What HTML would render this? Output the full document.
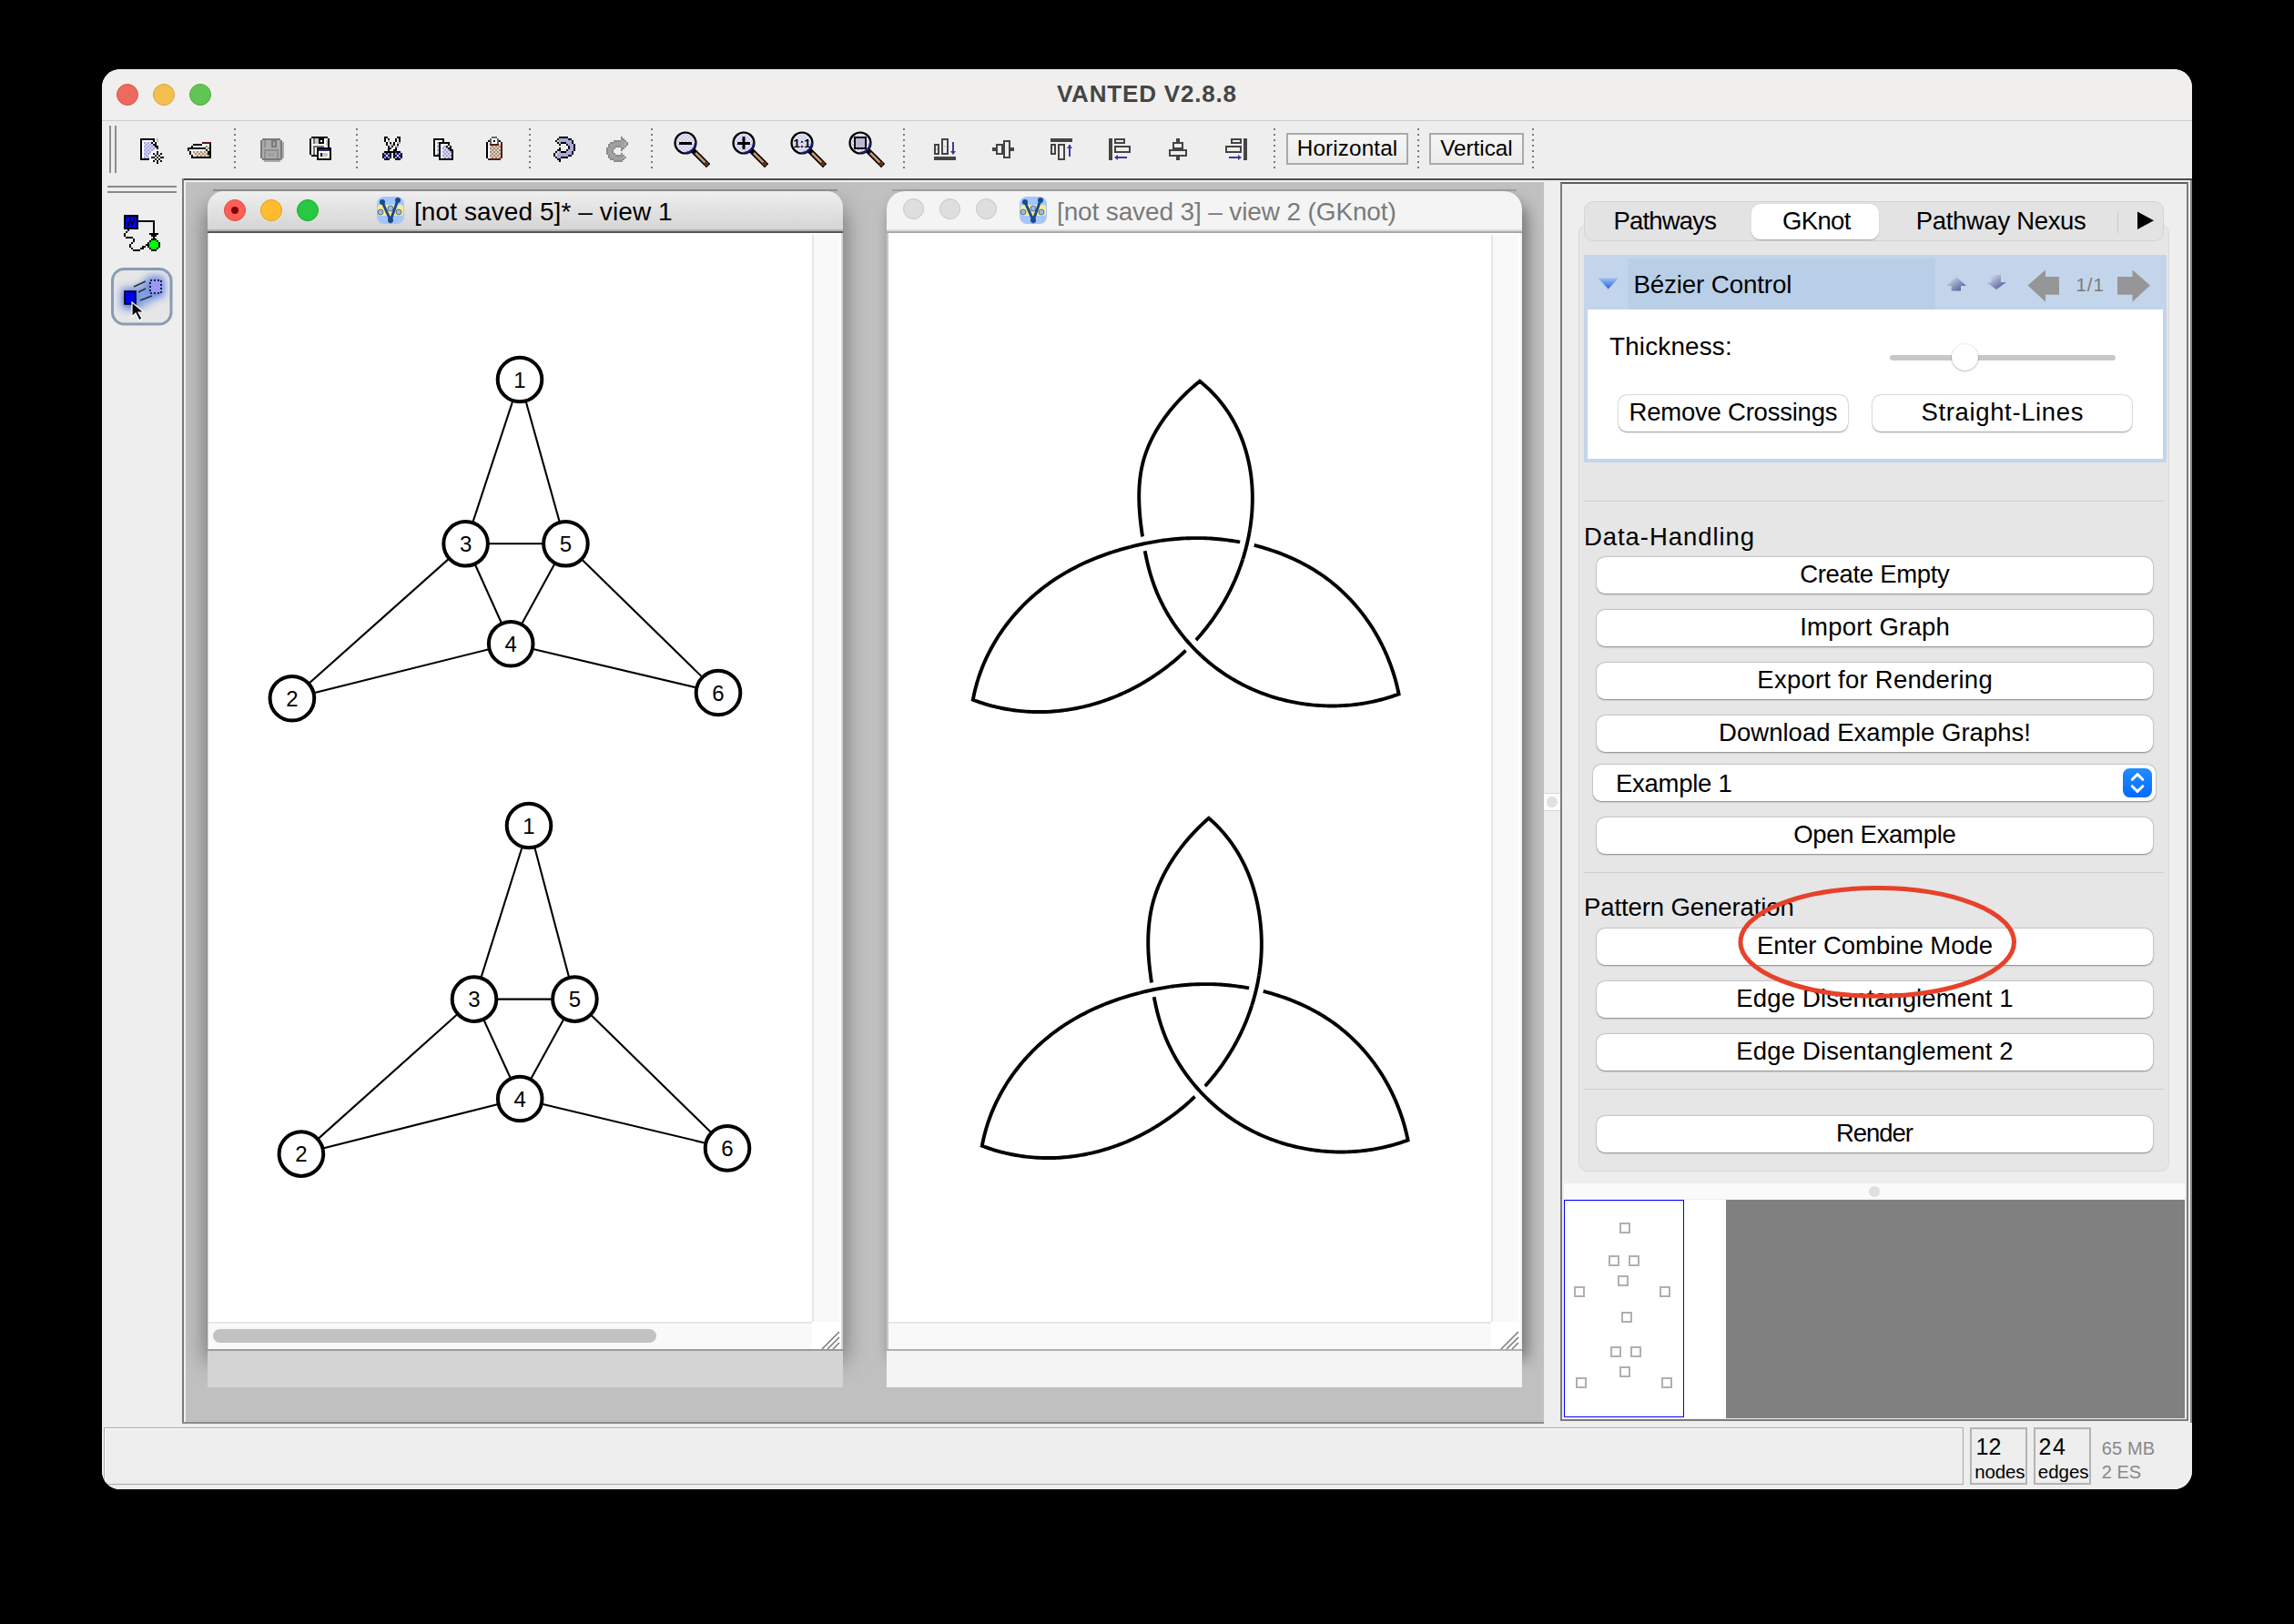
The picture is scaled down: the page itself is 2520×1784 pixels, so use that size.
<!DOCTYPE html><html><head><meta charset="utf-8"><style>
html,body{margin:0;padding:0;background:#000;width:2520px;height:1784px;overflow:hidden;font-family:"Liberation Sans",sans-serif;}
#win{position:absolute;left:0;top:0;width:2520px;height:1784px;clip-path:inset(76px 112px 148px 112px round 20px);background:#eeeeee;}
svg{position:absolute;left:0;top:0;}
</style></head><body><div id="win">
<div style="position:absolute;left:112px;top:76px;width:2296px;height:56px;background:#f0efee;"></div>
<div style="position:absolute;left:112px;top:132px;width:2296px;height:1px;background:#cdcdcd;"></div>
<div style="position:absolute;left:128px;top:92px;width:22px;height:22px;border-radius:50%;background:#ed6a5e;border:1px solid #d05a4f;"></div>
<div style="position:absolute;left:168px;top:92px;width:22px;height:22px;border-radius:50%;background:#f5bf4f;border:1px solid #d9a23c;"></div>
<div style="position:absolute;left:208px;top:92px;width:22px;height:22px;border-radius:50%;background:#61c554;border:1px solid #52a843;"></div>
<div style="position:absolute;left:1160.90px;top:89.47px;font-size:26px;line-height:29.90px;color:#454545;font-weight:bold;white-space:nowrap;letter-spacing:0.817px;">VANTED V2.8.8</div>
<div style="position:absolute;left:112px;top:133px;width:2296px;height:63px;background:#eeeeee;"></div>
<div style="position:absolute;left:200px;top:196px;width:2208px;height:2px;background:#4c4c4c;"></div>
<div style="position:absolute;left:1413px;top:146px;width:134px;height:35px;box-sizing:border-box;border:2px solid #a9a9a9;background:linear-gradient(#f6f6f6,#ececec);"></div>
<div style="position:absolute;left:1424.75px;top:149.01px;font-size:24.3px;line-height:27.95px;color:#000;font-weight:normal;white-space:nowrap;letter-spacing:0.121px;">Horizontal</div>
<div style="position:absolute;left:1570px;top:146px;width:104px;height:35px;box-sizing:border-box;border:2px solid #a9a9a9;background:linear-gradient(#f6f6f6,#ececec);"></div>
<div style="position:absolute;left:1582.20px;top:149.01px;font-size:24.3px;line-height:27.95px;color:#000;font-weight:normal;white-space:nowrap;letter-spacing:-0.015px;">Vertical</div>
<div style="position:absolute;left:118px;top:204px;width:76px;height:2px;background:#8a8a8a;"></div>
<div style="position:absolute;left:118px;top:210px;width:76px;height:2px;background:#8a8a8a;"></div>
<div style="position:absolute;left:200px;top:198px;width:1496px;height:1366px;background:#c0c0c0;"></div>
<div style="position:absolute;left:200px;top:196px;width:2px;height:1367px;background:#7a7a7a;"></div>
<div style="position:absolute;left:202px;top:198px;width:1494px;height:2px;background:#f0f0f0;"></div>
<div style="position:absolute;left:202px;top:198px;width:2px;height:1365px;background:#f0f0f0;"></div>
<div style="position:absolute;left:200px;top:1562px;width:1496px;height:2px;background:#8c8c8c;"></div>
<div style="position:absolute;left:1696px;top:198px;width:18px;height:1365px;background:#eeeeee;"></div>
<div style="position:absolute;left:1696px;top:871px;width:18px;height:20px;background:#fcfcfc;border-top:1px solid #d8d8d8;border-bottom:1px solid #d8d8d8;box-sizing:border-box;"></div>
<div style="position:absolute;left:1699px;top:875px;width:12px;height:12px;border-radius:50%;background:#e0e0e0;"></div>
<div style="position:absolute;left:1714px;top:200px;width:690px;height:1361px;background:#eeeeee;border:2px solid #7c7c7c;border-top-color:#5c5c5c;box-sizing:border-box;"></div>
<div style="position:absolute;left:2406px;top:198px;width:2px;height:1365px;background:#8a8a8a;"></div>
<div style="position:absolute;left:234px;top:207.5px;width:686px;height:2.0px;background:#909090;"></div>
<div style="position:absolute;left:980px;top:207.5px;width:686px;height:2.0px;background:#a0a0a0;"></div>
<div style="position:absolute;left:228px;top:226px;width:698px;height:1266px;border-radius:18px 18px 0 0;box-shadow:0 0 24px 2px rgba(0,0,0,0.42);"></div>
<div style="position:absolute;left:228px;top:210px;width:698px;height:1314px;border-radius:18px 18px 0 0;background:#d4d4d4;"></div>
<div style="position:absolute;left:228px;top:210px;width:698px;height:44px;border-radius:18px 18px 0 0;background:linear-gradient(#efefef,#d4d4d4);"></div>
<div style="position:absolute;left:228px;top:252px;width:698px;height:2px;background:#b4b4b4;"></div>
<div style="position:absolute;left:228px;top:254px;width:698px;height:2px;background:#555;"></div>
<div style="position:absolute;left:229px;top:256px;width:695px;height:1228px;background:#fff;"></div>
<div style="position:absolute;left:892px;top:258px;width:2px;height:1194px;background:#e6e6e6;"></div>
<div style="position:absolute;left:894px;top:258px;width:28px;height:1194px;background:#f9f9f9;"></div>
<div style="position:absolute;left:229px;top:1452px;width:663px;height:2px;background:#e6e6e6;"></div>
<div style="position:absolute;left:229px;top:1454px;width:663px;height:29px;background:#f9f9f9;"></div>
<div style="position:absolute;left:234px;top:1460px;width:487px;height:15px;border-radius:8px;background:#c2c2c2;"></div>
<svg width="2520" height="1784"><path d="M922 1463 L903 1482 M922 1469 L909 1482 M922 1475 L915 1482" stroke="#777" stroke-width="1.5"/></svg>
<div style="position:absolute;left:228px;top:1482px;width:698px;height:2px;background:#9a9a9a;"></div>
<div style="position:absolute;left:246px;top:219px;width:22px;height:22px;border-radius:50%;background:#fe5f57;border:1px solid #e2463f;"></div>
<div style="position:absolute;left:286px;top:219px;width:22px;height:22px;border-radius:50%;background:#febc2e;border:1px solid #e1a116;"></div>
<div style="position:absolute;left:326px;top:219px;width:22px;height:22px;border-radius:50%;background:#28c840;border:1px solid #1aab29;"></div>
<div style="position:absolute;left:254px;top:227px;width:8px;height:8px;border-radius:50%;background:#7e0508;"></div>
<div style="position:absolute;left:455.00px;top:217.16px;font-size:28px;line-height:32.20px;color:#000;font-weight:normal;white-space:nowrap;letter-spacing:0.089px;">[not saved 5]* – view 1</div>
<div style="position:absolute;left:974px;top:222px;width:698px;height:1270px;border-radius:20px 20px 0 0;box-shadow:5px 0 16px 1px rgba(0,0,0,0.40);"></div>
<div style="position:absolute;left:974px;top:210px;width:698px;height:1314px;border-radius:20px 20px 0 0;background:#f4f4f4;"></div>
<div style="position:absolute;left:974px;top:252px;width:698px;height:2px;background:#dcdcdc;"></div>
<div style="position:absolute;left:974px;top:256px;width:2px;height:1226px;background:#c8c8c8;"></div>
<div style="position:absolute;left:974px;top:254px;width:698px;height:2px;background:#a8a8a8;"></div>
<div style="position:absolute;left:976px;top:256px;width:694px;height:1226px;background:#fff;"></div>
<div style="position:absolute;left:1638px;top:258px;width:2px;height:1194px;background:#e6e6e6;"></div>
<div style="position:absolute;left:1640px;top:258px;width:28px;height:1194px;background:#f9f9f9;"></div>
<div style="position:absolute;left:976px;top:1452px;width:662px;height:2px;background:#e6e6e6;"></div>
<div style="position:absolute;left:976px;top:1454px;width:662px;height:28px;background:#f9f9f9;"></div>
<svg width="2520" height="1784"><path d="M1668 1463 L1649 1482 M1668 1469 L1655 1482 M1668 1475 L1661 1482" stroke="#777" stroke-width="1.5"/></svg>
<div style="position:absolute;left:974px;top:1482px;width:698px;height:2px;background:#b0b0b0;"></div>
<div style="position:absolute;left:992px;top:218px;width:23px;height:23px;border-radius:50%;background:#dedede;border:1px solid #c6c6c6;box-sizing:border-box;"></div>
<div style="position:absolute;left:1032px;top:218px;width:23px;height:23px;border-radius:50%;background:#dedede;border:1px solid #c6c6c6;box-sizing:border-box;"></div>
<div style="position:absolute;left:1072px;top:218px;width:23px;height:23px;border-radius:50%;background:#dedede;border:1px solid #c6c6c6;box-sizing:border-box;"></div>
<div style="position:absolute;left:1161.00px;top:217.16px;font-size:28px;line-height:32.20px;color:#7a7a7a;font-weight:normal;white-space:nowrap;letter-spacing:-0.133px;">[not saved 3] – view 2 (GKnot)</div>
<svg width="2520" height="1784"><line x1="571.0" y1="417.0" x2="511.6" y2="597.3" stroke="#000" stroke-width="2.1"/><line x1="571.0" y1="417.0" x2="621.4" y2="597.3" stroke="#000" stroke-width="2.1"/><line x1="511.6" y1="597.3" x2="621.4" y2="597.3" stroke="#000" stroke-width="2.1"/><line x1="511.6" y1="597.3" x2="561.2" y2="707.2" stroke="#000" stroke-width="2.1"/><line x1="621.4" y1="597.3" x2="561.2" y2="707.2" stroke="#000" stroke-width="2.1"/><line x1="511.6" y1="597.3" x2="320.9" y2="767.2" stroke="#000" stroke-width="2.1"/><line x1="621.4" y1="597.3" x2="789.0" y2="761.0" stroke="#000" stroke-width="2.1"/><line x1="561.2" y1="707.2" x2="320.9" y2="767.2" stroke="#000" stroke-width="2.1"/><line x1="561.2" y1="707.2" x2="789.0" y2="761.0" stroke="#000" stroke-width="2.1"/><circle cx="571.0" cy="417.0" r="24.3" fill="#fff" stroke="#000" stroke-width="4"/><text x="571.0" y="425.7" font-family="Liberation Sans" font-size="24" text-anchor="middle">1</text><circle cx="511.6" cy="597.3" r="24.3" fill="#fff" stroke="#000" stroke-width="4"/><text x="511.6" y="606.0" font-family="Liberation Sans" font-size="24" text-anchor="middle">3</text><circle cx="621.4" cy="597.3" r="24.3" fill="#fff" stroke="#000" stroke-width="4"/><text x="621.4" y="606.0" font-family="Liberation Sans" font-size="24" text-anchor="middle">5</text><circle cx="561.2" cy="707.2" r="24.3" fill="#fff" stroke="#000" stroke-width="4"/><text x="561.2" y="715.9" font-family="Liberation Sans" font-size="24" text-anchor="middle">4</text><circle cx="320.9" cy="767.2" r="24.3" fill="#fff" stroke="#000" stroke-width="4"/><text x="320.9" y="775.9" font-family="Liberation Sans" font-size="24" text-anchor="middle">2</text><circle cx="789.0" cy="761.0" r="24.3" fill="#fff" stroke="#000" stroke-width="4"/><text x="789.0" y="769.7" font-family="Liberation Sans" font-size="24" text-anchor="middle">6</text><line x1="581.0" y1="907.0" x2="521.0" y2="1097.6" stroke="#000" stroke-width="2.1"/><line x1="581.0" y1="907.0" x2="631.4" y2="1097.6" stroke="#000" stroke-width="2.1"/><line x1="521.0" y1="1097.6" x2="631.4" y2="1097.6" stroke="#000" stroke-width="2.1"/><line x1="521.0" y1="1097.6" x2="571.2" y2="1207.0" stroke="#000" stroke-width="2.1"/><line x1="631.4" y1="1097.6" x2="571.2" y2="1207.0" stroke="#000" stroke-width="2.1"/><line x1="521.0" y1="1097.6" x2="330.9" y2="1267.6" stroke="#000" stroke-width="2.1"/><line x1="631.4" y1="1097.6" x2="799.0" y2="1261.4" stroke="#000" stroke-width="2.1"/><line x1="571.2" y1="1207.0" x2="330.9" y2="1267.6" stroke="#000" stroke-width="2.1"/><line x1="571.2" y1="1207.0" x2="799.0" y2="1261.4" stroke="#000" stroke-width="2.1"/><circle cx="581.0" cy="907.0" r="24.3" fill="#fff" stroke="#000" stroke-width="4"/><text x="581.0" y="915.7" font-family="Liberation Sans" font-size="24" text-anchor="middle">1</text><circle cx="521.0" cy="1097.6" r="24.3" fill="#fff" stroke="#000" stroke-width="4"/><text x="521.0" y="1106.3" font-family="Liberation Sans" font-size="24" text-anchor="middle">3</text><circle cx="631.4" cy="1097.6" r="24.3" fill="#fff" stroke="#000" stroke-width="4"/><text x="631.4" y="1106.3" font-family="Liberation Sans" font-size="24" text-anchor="middle">5</text><circle cx="571.2" cy="1207.0" r="24.3" fill="#fff" stroke="#000" stroke-width="4"/><text x="571.2" y="1215.7" font-family="Liberation Sans" font-size="24" text-anchor="middle">4</text><circle cx="330.9" cy="1267.6" r="24.3" fill="#fff" stroke="#000" stroke-width="4"/><text x="330.9" y="1276.3" font-family="Liberation Sans" font-size="24" text-anchor="middle">2</text><circle cx="799.0" cy="1261.4" r="24.3" fill="#fff" stroke="#000" stroke-width="4"/><text x="799.0" y="1270.1" font-family="Liberation Sans" font-size="24" text-anchor="middle">6</text><path d="M1317.90 418.80L1315.92 420.40L1313.95 422.03L1311.99 423.70L1310.04 425.39L1308.10 427.12L1306.18 428.87L1304.27 430.66L1302.37 432.47L1300.50 434.31L1298.64 436.18L1296.80 438.08L1294.98 440.01L1293.18 441.96L1291.40 443.94L1289.65 445.94L1287.93 447.97L1286.23 450.02L1284.55 452.09L1282.91 454.19L1281.30 456.31L1279.71 458.46L1278.16 460.62L1276.64 462.81L1275.16 465.02L1273.71 467.25L1272.30 469.49L1270.92 471.76L1269.59 474.05L1268.29 476.35L1267.04 478.67L1265.82 481.01L1264.66 483.36L1263.53 485.73L1262.45 488.12L1261.42 490.52L1260.44 492.93L1259.51 495.36L1258.63 497.80L1257.80 500.26L1257.02 502.73L1256.29 505.21L1255.63 507.70L1255.01 510.20L1254.44 512.71L1253.93 515.23L1253.47 517.76L1253.05 520.30L1252.68 522.85L1252.36 525.40L1252.08 527.97L1251.84 530.54L1251.64 533.12L1251.49 535.70L1251.37 538.29L1251.29 540.89L1251.25 543.49L1251.24 546.10L1251.27 548.71L1251.33 551.32L1251.42 553.94L1251.54 556.56L1251.69 559.18L1251.86 561.80L1252.07 564.43L1252.29 567.06L1252.54 569.68L1252.82 572.31L1253.11 574.94L1253.43 577.56L1253.76 580.19L1254.11 582.81L1254.47 585.43L1254.85 588.05L1255.24 590.67L1255.65 593.28L1256.07 595.89L1256.51 598.49L1256.96 601.09L1257.43 603.69L1257.92 606.27L1258.43 608.86L1258.96 611.43L1259.51 614.00L1260.09 616.56L1260.68 619.12L1261.31 621.66L1261.96 624.20L1262.63 626.73L1263.34 629.24L1264.07 631.75L1264.83 634.25L1265.63 636.74L1266.46 639.21L1267.32 641.67L1268.21 644.12L1269.14 646.56L1270.10 648.99L1271.10 651.40L1272.13 653.79L1273.19 656.18L1274.29 658.55L1275.42 660.90L1276.58 663.24L1277.77 665.56L1278.99 667.87L1280.24 670.16L1281.53 672.44L1282.84 674.70L1284.19 676.94L1285.56 679.16L1286.97 681.37L1288.40 683.56L1289.86 685.73L1291.35 687.88L1292.87 690.01L1294.42 692.13L1295.99 694.22L1297.59 696.29L1299.22 698.35L1300.88 700.38L1302.56 702.39L1304.26 704.38L1305.99 706.35L1307.75 708.29L1309.53 710.21L1311.34 712.11L1313.17 713.99L1315.02 715.85L1316.90 717.68L1318.80 719.48L1320.72 721.26L1322.66 723.02L1324.63 724.75L1326.62 726.46L1328.63 728.14L1330.67 729.79L1332.72 731.42L1334.79 733.02L1336.89 734.59L1339.00 736.14L1341.13 737.66L1343.28 739.15L1345.46 740.61L1347.64 742.04L1349.85 743.45L1352.08 744.82L1354.32 746.17L1356.58 747.48L1358.86 748.77L1361.15 750.02L1363.46 751.25L1365.79 752.45L1368.13 753.62L1370.48 754.75L1372.85 755.86L1375.23 756.94L1377.63 757.99L1380.04 759.01L1382.46 760.00L1384.90 760.96L1387.34 761.88L1389.80 762.78L1392.27 763.65L1394.75 764.49L1397.24 765.30L1399.75 766.07L1402.26 766.82L1404.78 767.54L1407.31 768.22L1409.84 768.88L1412.39 769.50L1414.94 770.09L1417.50 770.66L1420.07 771.19L1422.65 771.69L1425.23 772.16L1427.82 772.60L1430.41 773.01L1433.01 773.39L1435.61 773.73L1438.21 774.05L1440.82 774.33L1443.44 774.58L1446.05 774.81L1448.67 775.00L1451.30 775.15L1453.92 775.28L1456.55 775.38L1459.17 775.44L1461.80 775.47L1464.43 775.47L1467.06 775.44L1469.68 775.38L1472.31 775.28L1474.93 775.16L1477.56 775.00L1480.18 774.81L1482.80 774.58L1485.42 774.33L1488.03 774.04L1490.64 773.72L1493.25 773.37L1495.85 772.99L1498.45 772.57L1501.04 772.12L1503.63 771.64L1506.21 771.13L1508.79 770.58L1511.36 770.00L1513.92 769.39L1516.47 768.74L1519.02 768.07L1521.56 767.36L1524.09 766.61L1526.61 765.84L1529.12 765.03L1531.63 764.18L1534.12 763.31L1536.60 762.40L1536.00 759.52L1535.36 756.64L1534.68 753.78L1533.97 750.93L1533.22 748.10L1532.43 745.28L1531.60 742.47L1530.74 739.67L1529.84 736.89L1528.90 734.13L1527.93 731.38L1526.92 728.65L1525.87 725.93L1524.79 723.23L1523.68 720.55L1522.53 717.88L1521.34 715.23L1520.12 712.60L1518.86 709.99L1517.57 707.40L1516.25 704.83L1514.89 702.28L1513.50 699.75L1512.08 697.24L1510.62 694.75L1509.13 692.28L1507.61 689.83L1506.05 687.41L1504.46 685.01L1502.84 682.63L1501.19 680.28L1499.50 677.95L1497.79 675.65L1496.04 673.37L1494.26 671.11L1492.46 668.89L1490.62 666.68L1488.75 664.51L1486.85 662.36L1484.92 660.24L1482.96 658.15L1480.97 656.08L1478.96 654.05L1476.91 652.04L1474.83 650.06L1472.73 648.11L1470.60 646.20L1468.44 644.31L1466.25 642.46L1464.03 640.63L1461.79 638.84L1459.52 637.08L1457.22 635.36L1454.90 633.67L1452.55 632.01L1450.17 630.38L1447.77 628.79L1445.34 627.24L1442.89 625.71L1440.41 624.23L1437.91 622.77L1435.39 621.35L1432.85 619.97L1430.28 618.61L1427.70 617.29L1425.10 616.01L1422.48 614.76L1419.84 613.54L1417.18 612.35L1414.51 611.20L1411.82 610.08L1409.12 608.99L1406.40 607.93L1403.67 606.91L1400.93 605.92L1398.17 604.97L1395.41 604.04L1392.63 603.15L1389.84 602.29L1387.05 601.46L1384.25 600.66L1381.44 599.90L1378.62 599.17L1375.80 598.46L1372.97 597.79L1370.13 597.15L1367.30 596.55L1364.45 595.97L1361.61 595.43L1358.76 594.92L1355.90 594.44L1353.05 593.99L1350.18 593.57L1347.32 593.19L1344.46 592.84L1341.59 592.52L1338.72 592.23L1335.84 591.97L1332.97 591.75L1330.09 591.56L1327.22 591.40L1324.34 591.27L1321.46 591.17L1318.59 591.11L1315.71 591.08L1312.83 591.08L1309.95 591.12L1307.08 591.19L1304.20 591.28L1301.32 591.41L1298.45 591.57L1295.58 591.77L1292.71 591.99L1289.84 592.24L1286.97 592.52L1284.10 592.83L1281.24 593.17L1278.38 593.54L1275.52 593.94L1272.66 594.37L1269.81 594.82L1266.96 595.30L1264.11 595.81L1261.27 596.35L1258.43 596.91L1255.59 597.49L1252.76 598.11L1249.93 598.75L1247.10 599.41L1244.28 600.10L1241.46 600.82L1238.65 601.55L1235.84 602.32L1233.04 603.11L1230.25 603.92L1227.46 604.76L1224.68 605.62L1221.91 606.52L1219.15 607.43L1216.39 608.38L1213.65 609.35L1210.91 610.34L1208.19 611.37L1205.48 612.42L1202.78 613.50L1200.09 614.60L1197.41 615.74L1194.75 616.90L1192.10 618.09L1189.47 619.31L1186.85 620.56L1184.24 621.83L1181.66 623.14L1179.08 624.47L1176.53 625.83L1173.99 627.23L1171.47 628.65L1168.97 630.11L1166.49 631.59L1164.03 633.10L1161.58 634.65L1159.16 636.22L1156.76 637.83L1154.38 639.47L1152.03 641.14L1149.69 642.83L1147.38 644.56L1145.09 646.32L1142.83 648.11L1140.59 649.92L1138.37 651.76L1136.18 653.64L1134.01 655.54L1131.87 657.47L1129.76 659.42L1127.67 661.41L1125.61 663.42L1123.57 665.46L1121.57 667.52L1119.59 669.61L1117.64 671.73L1115.72 673.87L1113.83 676.04L1111.96 678.23L1110.13 680.45L1108.33 682.69L1106.56 684.96L1104.82 687.25L1103.12 689.57L1101.44 691.91L1099.80 694.27L1098.19 696.65L1096.62 699.06L1095.08 701.49L1093.57 703.95L1092.10 706.42L1090.66 708.92L1089.26 711.44L1087.90 713.98L1086.57 716.54L1085.28 719.12L1084.02 721.72L1082.81 724.34L1081.63 726.98L1080.49 729.64L1079.39 732.32L1078.33 735.02L1077.30 737.74L1076.32 740.48L1075.38 743.23L1074.48 746.00L1073.62 748.79L1072.80 751.60L1072.03 754.43L1071.30 757.27L1070.61 760.13L1069.96 763.00L1069.36 765.89L1068.80 768.80L1071.42 769.78L1074.05 770.71L1076.69 771.61L1079.33 772.47L1081.97 773.30L1084.62 774.08L1087.27 774.83L1089.92 775.54L1092.57 776.21L1095.23 776.84L1097.89 777.44L1100.56 778.00L1103.22 778.52L1105.89 779.00L1108.56 779.45L1111.23 779.87L1113.90 780.24L1116.57 780.58L1119.24 780.89L1121.91 781.16L1124.58 781.39L1127.25 781.59L1129.92 781.76L1132.59 781.89L1135.26 781.98L1137.92 782.04L1140.59 782.07L1143.25 782.06L1145.91 782.02L1148.57 781.94L1151.22 781.83L1153.87 781.69L1156.52 781.52L1159.17 781.31L1161.81 781.07L1164.44 780.79L1167.08 780.49L1169.70 780.15L1172.33 779.78L1174.94 779.38L1177.56 778.94L1180.16 778.48L1182.76 777.98L1185.36 777.46L1187.95 776.90L1190.53 776.31L1193.10 775.69L1195.67 775.04L1198.23 774.36L1200.78 773.65L1203.33 772.91L1205.86 772.15L1208.39 771.35L1210.91 770.52L1213.42 769.66L1215.92 768.78L1218.41 767.87L1220.89 766.92L1223.36 765.95L1225.82 764.96L1228.27 763.93L1230.71 762.88L1233.14 761.80L1235.56 760.69L1237.96 759.55L1240.35 758.39L1242.73 757.20L1245.10 755.99L1247.46 754.75L1249.80 753.48L1252.13 752.18L1254.45 750.86L1256.75 749.52L1259.04 748.15L1261.31 746.75L1263.57 745.33L1265.82 743.89L1268.04 742.42L1270.26 740.92L1272.46 739.40L1274.64 737.86L1276.81 736.29L1278.96 734.70L1281.09 733.09L1283.21 731.45L1285.31 729.79L1287.39 728.11L1289.46 726.40L1291.51 724.67L1293.53 722.92L1295.55 721.15L1297.54 719.35L1299.51 717.53L1301.46 715.69L1303.40 713.83L1305.31 711.95L1307.21 710.05L1309.08 708.13L1310.94 706.18L1312.77 704.22L1314.58 702.23L1316.37 700.23L1318.14 698.20L1319.89 696.16L1321.62 694.09L1323.32 692.01L1325.00 689.91L1326.66 687.78L1328.29 685.64L1329.90 683.48L1331.49 681.31L1333.05 679.11L1334.59 676.90L1336.11 674.66L1337.60 672.41L1339.06 670.15L1340.51 667.86L1341.92 665.56L1343.31 663.24L1344.67 660.91L1346.01 658.56L1347.32 656.19L1348.60 653.80L1349.86 651.40L1351.09 648.99L1352.29 646.56L1353.47 644.12L1354.62 641.66L1355.74 639.19L1356.83 636.70L1357.89 634.21L1358.93 631.70L1359.93 629.18L1360.91 626.65L1361.86 624.10L1362.78 621.55L1363.67 618.99L1364.53 616.42L1365.36 613.84L1366.16 611.25L1366.93 608.65L1367.67 606.05L1368.37 603.44L1369.05 600.82L1369.70 598.19L1370.32 595.56L1370.90 592.93L1371.45 590.29L1371.97 587.64L1372.46 584.99L1372.92 582.34L1373.35 579.68L1373.74 577.02L1374.10 574.36L1374.43 571.70L1374.72 569.04L1374.98 566.37L1375.21 563.70L1375.40 561.04L1375.56 558.37L1375.68 555.71L1375.78 553.04L1375.83 550.38L1375.85 547.72L1375.84 545.06L1375.79 542.41L1375.71 539.76L1375.59 537.11L1375.44 534.47L1375.25 531.83L1375.02 529.20L1374.76 526.57L1374.46 523.95L1374.12 521.34L1373.75 518.73L1373.34 516.13L1372.90 513.54L1372.41 510.95L1371.89 508.38L1371.33 505.81L1370.73 503.26L1370.10 500.71L1369.43 498.17L1368.71 495.65L1367.96 493.14L1367.17 490.64L1366.34 488.15L1365.48 485.68L1364.57 483.22L1363.62 480.77L1362.63 478.34L1361.60 475.93L1360.53 473.53L1359.43 471.15L1358.28 468.79L1357.09 466.45L1355.85 464.12L1354.58 461.81L1353.26 459.53L1351.91 457.26L1350.51 455.01L1349.07 452.79L1347.58 450.59L1346.06 448.41L1344.49 446.25L1342.87 444.12L1341.22 442.01L1339.52 439.92L1337.78 437.86L1335.99 435.83L1334.16 433.82L1332.28 431.85L1330.36 429.89L1328.40 427.97L1326.39 426.08L1324.34 424.21L1322.24 422.38L1320.09 420.57L1317.90 418.80Z" fill="none" stroke="#000" stroke-width="3.9" stroke-linejoin="miter" stroke-miterlimit="20"/><clipPath id="cpa0_0"><circle cx="1258.5" cy="597.5" r="17"/></clipPath><g clip-path="url(#cpa0_0)"><path d="M1536.60 762.40L1536.00 759.52L1535.36 756.64L1534.68 753.78L1533.97 750.93L1533.22 748.10L1532.43 745.28L1531.60 742.47L1530.74 739.67L1529.84 736.89L1528.90 734.13L1527.93 731.38L1526.92 728.65L1525.87 725.93L1524.79 723.23L1523.68 720.55L1522.53 717.88L1521.34 715.23L1520.12 712.60L1518.86 709.99L1517.57 707.40L1516.25 704.83L1514.89 702.28L1513.50 699.75L1512.08 697.24L1510.62 694.75L1509.13 692.28L1507.61 689.83L1506.05 687.41L1504.46 685.01L1502.84 682.63L1501.19 680.28L1499.50 677.95L1497.79 675.65L1496.04 673.37L1494.26 671.11L1492.46 668.89L1490.62 666.68L1488.75 664.51L1486.85 662.36L1484.92 660.24L1482.96 658.15L1480.97 656.08L1478.96 654.05L1476.91 652.04L1474.83 650.06L1472.73 648.11L1470.60 646.20L1468.44 644.31L1466.25 642.46L1464.03 640.63L1461.79 638.84L1459.52 637.08L1457.22 635.36L1454.90 633.67L1452.55 632.01L1450.17 630.38L1447.77 628.79L1445.34 627.24L1442.89 625.71L1440.41 624.23L1437.91 622.77L1435.39 621.35L1432.85 619.97L1430.28 618.61L1427.70 617.29L1425.10 616.01L1422.48 614.76L1419.84 613.54L1417.18 612.35L1414.51 611.20L1411.82 610.08L1409.12 608.99L1406.40 607.93L1403.67 606.91L1400.93 605.92L1398.17 604.97L1395.41 604.04L1392.63 603.15L1389.84 602.29L1387.05 601.46L1384.25 600.66L1381.44 599.90L1378.62 599.17L1375.80 598.46L1372.97 597.79L1370.13 597.15L1367.30 596.55L1364.45 595.97L1361.61 595.43L1358.76 594.92L1355.90 594.44L1353.05 593.99L1350.18 593.57L1347.32 593.19L1344.46 592.84L1341.59 592.52L1338.72 592.23L1335.84 591.97L1332.97 591.75L1330.09 591.56L1327.22 591.40L1324.34 591.27L1321.46 591.17L1318.59 591.11L1315.71 591.08L1312.83 591.08L1309.95 591.12L1307.08 591.19L1304.20 591.28L1301.32 591.41L1298.45 591.57L1295.58 591.77L1292.71 591.99L1289.84 592.24L1286.97 592.52L1284.10 592.83L1281.24 593.17L1278.38 593.54L1275.52 593.94L1272.66 594.37L1269.81 594.82L1266.96 595.30L1264.11 595.81L1261.27 596.35L1258.43 596.91L1255.59 597.49L1252.76 598.11L1249.93 598.75L1247.10 599.41L1244.28 600.10L1241.46 600.82L1238.65 601.55L1235.84 602.32L1233.04 603.11L1230.25 603.92L1227.46 604.76L1224.68 605.62L1221.91 606.52L1219.15 607.43L1216.39 608.38L1213.65 609.35L1210.91 610.34L1208.19 611.37L1205.48 612.42L1202.78 613.50L1200.09 614.60L1197.41 615.74L1194.75 616.90L1192.10 618.09L1189.47 619.31L1186.85 620.56L1184.24 621.83L1181.66 623.14L1179.08 624.47L1176.53 625.83L1173.99 627.23L1171.47 628.65L1168.97 630.11L1166.49 631.59L1164.03 633.10L1161.58 634.65L1159.16 636.22L1156.76 637.83L1154.38 639.47L1152.03 641.14L1149.69 642.83L1147.38 644.56L1145.09 646.32L1142.83 648.11L1140.59 649.92L1138.37 651.76L1136.18 653.64L1134.01 655.54L1131.87 657.47L1129.76 659.42L1127.67 661.41L1125.61 663.42L1123.57 665.46L1121.57 667.52L1119.59 669.61L1117.64 671.73L1115.72 673.87L1113.83 676.04L1111.96 678.23L1110.13 680.45L1108.33 682.69L1106.56 684.96L1104.82 687.25L1103.12 689.57L1101.44 691.91L1099.80 694.27L1098.19 696.65L1096.62 699.06L1095.08 701.49L1093.57 703.95L1092.10 706.42L1090.66 708.92L1089.26 711.44L1087.90 713.98L1086.57 716.54L1085.28 719.12L1084.02 721.72L1082.81 724.34L1081.63 726.98L1080.49 729.64L1079.39 732.32L1078.33 735.02L1077.30 737.74L1076.32 740.48L1075.38 743.23L1074.48 746.00L1073.62 748.79L1072.80 751.60L1072.03 754.43L1071.30 757.27L1070.61 760.13L1069.96 763.00L1069.36 765.89L1068.80 768.80" fill="none" stroke="#fff" stroke-width="16"/><path d="M1536.60 762.40L1536.00 759.52L1535.36 756.64L1534.68 753.78L1533.97 750.93L1533.22 748.10L1532.43 745.28L1531.60 742.47L1530.74 739.67L1529.84 736.89L1528.90 734.13L1527.93 731.38L1526.92 728.65L1525.87 725.93L1524.79 723.23L1523.68 720.55L1522.53 717.88L1521.34 715.23L1520.12 712.60L1518.86 709.99L1517.57 707.40L1516.25 704.83L1514.89 702.28L1513.50 699.75L1512.08 697.24L1510.62 694.75L1509.13 692.28L1507.61 689.83L1506.05 687.41L1504.46 685.01L1502.84 682.63L1501.19 680.28L1499.50 677.95L1497.79 675.65L1496.04 673.37L1494.26 671.11L1492.46 668.89L1490.62 666.68L1488.75 664.51L1486.85 662.36L1484.92 660.24L1482.96 658.15L1480.97 656.08L1478.96 654.05L1476.91 652.04L1474.83 650.06L1472.73 648.11L1470.60 646.20L1468.44 644.31L1466.25 642.46L1464.03 640.63L1461.79 638.84L1459.52 637.08L1457.22 635.36L1454.90 633.67L1452.55 632.01L1450.17 630.38L1447.77 628.79L1445.34 627.24L1442.89 625.71L1440.41 624.23L1437.91 622.77L1435.39 621.35L1432.85 619.97L1430.28 618.61L1427.70 617.29L1425.10 616.01L1422.48 614.76L1419.84 613.54L1417.18 612.35L1414.51 611.20L1411.82 610.08L1409.12 608.99L1406.40 607.93L1403.67 606.91L1400.93 605.92L1398.17 604.97L1395.41 604.04L1392.63 603.15L1389.84 602.29L1387.05 601.46L1384.25 600.66L1381.44 599.90L1378.62 599.17L1375.80 598.46L1372.97 597.79L1370.13 597.15L1367.30 596.55L1364.45 595.97L1361.61 595.43L1358.76 594.92L1355.90 594.44L1353.05 593.99L1350.18 593.57L1347.32 593.19L1344.46 592.84L1341.59 592.52L1338.72 592.23L1335.84 591.97L1332.97 591.75L1330.09 591.56L1327.22 591.40L1324.34 591.27L1321.46 591.17L1318.59 591.11L1315.71 591.08L1312.83 591.08L1309.95 591.12L1307.08 591.19L1304.20 591.28L1301.32 591.41L1298.45 591.57L1295.58 591.77L1292.71 591.99L1289.84 592.24L1286.97 592.52L1284.10 592.83L1281.24 593.17L1278.38 593.54L1275.52 593.94L1272.66 594.37L1269.81 594.82L1266.96 595.30L1264.11 595.81L1261.27 596.35L1258.43 596.91L1255.59 597.49L1252.76 598.11L1249.93 598.75L1247.10 599.41L1244.28 600.10L1241.46 600.82L1238.65 601.55L1235.84 602.32L1233.04 603.11L1230.25 603.92L1227.46 604.76L1224.68 605.62L1221.91 606.52L1219.15 607.43L1216.39 608.38L1213.65 609.35L1210.91 610.34L1208.19 611.37L1205.48 612.42L1202.78 613.50L1200.09 614.60L1197.41 615.74L1194.75 616.90L1192.10 618.09L1189.47 619.31L1186.85 620.56L1184.24 621.83L1181.66 623.14L1179.08 624.47L1176.53 625.83L1173.99 627.23L1171.47 628.65L1168.97 630.11L1166.49 631.59L1164.03 633.10L1161.58 634.65L1159.16 636.22L1156.76 637.83L1154.38 639.47L1152.03 641.14L1149.69 642.83L1147.38 644.56L1145.09 646.32L1142.83 648.11L1140.59 649.92L1138.37 651.76L1136.18 653.64L1134.01 655.54L1131.87 657.47L1129.76 659.42L1127.67 661.41L1125.61 663.42L1123.57 665.46L1121.57 667.52L1119.59 669.61L1117.64 671.73L1115.72 673.87L1113.83 676.04L1111.96 678.23L1110.13 680.45L1108.33 682.69L1106.56 684.96L1104.82 687.25L1103.12 689.57L1101.44 691.91L1099.80 694.27L1098.19 696.65L1096.62 699.06L1095.08 701.49L1093.57 703.95L1092.10 706.42L1090.66 708.92L1089.26 711.44L1087.90 713.98L1086.57 716.54L1085.28 719.12L1084.02 721.72L1082.81 724.34L1081.63 726.98L1080.49 729.64L1079.39 732.32L1078.33 735.02L1077.30 737.74L1076.32 740.48L1075.38 743.23L1074.48 746.00L1073.62 748.79L1072.80 751.60L1072.03 754.43L1071.30 757.27L1070.61 760.13L1069.96 763.00L1069.36 765.89L1068.80 768.80" fill="none" stroke="#000" stroke-width="3.9"/></g><clipPath id="cpb0_0"><circle cx="1367.5" cy="597.5" r="17"/></clipPath><g clip-path="url(#cpb0_0)"><path d="M1068.80 768.80L1071.42 769.78L1074.05 770.71L1076.69 771.61L1079.33 772.47L1081.97 773.30L1084.62 774.08L1087.27 774.83L1089.92 775.54L1092.57 776.21L1095.23 776.84L1097.89 777.44L1100.56 778.00L1103.22 778.52L1105.89 779.00L1108.56 779.45L1111.23 779.87L1113.90 780.24L1116.57 780.58L1119.24 780.89L1121.91 781.16L1124.58 781.39L1127.25 781.59L1129.92 781.76L1132.59 781.89L1135.26 781.98L1137.92 782.04L1140.59 782.07L1143.25 782.06L1145.91 782.02L1148.57 781.94L1151.22 781.83L1153.87 781.69L1156.52 781.52L1159.17 781.31L1161.81 781.07L1164.44 780.79L1167.08 780.49L1169.70 780.15L1172.33 779.78L1174.94 779.38L1177.56 778.94L1180.16 778.48L1182.76 777.98L1185.36 777.46L1187.95 776.90L1190.53 776.31L1193.10 775.69L1195.67 775.04L1198.23 774.36L1200.78 773.65L1203.33 772.91L1205.86 772.15L1208.39 771.35L1210.91 770.52L1213.42 769.66L1215.92 768.78L1218.41 767.87L1220.89 766.92L1223.36 765.95L1225.82 764.96L1228.27 763.93L1230.71 762.88L1233.14 761.80L1235.56 760.69L1237.96 759.55L1240.35 758.39L1242.73 757.20L1245.10 755.99L1247.46 754.75L1249.80 753.48L1252.13 752.18L1254.45 750.86L1256.75 749.52L1259.04 748.15L1261.31 746.75L1263.57 745.33L1265.82 743.89L1268.04 742.42L1270.26 740.92L1272.46 739.40L1274.64 737.86L1276.81 736.29L1278.96 734.70L1281.09 733.09L1283.21 731.45L1285.31 729.79L1287.39 728.11L1289.46 726.40L1291.51 724.67L1293.53 722.92L1295.55 721.15L1297.54 719.35L1299.51 717.53L1301.46 715.69L1303.40 713.83L1305.31 711.95L1307.21 710.05L1309.08 708.13L1310.94 706.18L1312.77 704.22L1314.58 702.23L1316.37 700.23L1318.14 698.20L1319.89 696.16L1321.62 694.09L1323.32 692.01L1325.00 689.91L1326.66 687.78L1328.29 685.64L1329.90 683.48L1331.49 681.31L1333.05 679.11L1334.59 676.90L1336.11 674.66L1337.60 672.41L1339.06 670.15L1340.51 667.86L1341.92 665.56L1343.31 663.24L1344.67 660.91L1346.01 658.56L1347.32 656.19L1348.60 653.80L1349.86 651.40L1351.09 648.99L1352.29 646.56L1353.47 644.12L1354.62 641.66L1355.74 639.19L1356.83 636.70L1357.89 634.21L1358.93 631.70L1359.93 629.18L1360.91 626.65L1361.86 624.10L1362.78 621.55L1363.67 618.99L1364.53 616.42L1365.36 613.84L1366.16 611.25L1366.93 608.65L1367.67 606.05L1368.37 603.44L1369.05 600.82L1369.70 598.19L1370.32 595.56L1370.90 592.93L1371.45 590.29L1371.97 587.64L1372.46 584.99L1372.92 582.34L1373.35 579.68L1373.74 577.02L1374.10 574.36L1374.43 571.70L1374.72 569.04L1374.98 566.37L1375.21 563.70L1375.40 561.04L1375.56 558.37L1375.68 555.71L1375.78 553.04L1375.83 550.38L1375.85 547.72L1375.84 545.06L1375.79 542.41L1375.71 539.76L1375.59 537.11L1375.44 534.47L1375.25 531.83L1375.02 529.20L1374.76 526.57L1374.46 523.95L1374.12 521.34L1373.75 518.73L1373.34 516.13L1372.90 513.54L1372.41 510.95L1371.89 508.38L1371.33 505.81L1370.73 503.26L1370.10 500.71L1369.43 498.17L1368.71 495.65L1367.96 493.14L1367.17 490.64L1366.34 488.15L1365.48 485.68L1364.57 483.22L1363.62 480.77L1362.63 478.34L1361.60 475.93L1360.53 473.53L1359.43 471.15L1358.28 468.79L1357.09 466.45L1355.85 464.12L1354.58 461.81L1353.26 459.53L1351.91 457.26L1350.51 455.01L1349.07 452.79L1347.58 450.59L1346.06 448.41L1344.49 446.25L1342.87 444.12L1341.22 442.01L1339.52 439.92L1337.78 437.86L1335.99 435.83L1334.16 433.82L1332.28 431.85L1330.36 429.89L1328.40 427.97L1326.39 426.08L1324.34 424.21L1322.24 422.38L1320.09 420.57L1317.90 418.80" fill="none" stroke="#fff" stroke-width="16"/><path d="M1068.80 768.80L1071.42 769.78L1074.05 770.71L1076.69 771.61L1079.33 772.47L1081.97 773.30L1084.62 774.08L1087.27 774.83L1089.92 775.54L1092.57 776.21L1095.23 776.84L1097.89 777.44L1100.56 778.00L1103.22 778.52L1105.89 779.00L1108.56 779.45L1111.23 779.87L1113.90 780.24L1116.57 780.58L1119.24 780.89L1121.91 781.16L1124.58 781.39L1127.25 781.59L1129.92 781.76L1132.59 781.89L1135.26 781.98L1137.92 782.04L1140.59 782.07L1143.25 782.06L1145.91 782.02L1148.57 781.94L1151.22 781.83L1153.87 781.69L1156.52 781.52L1159.17 781.31L1161.81 781.07L1164.44 780.79L1167.08 780.49L1169.70 780.15L1172.33 779.78L1174.94 779.38L1177.56 778.94L1180.16 778.48L1182.76 777.98L1185.36 777.46L1187.95 776.90L1190.53 776.31L1193.10 775.69L1195.67 775.04L1198.23 774.36L1200.78 773.65L1203.33 772.91L1205.86 772.15L1208.39 771.35L1210.91 770.52L1213.42 769.66L1215.92 768.78L1218.41 767.87L1220.89 766.92L1223.36 765.95L1225.82 764.96L1228.27 763.93L1230.71 762.88L1233.14 761.80L1235.56 760.69L1237.96 759.55L1240.35 758.39L1242.73 757.20L1245.10 755.99L1247.46 754.75L1249.80 753.48L1252.13 752.18L1254.45 750.86L1256.75 749.52L1259.04 748.15L1261.31 746.75L1263.57 745.33L1265.82 743.89L1268.04 742.42L1270.26 740.92L1272.46 739.40L1274.64 737.86L1276.81 736.29L1278.96 734.70L1281.09 733.09L1283.21 731.45L1285.31 729.79L1287.39 728.11L1289.46 726.40L1291.51 724.67L1293.53 722.92L1295.55 721.15L1297.54 719.35L1299.51 717.53L1301.46 715.69L1303.40 713.83L1305.31 711.95L1307.21 710.05L1309.08 708.13L1310.94 706.18L1312.77 704.22L1314.58 702.23L1316.37 700.23L1318.14 698.20L1319.89 696.16L1321.62 694.09L1323.32 692.01L1325.00 689.91L1326.66 687.78L1328.29 685.64L1329.90 683.48L1331.49 681.31L1333.05 679.11L1334.59 676.90L1336.11 674.66L1337.60 672.41L1339.06 670.15L1340.51 667.86L1341.92 665.56L1343.31 663.24L1344.67 660.91L1346.01 658.56L1347.32 656.19L1348.60 653.80L1349.86 651.40L1351.09 648.99L1352.29 646.56L1353.47 644.12L1354.62 641.66L1355.74 639.19L1356.83 636.70L1357.89 634.21L1358.93 631.70L1359.93 629.18L1360.91 626.65L1361.86 624.10L1362.78 621.55L1363.67 618.99L1364.53 616.42L1365.36 613.84L1366.16 611.25L1366.93 608.65L1367.67 606.05L1368.37 603.44L1369.05 600.82L1369.70 598.19L1370.32 595.56L1370.90 592.93L1371.45 590.29L1371.97 587.64L1372.46 584.99L1372.92 582.34L1373.35 579.68L1373.74 577.02L1374.10 574.36L1374.43 571.70L1374.72 569.04L1374.98 566.37L1375.21 563.70L1375.40 561.04L1375.56 558.37L1375.68 555.71L1375.78 553.04L1375.83 550.38L1375.85 547.72L1375.84 545.06L1375.79 542.41L1375.71 539.76L1375.59 537.11L1375.44 534.47L1375.25 531.83L1375.02 529.20L1374.76 526.57L1374.46 523.95L1374.12 521.34L1373.75 518.73L1373.34 516.13L1372.90 513.54L1372.41 510.95L1371.89 508.38L1371.33 505.81L1370.73 503.26L1370.10 500.71L1369.43 498.17L1368.71 495.65L1367.96 493.14L1367.17 490.64L1366.34 488.15L1365.48 485.68L1364.57 483.22L1363.62 480.77L1362.63 478.34L1361.60 475.93L1360.53 473.53L1359.43 471.15L1358.28 468.79L1357.09 466.45L1355.85 464.12L1354.58 461.81L1353.26 459.53L1351.91 457.26L1350.51 455.01L1349.07 452.79L1347.58 450.59L1346.06 448.41L1344.49 446.25L1342.87 444.12L1341.22 442.01L1339.52 439.92L1337.78 437.86L1335.99 435.83L1334.16 433.82L1332.28 431.85L1330.36 429.89L1328.40 427.97L1326.39 426.08L1324.34 424.21L1322.24 422.38L1320.09 420.57L1317.90 418.80" fill="none" stroke="#000" stroke-width="3.9"/></g><clipPath id="cpc0_0"><circle cx="1308.5" cy="708.0" r="17"/></clipPath><g clip-path="url(#cpc0_0)"><path d="M1317.90 418.80L1315.92 420.40L1313.95 422.03L1311.99 423.70L1310.04 425.39L1308.10 427.12L1306.18 428.87L1304.27 430.66L1302.37 432.47L1300.50 434.31L1298.64 436.18L1296.80 438.08L1294.98 440.01L1293.18 441.96L1291.40 443.94L1289.65 445.94L1287.93 447.97L1286.23 450.02L1284.55 452.09L1282.91 454.19L1281.30 456.31L1279.71 458.46L1278.16 460.62L1276.64 462.81L1275.16 465.02L1273.71 467.25L1272.30 469.49L1270.92 471.76L1269.59 474.05L1268.29 476.35L1267.04 478.67L1265.82 481.01L1264.66 483.36L1263.53 485.73L1262.45 488.12L1261.42 490.52L1260.44 492.93L1259.51 495.36L1258.63 497.80L1257.80 500.26L1257.02 502.73L1256.29 505.21L1255.63 507.70L1255.01 510.20L1254.44 512.71L1253.93 515.23L1253.47 517.76L1253.05 520.30L1252.68 522.85L1252.36 525.40L1252.08 527.97L1251.84 530.54L1251.64 533.12L1251.49 535.70L1251.37 538.29L1251.29 540.89L1251.25 543.49L1251.24 546.10L1251.27 548.71L1251.33 551.32L1251.42 553.94L1251.54 556.56L1251.69 559.18L1251.86 561.80L1252.07 564.43L1252.29 567.06L1252.54 569.68L1252.82 572.31L1253.11 574.94L1253.43 577.56L1253.76 580.19L1254.11 582.81L1254.47 585.43L1254.85 588.05L1255.24 590.67L1255.65 593.28L1256.07 595.89L1256.51 598.49L1256.96 601.09L1257.43 603.69L1257.92 606.27L1258.43 608.86L1258.96 611.43L1259.51 614.00L1260.09 616.56L1260.68 619.12L1261.31 621.66L1261.96 624.20L1262.63 626.73L1263.34 629.24L1264.07 631.75L1264.83 634.25L1265.63 636.74L1266.46 639.21L1267.32 641.67L1268.21 644.12L1269.14 646.56L1270.10 648.99L1271.10 651.40L1272.13 653.79L1273.19 656.18L1274.29 658.55L1275.42 660.90L1276.58 663.24L1277.77 665.56L1278.99 667.87L1280.24 670.16L1281.53 672.44L1282.84 674.70L1284.19 676.94L1285.56 679.16L1286.97 681.37L1288.40 683.56L1289.86 685.73L1291.35 687.88L1292.87 690.01L1294.42 692.13L1295.99 694.22L1297.59 696.29L1299.22 698.35L1300.88 700.38L1302.56 702.39L1304.26 704.38L1305.99 706.35L1307.75 708.29L1309.53 710.21L1311.34 712.11L1313.17 713.99L1315.02 715.85L1316.90 717.68L1318.80 719.48L1320.72 721.26L1322.66 723.02L1324.63 724.75L1326.62 726.46L1328.63 728.14L1330.67 729.79L1332.72 731.42L1334.79 733.02L1336.89 734.59L1339.00 736.14L1341.13 737.66L1343.28 739.15L1345.46 740.61L1347.64 742.04L1349.85 743.45L1352.08 744.82L1354.32 746.17L1356.58 747.48L1358.86 748.77L1361.15 750.02L1363.46 751.25L1365.79 752.45L1368.13 753.62L1370.48 754.75L1372.85 755.86L1375.23 756.94L1377.63 757.99L1380.04 759.01L1382.46 760.00L1384.90 760.96L1387.34 761.88L1389.80 762.78L1392.27 763.65L1394.75 764.49L1397.24 765.30L1399.75 766.07L1402.26 766.82L1404.78 767.54L1407.31 768.22L1409.84 768.88L1412.39 769.50L1414.94 770.09L1417.50 770.66L1420.07 771.19L1422.65 771.69L1425.23 772.16L1427.82 772.60L1430.41 773.01L1433.01 773.39L1435.61 773.73L1438.21 774.05L1440.82 774.33L1443.44 774.58L1446.05 774.81L1448.67 775.00L1451.30 775.15L1453.92 775.28L1456.55 775.38L1459.17 775.44L1461.80 775.47L1464.43 775.47L1467.06 775.44L1469.68 775.38L1472.31 775.28L1474.93 775.16L1477.56 775.00L1480.18 774.81L1482.80 774.58L1485.42 774.33L1488.03 774.04L1490.64 773.72L1493.25 773.37L1495.85 772.99L1498.45 772.57L1501.04 772.12L1503.63 771.64L1506.21 771.13L1508.79 770.58L1511.36 770.00L1513.92 769.39L1516.47 768.74L1519.02 768.07L1521.56 767.36L1524.09 766.61L1526.61 765.84L1529.12 765.03L1531.63 764.18L1534.12 763.31L1536.60 762.40" fill="none" stroke="#fff" stroke-width="16"/><path d="M1317.90 418.80L1315.92 420.40L1313.95 422.03L1311.99 423.70L1310.04 425.39L1308.10 427.12L1306.18 428.87L1304.27 430.66L1302.37 432.47L1300.50 434.31L1298.64 436.18L1296.80 438.08L1294.98 440.01L1293.18 441.96L1291.40 443.94L1289.65 445.94L1287.93 447.97L1286.23 450.02L1284.55 452.09L1282.91 454.19L1281.30 456.31L1279.71 458.46L1278.16 460.62L1276.64 462.81L1275.16 465.02L1273.71 467.25L1272.30 469.49L1270.92 471.76L1269.59 474.05L1268.29 476.35L1267.04 478.67L1265.82 481.01L1264.66 483.36L1263.53 485.73L1262.45 488.12L1261.42 490.52L1260.44 492.93L1259.51 495.36L1258.63 497.80L1257.80 500.26L1257.02 502.73L1256.29 505.21L1255.63 507.70L1255.01 510.20L1254.44 512.71L1253.93 515.23L1253.47 517.76L1253.05 520.30L1252.68 522.85L1252.36 525.40L1252.08 527.97L1251.84 530.54L1251.64 533.12L1251.49 535.70L1251.37 538.29L1251.29 540.89L1251.25 543.49L1251.24 546.10L1251.27 548.71L1251.33 551.32L1251.42 553.94L1251.54 556.56L1251.69 559.18L1251.86 561.80L1252.07 564.43L1252.29 567.06L1252.54 569.68L1252.82 572.31L1253.11 574.94L1253.43 577.56L1253.76 580.19L1254.11 582.81L1254.47 585.43L1254.85 588.05L1255.24 590.67L1255.65 593.28L1256.07 595.89L1256.51 598.49L1256.96 601.09L1257.43 603.69L1257.92 606.27L1258.43 608.86L1258.96 611.43L1259.51 614.00L1260.09 616.56L1260.68 619.12L1261.31 621.66L1261.96 624.20L1262.63 626.73L1263.34 629.24L1264.07 631.75L1264.83 634.25L1265.63 636.74L1266.46 639.21L1267.32 641.67L1268.21 644.12L1269.14 646.56L1270.10 648.99L1271.10 651.40L1272.13 653.79L1273.19 656.18L1274.29 658.55L1275.42 660.90L1276.58 663.24L1277.77 665.56L1278.99 667.87L1280.24 670.16L1281.53 672.44L1282.84 674.70L1284.19 676.94L1285.56 679.16L1286.97 681.37L1288.40 683.56L1289.86 685.73L1291.35 687.88L1292.87 690.01L1294.42 692.13L1295.99 694.22L1297.59 696.29L1299.22 698.35L1300.88 700.38L1302.56 702.39L1304.26 704.38L1305.99 706.35L1307.75 708.29L1309.53 710.21L1311.34 712.11L1313.17 713.99L1315.02 715.85L1316.90 717.68L1318.80 719.48L1320.72 721.26L1322.66 723.02L1324.63 724.75L1326.62 726.46L1328.63 728.14L1330.67 729.79L1332.72 731.42L1334.79 733.02L1336.89 734.59L1339.00 736.14L1341.13 737.66L1343.28 739.15L1345.46 740.61L1347.64 742.04L1349.85 743.45L1352.08 744.82L1354.32 746.17L1356.58 747.48L1358.86 748.77L1361.15 750.02L1363.46 751.25L1365.79 752.45L1368.13 753.62L1370.48 754.75L1372.85 755.86L1375.23 756.94L1377.63 757.99L1380.04 759.01L1382.46 760.00L1384.90 760.96L1387.34 761.88L1389.80 762.78L1392.27 763.65L1394.75 764.49L1397.24 765.30L1399.75 766.07L1402.26 766.82L1404.78 767.54L1407.31 768.22L1409.84 768.88L1412.39 769.50L1414.94 770.09L1417.50 770.66L1420.07 771.19L1422.65 771.69L1425.23 772.16L1427.82 772.60L1430.41 773.01L1433.01 773.39L1435.61 773.73L1438.21 774.05L1440.82 774.33L1443.44 774.58L1446.05 774.81L1448.67 775.00L1451.30 775.15L1453.92 775.28L1456.55 775.38L1459.17 775.44L1461.80 775.47L1464.43 775.47L1467.06 775.44L1469.68 775.38L1472.31 775.28L1474.93 775.16L1477.56 775.00L1480.18 774.81L1482.80 774.58L1485.42 774.33L1488.03 774.04L1490.64 773.72L1493.25 773.37L1495.85 772.99L1498.45 772.57L1501.04 772.12L1503.63 771.64L1506.21 771.13L1508.79 770.58L1511.36 770.00L1513.92 769.39L1516.47 768.74L1519.02 768.07L1521.56 767.36L1524.09 766.61L1526.61 765.84L1529.12 765.03L1531.63 764.18L1534.12 763.31L1536.60 762.40" fill="none" stroke="#000" stroke-width="3.9"/></g><path d="M1327.90 898.80L1325.92 900.53L1323.95 902.30L1321.99 904.10L1320.04 905.93L1318.10 907.80L1316.18 909.70L1314.27 911.63L1312.37 913.60L1310.50 915.59L1308.64 917.62L1306.80 919.67L1304.98 921.76L1303.18 923.87L1301.40 926.01L1299.65 928.18L1297.93 930.37L1296.23 932.59L1294.55 934.84L1292.91 937.11L1291.30 939.41L1289.71 941.73L1288.16 944.08L1286.64 946.44L1285.16 948.83L1283.71 951.24L1282.30 953.68L1280.92 956.13L1279.59 958.60L1278.29 961.10L1277.04 963.61L1275.82 966.14L1274.66 968.69L1273.53 971.26L1272.45 973.84L1271.42 976.44L1270.44 979.05L1269.51 981.68L1268.63 984.32L1267.80 986.98L1267.02 989.65L1266.29 992.33L1265.63 995.03L1265.01 997.74L1264.44 1000.46L1263.93 1003.19L1263.47 1005.93L1263.05 1008.67L1262.68 1011.43L1262.36 1014.20L1262.08 1016.98L1261.84 1019.76L1261.64 1022.55L1261.49 1025.35L1261.37 1028.15L1261.29 1030.89L1261.25 1033.49L1261.24 1036.10L1261.27 1038.71L1261.33 1041.32L1261.42 1043.94L1261.54 1046.56L1261.69 1049.18L1261.86 1051.80L1262.07 1054.43L1262.29 1057.06L1262.54 1059.68L1262.82 1062.31L1263.11 1064.94L1263.43 1067.56L1263.76 1070.19L1264.11 1072.81L1264.47 1075.43L1264.85 1078.05L1265.24 1080.67L1265.65 1083.28L1266.07 1085.89L1266.51 1088.49L1266.96 1091.09L1267.43 1093.69L1267.92 1096.27L1268.43 1098.86L1268.96 1101.43L1269.51 1104.00L1270.09 1106.56L1270.68 1109.12L1271.31 1111.66L1271.96 1114.20L1272.63 1116.73L1273.34 1119.24L1274.07 1121.75L1274.83 1124.25L1275.63 1126.74L1276.46 1129.21L1277.32 1131.67L1278.21 1134.12L1279.14 1136.56L1280.10 1138.99L1281.10 1141.40L1282.13 1143.79L1283.19 1146.18L1284.29 1148.55L1285.42 1150.90L1286.58 1153.24L1287.77 1155.56L1288.99 1157.87L1290.24 1160.16L1291.53 1162.44L1292.84 1164.70L1294.19 1166.94L1295.56 1169.16L1296.97 1171.37L1298.40 1173.56L1299.86 1175.73L1301.35 1177.88L1302.87 1180.01L1304.42 1182.13L1305.99 1184.22L1307.59 1186.29L1309.22 1188.35L1310.88 1190.38L1312.56 1192.39L1314.26 1194.38L1315.99 1196.35L1317.75 1198.29L1319.53 1200.21L1321.34 1202.11L1323.17 1203.99L1325.02 1205.85L1326.90 1207.68L1328.80 1209.48L1330.72 1211.26L1332.66 1213.02L1334.63 1214.75L1336.62 1216.46L1338.63 1218.14L1340.67 1219.79L1342.72 1221.42L1344.79 1223.02L1346.89 1224.59L1349.00 1226.14L1351.13 1227.66L1353.28 1229.15L1355.46 1230.61L1357.64 1232.04L1359.85 1233.45L1362.08 1234.82L1364.32 1236.17L1366.58 1237.48L1368.86 1238.77L1371.15 1240.02L1373.46 1241.25L1375.79 1242.45L1378.13 1243.62L1380.48 1244.75L1382.85 1245.86L1385.23 1246.94L1387.63 1247.99L1390.04 1249.01L1392.46 1250.00L1394.90 1250.96L1397.34 1251.88L1399.80 1252.78L1402.27 1253.65L1404.75 1254.49L1407.24 1255.30L1409.75 1256.07L1412.26 1256.82L1414.78 1257.54L1417.31 1258.22L1419.84 1258.88L1422.39 1259.50L1424.94 1260.09L1427.50 1260.66L1430.07 1261.19L1432.65 1261.69L1435.23 1262.16L1437.82 1262.60L1440.41 1263.01L1443.01 1263.39L1445.61 1263.73L1448.21 1264.05L1450.82 1264.33L1453.44 1264.58L1456.05 1264.81L1458.67 1265.00L1461.30 1265.15L1463.92 1265.28L1466.55 1265.38L1469.17 1265.44L1471.80 1265.47L1474.43 1265.47L1477.06 1265.44L1479.68 1265.38L1482.31 1265.28L1484.93 1265.16L1487.56 1265.00L1490.18 1264.81L1492.80 1264.58L1495.42 1264.33L1498.03 1264.04L1500.64 1263.72L1503.25 1263.37L1505.85 1262.99L1508.45 1262.57L1511.04 1262.12L1513.63 1261.64L1516.21 1261.13L1518.79 1260.58L1521.36 1260.00L1523.92 1259.39L1526.47 1258.74L1529.02 1258.07L1531.56 1257.36L1534.09 1256.61L1536.61 1255.84L1539.12 1255.03L1541.63 1254.18L1544.12 1253.31L1546.60 1252.40L1546.00 1249.52L1545.36 1246.64L1544.68 1243.78L1543.97 1240.93L1543.22 1238.10L1542.43 1235.28L1541.60 1232.47L1540.74 1229.67L1539.84 1226.89L1538.90 1224.13L1537.93 1221.38L1536.92 1218.65L1535.87 1215.93L1534.79 1213.23L1533.68 1210.55L1532.53 1207.88L1531.34 1205.23L1530.12 1202.60L1528.86 1199.99L1527.57 1197.40L1526.25 1194.83L1524.89 1192.28L1523.50 1189.75L1522.08 1187.24L1520.62 1184.75L1519.13 1182.28L1517.61 1179.83L1516.05 1177.41L1514.46 1175.01L1512.84 1172.63L1511.19 1170.28L1509.50 1167.95L1507.79 1165.65L1506.04 1163.37L1504.26 1161.11L1502.46 1158.89L1500.62 1156.68L1498.75 1154.51L1496.85 1152.36L1494.92 1150.24L1492.96 1148.15L1490.97 1146.08L1488.96 1144.05L1486.91 1142.04L1484.83 1140.06L1482.73 1138.11L1480.60 1136.20L1478.44 1134.31L1476.25 1132.46L1474.03 1130.63L1471.79 1128.84L1469.52 1127.08L1467.22 1125.36L1464.90 1123.67L1462.55 1122.01L1460.17 1120.38L1457.77 1118.79L1455.34 1117.24L1452.89 1115.71L1450.41 1114.23L1447.91 1112.77L1445.39 1111.35L1442.85 1109.97L1440.28 1108.61L1437.70 1107.29L1435.10 1106.01L1432.48 1104.76L1429.84 1103.54L1427.18 1102.35L1424.51 1101.20L1421.82 1100.08L1419.12 1098.99L1416.40 1097.93L1413.67 1096.91L1410.93 1095.92L1408.17 1094.97L1405.41 1094.04L1402.63 1093.15L1399.84 1092.29L1397.05 1091.46L1394.25 1090.66L1391.44 1089.90L1388.62 1089.17L1385.80 1088.46L1382.97 1087.79L1380.13 1087.15L1377.30 1086.55L1374.45 1085.97L1371.61 1085.43L1368.76 1084.92L1365.90 1084.44L1363.05 1083.99L1360.18 1083.57L1357.32 1083.19L1354.46 1082.84L1351.59 1082.52L1348.72 1082.23L1345.84 1081.97L1342.97 1081.75L1340.09 1081.56L1337.22 1081.40L1334.34 1081.27L1331.46 1081.17L1328.59 1081.11L1325.71 1081.08L1322.83 1081.08L1319.95 1081.12L1317.08 1081.19L1314.20 1081.28L1311.32 1081.41L1308.45 1081.57L1305.58 1081.77L1302.71 1081.99L1299.84 1082.24L1296.97 1082.52L1294.10 1082.83L1291.24 1083.17L1288.38 1083.54L1285.52 1083.94L1282.66 1084.37L1279.81 1084.82L1276.96 1085.30L1274.11 1085.81L1271.27 1086.35L1268.43 1086.91L1265.59 1087.49L1262.76 1088.11L1259.93 1088.75L1257.10 1089.41L1254.28 1090.10L1251.46 1090.82L1248.65 1091.55L1245.84 1092.32L1243.04 1093.11L1240.25 1093.92L1237.46 1094.76L1234.68 1095.62L1231.91 1096.52L1229.15 1097.43L1226.39 1098.38L1223.65 1099.35L1220.91 1100.34L1218.19 1101.37L1215.48 1102.42L1212.78 1103.50L1210.09 1104.60L1207.41 1105.74L1204.75 1106.90L1202.10 1108.09L1199.47 1109.31L1196.85 1110.56L1194.24 1111.83L1191.66 1113.14L1189.08 1114.47L1186.53 1115.83L1183.99 1117.23L1181.47 1118.65L1178.97 1120.11L1176.49 1121.59L1174.03 1123.10L1171.58 1124.65L1169.16 1126.22L1166.76 1127.83L1164.38 1129.47L1162.03 1131.14L1159.69 1132.83L1157.38 1134.56L1155.09 1136.32L1152.83 1138.11L1150.59 1139.92L1148.37 1141.76L1146.18 1143.64L1144.01 1145.54L1141.87 1147.47L1139.76 1149.42L1137.67 1151.41L1135.61 1153.42L1133.57 1155.46L1131.57 1157.52L1129.59 1159.61L1127.64 1161.73L1125.72 1163.87L1123.83 1166.04L1121.96 1168.23L1120.13 1170.45L1118.33 1172.69L1116.56 1174.96L1114.82 1177.25L1113.12 1179.57L1111.44 1181.91L1109.80 1184.27L1108.19 1186.65L1106.62 1189.06L1105.08 1191.49L1103.57 1193.95L1102.10 1196.42L1100.66 1198.92L1099.26 1201.44L1097.90 1203.98L1096.57 1206.54L1095.28 1209.12L1094.02 1211.72L1092.81 1214.34L1091.63 1216.98L1090.49 1219.64L1089.39 1222.32L1088.33 1225.02L1087.30 1227.74L1086.32 1230.48L1085.38 1233.23L1084.48 1236.00L1083.62 1238.79L1082.80 1241.60L1082.03 1244.43L1081.30 1247.27L1080.61 1250.13L1079.96 1253.00L1079.36 1255.89L1078.80 1258.80L1081.42 1259.78L1084.05 1260.71L1086.69 1261.61L1089.33 1262.47L1091.97 1263.30L1094.62 1264.08L1097.27 1264.83L1099.92 1265.54L1102.57 1266.21L1105.23 1266.84L1107.89 1267.44L1110.56 1268.00L1113.22 1268.52L1115.89 1269.00L1118.56 1269.45L1121.23 1269.87L1123.90 1270.24L1126.57 1270.58L1129.24 1270.89L1131.91 1271.16L1134.58 1271.39L1137.25 1271.59L1139.92 1271.76L1142.59 1271.89L1145.26 1271.98L1147.92 1272.04L1150.59 1272.07L1153.25 1272.06L1155.91 1272.02L1158.57 1271.94L1161.22 1271.83L1163.87 1271.69L1166.52 1271.52L1169.17 1271.31L1171.81 1271.07L1174.44 1270.79L1177.08 1270.49L1179.70 1270.15L1182.33 1269.78L1184.94 1269.38L1187.56 1268.94L1190.16 1268.48L1192.76 1267.98L1195.36 1267.46L1197.95 1266.90L1200.53 1266.31L1203.10 1265.69L1205.67 1265.04L1208.23 1264.36L1210.78 1263.65L1213.33 1262.91L1215.86 1262.15L1218.39 1261.35L1220.91 1260.52L1223.42 1259.66L1225.92 1258.78L1228.41 1257.87L1230.89 1256.92L1233.36 1255.95L1235.82 1254.96L1238.27 1253.93L1240.71 1252.88L1243.14 1251.80L1245.56 1250.69L1247.96 1249.55L1250.35 1248.39L1252.73 1247.20L1255.10 1245.99L1257.46 1244.75L1259.80 1243.48L1262.13 1242.18L1264.45 1240.86L1266.75 1239.52L1269.04 1238.15L1271.31 1236.75L1273.57 1235.33L1275.82 1233.89L1278.04 1232.42L1280.26 1230.92L1282.46 1229.40L1284.64 1227.86L1286.81 1226.29L1288.96 1224.70L1291.09 1223.09L1293.21 1221.45L1295.31 1219.79L1297.39 1218.11L1299.46 1216.40L1301.51 1214.67L1303.53 1212.92L1305.55 1211.15L1307.54 1209.35L1309.51 1207.53L1311.46 1205.69L1313.40 1203.83L1315.31 1201.95L1317.21 1200.05L1319.08 1198.13L1320.94 1196.18L1322.77 1194.22L1324.58 1192.23L1326.37 1190.23L1328.14 1188.20L1329.89 1186.16L1331.62 1184.09L1333.32 1182.01L1335.00 1179.91L1336.66 1177.78L1338.29 1175.64L1339.90 1173.48L1341.49 1171.31L1343.05 1169.11L1344.59 1166.90L1346.11 1164.66L1347.60 1162.41L1349.06 1160.15L1350.51 1157.86L1351.92 1155.56L1353.31 1153.24L1354.67 1150.91L1356.01 1148.56L1357.32 1146.19L1358.60 1143.80L1359.86 1141.40L1361.09 1138.99L1362.29 1136.56L1363.47 1134.12L1364.62 1131.66L1365.74 1129.19L1366.83 1126.70L1367.89 1124.21L1368.93 1121.70L1369.93 1119.18L1370.91 1116.65L1371.86 1114.10L1372.78 1111.55L1373.67 1108.99L1374.53 1106.42L1375.36 1103.84L1376.16 1101.25L1376.93 1098.65L1377.67 1096.05L1378.37 1093.44L1379.05 1090.82L1379.70 1088.19L1380.32 1085.56L1380.90 1082.93L1381.45 1080.29L1381.97 1077.64L1382.46 1074.99L1382.92 1072.34L1383.35 1069.68L1383.74 1067.02L1384.10 1064.36L1384.43 1061.70L1384.72 1059.04L1384.98 1056.37L1385.21 1053.70L1385.40 1051.04L1385.56 1048.37L1385.68 1045.71L1385.78 1043.04L1385.83 1040.38L1385.85 1037.72L1385.84 1035.06L1385.79 1032.41L1385.71 1029.74L1385.59 1026.87L1385.44 1024.01L1385.25 1021.16L1385.02 1018.31L1384.76 1015.46L1384.46 1012.63L1384.12 1009.80L1383.75 1006.97L1383.34 1004.16L1382.90 1001.35L1382.41 998.56L1381.89 995.77L1381.33 992.99L1380.73 990.22L1380.10 987.47L1379.43 984.72L1378.71 981.99L1377.96 979.27L1377.17 976.56L1376.34 973.87L1375.48 971.20L1374.57 968.53L1373.62 965.89L1372.63 963.26L1371.60 960.64L1370.53 958.05L1369.43 955.47L1368.28 952.92L1367.09 950.38L1365.85 947.86L1364.58 945.36L1363.26 942.89L1361.91 940.43L1360.51 938.00L1359.07 935.59L1357.58 933.21L1356.06 930.85L1354.49 928.51L1352.87 926.20L1351.22 923.92L1349.52 921.66L1347.78 919.44L1345.99 917.24L1344.16 915.06L1342.28 912.92L1340.36 910.81L1338.40 908.73L1336.39 906.68L1334.34 904.66L1332.24 902.67L1330.09 900.72L1327.90 898.80Z" fill="none" stroke="#000" stroke-width="3.9" stroke-linejoin="miter" stroke-miterlimit="20"/><clipPath id="cpa10_490"><circle cx="1268.5" cy="1087.5" r="17"/></clipPath><g clip-path="url(#cpa10_490)"><path d="M1546.60 1252.40L1546.00 1249.52L1545.36 1246.64L1544.68 1243.78L1543.97 1240.93L1543.22 1238.10L1542.43 1235.28L1541.60 1232.47L1540.74 1229.67L1539.84 1226.89L1538.90 1224.13L1537.93 1221.38L1536.92 1218.65L1535.87 1215.93L1534.79 1213.23L1533.68 1210.55L1532.53 1207.88L1531.34 1205.23L1530.12 1202.60L1528.86 1199.99L1527.57 1197.40L1526.25 1194.83L1524.89 1192.28L1523.50 1189.75L1522.08 1187.24L1520.62 1184.75L1519.13 1182.28L1517.61 1179.83L1516.05 1177.41L1514.46 1175.01L1512.84 1172.63L1511.19 1170.28L1509.50 1167.95L1507.79 1165.65L1506.04 1163.37L1504.26 1161.11L1502.46 1158.89L1500.62 1156.68L1498.75 1154.51L1496.85 1152.36L1494.92 1150.24L1492.96 1148.15L1490.97 1146.08L1488.96 1144.05L1486.91 1142.04L1484.83 1140.06L1482.73 1138.11L1480.60 1136.20L1478.44 1134.31L1476.25 1132.46L1474.03 1130.63L1471.79 1128.84L1469.52 1127.08L1467.22 1125.36L1464.90 1123.67L1462.55 1122.01L1460.17 1120.38L1457.77 1118.79L1455.34 1117.24L1452.89 1115.71L1450.41 1114.23L1447.91 1112.77L1445.39 1111.35L1442.85 1109.97L1440.28 1108.61L1437.70 1107.29L1435.10 1106.01L1432.48 1104.76L1429.84 1103.54L1427.18 1102.35L1424.51 1101.20L1421.82 1100.08L1419.12 1098.99L1416.40 1097.93L1413.67 1096.91L1410.93 1095.92L1408.17 1094.97L1405.41 1094.04L1402.63 1093.15L1399.84 1092.29L1397.05 1091.46L1394.25 1090.66L1391.44 1089.90L1388.62 1089.17L1385.80 1088.46L1382.97 1087.79L1380.13 1087.15L1377.30 1086.55L1374.45 1085.97L1371.61 1085.43L1368.76 1084.92L1365.90 1084.44L1363.05 1083.99L1360.18 1083.57L1357.32 1083.19L1354.46 1082.84L1351.59 1082.52L1348.72 1082.23L1345.84 1081.97L1342.97 1081.75L1340.09 1081.56L1337.22 1081.40L1334.34 1081.27L1331.46 1081.17L1328.59 1081.11L1325.71 1081.08L1322.83 1081.08L1319.95 1081.12L1317.08 1081.19L1314.20 1081.28L1311.32 1081.41L1308.45 1081.57L1305.58 1081.77L1302.71 1081.99L1299.84 1082.24L1296.97 1082.52L1294.10 1082.83L1291.24 1083.17L1288.38 1083.54L1285.52 1083.94L1282.66 1084.37L1279.81 1084.82L1276.96 1085.30L1274.11 1085.81L1271.27 1086.35L1268.43 1086.91L1265.59 1087.49L1262.76 1088.11L1259.93 1088.75L1257.10 1089.41L1254.28 1090.10L1251.46 1090.82L1248.65 1091.55L1245.84 1092.32L1243.04 1093.11L1240.25 1093.92L1237.46 1094.76L1234.68 1095.62L1231.91 1096.52L1229.15 1097.43L1226.39 1098.38L1223.65 1099.35L1220.91 1100.34L1218.19 1101.37L1215.48 1102.42L1212.78 1103.50L1210.09 1104.60L1207.41 1105.74L1204.75 1106.90L1202.10 1108.09L1199.47 1109.31L1196.85 1110.56L1194.24 1111.83L1191.66 1113.14L1189.08 1114.47L1186.53 1115.83L1183.99 1117.23L1181.47 1118.65L1178.97 1120.11L1176.49 1121.59L1174.03 1123.10L1171.58 1124.65L1169.16 1126.22L1166.76 1127.83L1164.38 1129.47L1162.03 1131.14L1159.69 1132.83L1157.38 1134.56L1155.09 1136.32L1152.83 1138.11L1150.59 1139.92L1148.37 1141.76L1146.18 1143.64L1144.01 1145.54L1141.87 1147.47L1139.76 1149.42L1137.67 1151.41L1135.61 1153.42L1133.57 1155.46L1131.57 1157.52L1129.59 1159.61L1127.64 1161.73L1125.72 1163.87L1123.83 1166.04L1121.96 1168.23L1120.13 1170.45L1118.33 1172.69L1116.56 1174.96L1114.82 1177.25L1113.12 1179.57L1111.44 1181.91L1109.80 1184.27L1108.19 1186.65L1106.62 1189.06L1105.08 1191.49L1103.57 1193.95L1102.10 1196.42L1100.66 1198.92L1099.26 1201.44L1097.90 1203.98L1096.57 1206.54L1095.28 1209.12L1094.02 1211.72L1092.81 1214.34L1091.63 1216.98L1090.49 1219.64L1089.39 1222.32L1088.33 1225.02L1087.30 1227.74L1086.32 1230.48L1085.38 1233.23L1084.48 1236.00L1083.62 1238.79L1082.80 1241.60L1082.03 1244.43L1081.30 1247.27L1080.61 1250.13L1079.96 1253.00L1079.36 1255.89L1078.80 1258.80" fill="none" stroke="#fff" stroke-width="16"/><path d="M1546.60 1252.40L1546.00 1249.52L1545.36 1246.64L1544.68 1243.78L1543.97 1240.93L1543.22 1238.10L1542.43 1235.28L1541.60 1232.47L1540.74 1229.67L1539.84 1226.89L1538.90 1224.13L1537.93 1221.38L1536.92 1218.65L1535.87 1215.93L1534.79 1213.23L1533.68 1210.55L1532.53 1207.88L1531.34 1205.23L1530.12 1202.60L1528.86 1199.99L1527.57 1197.40L1526.25 1194.83L1524.89 1192.28L1523.50 1189.75L1522.08 1187.24L1520.62 1184.75L1519.13 1182.28L1517.61 1179.83L1516.05 1177.41L1514.46 1175.01L1512.84 1172.63L1511.19 1170.28L1509.50 1167.95L1507.79 1165.65L1506.04 1163.37L1504.26 1161.11L1502.46 1158.89L1500.62 1156.68L1498.75 1154.51L1496.85 1152.36L1494.92 1150.24L1492.96 1148.15L1490.97 1146.08L1488.96 1144.05L1486.91 1142.04L1484.83 1140.06L1482.73 1138.11L1480.60 1136.20L1478.44 1134.31L1476.25 1132.46L1474.03 1130.63L1471.79 1128.84L1469.52 1127.08L1467.22 1125.36L1464.90 1123.67L1462.55 1122.01L1460.17 1120.38L1457.77 1118.79L1455.34 1117.24L1452.89 1115.71L1450.41 1114.23L1447.91 1112.77L1445.39 1111.35L1442.85 1109.97L1440.28 1108.61L1437.70 1107.29L1435.10 1106.01L1432.48 1104.76L1429.84 1103.54L1427.18 1102.35L1424.51 1101.20L1421.82 1100.08L1419.12 1098.99L1416.40 1097.93L1413.67 1096.91L1410.93 1095.92L1408.17 1094.97L1405.41 1094.04L1402.63 1093.15L1399.84 1092.29L1397.05 1091.46L1394.25 1090.66L1391.44 1089.90L1388.62 1089.17L1385.80 1088.46L1382.97 1087.79L1380.13 1087.15L1377.30 1086.55L1374.45 1085.97L1371.61 1085.43L1368.76 1084.92L1365.90 1084.44L1363.05 1083.99L1360.18 1083.57L1357.32 1083.19L1354.46 1082.84L1351.59 1082.52L1348.72 1082.23L1345.84 1081.97L1342.97 1081.75L1340.09 1081.56L1337.22 1081.40L1334.34 1081.27L1331.46 1081.17L1328.59 1081.11L1325.71 1081.08L1322.83 1081.08L1319.95 1081.12L1317.08 1081.19L1314.20 1081.28L1311.32 1081.41L1308.45 1081.57L1305.58 1081.77L1302.71 1081.99L1299.84 1082.24L1296.97 1082.52L1294.10 1082.83L1291.24 1083.17L1288.38 1083.54L1285.52 1083.94L1282.66 1084.37L1279.81 1084.82L1276.96 1085.30L1274.11 1085.81L1271.27 1086.35L1268.43 1086.91L1265.59 1087.49L1262.76 1088.11L1259.93 1088.75L1257.10 1089.41L1254.28 1090.10L1251.46 1090.82L1248.65 1091.55L1245.84 1092.32L1243.04 1093.11L1240.25 1093.92L1237.46 1094.76L1234.68 1095.62L1231.91 1096.52L1229.15 1097.43L1226.39 1098.38L1223.65 1099.35L1220.91 1100.34L1218.19 1101.37L1215.48 1102.42L1212.78 1103.50L1210.09 1104.60L1207.41 1105.74L1204.75 1106.90L1202.10 1108.09L1199.47 1109.31L1196.85 1110.56L1194.24 1111.83L1191.66 1113.14L1189.08 1114.47L1186.53 1115.83L1183.99 1117.23L1181.47 1118.65L1178.97 1120.11L1176.49 1121.59L1174.03 1123.10L1171.58 1124.65L1169.16 1126.22L1166.76 1127.83L1164.38 1129.47L1162.03 1131.14L1159.69 1132.83L1157.38 1134.56L1155.09 1136.32L1152.83 1138.11L1150.59 1139.92L1148.37 1141.76L1146.18 1143.64L1144.01 1145.54L1141.87 1147.47L1139.76 1149.42L1137.67 1151.41L1135.61 1153.42L1133.57 1155.46L1131.57 1157.52L1129.59 1159.61L1127.64 1161.73L1125.72 1163.87L1123.83 1166.04L1121.96 1168.23L1120.13 1170.45L1118.33 1172.69L1116.56 1174.96L1114.82 1177.25L1113.12 1179.57L1111.44 1181.91L1109.80 1184.27L1108.19 1186.65L1106.62 1189.06L1105.08 1191.49L1103.57 1193.95L1102.10 1196.42L1100.66 1198.92L1099.26 1201.44L1097.90 1203.98L1096.57 1206.54L1095.28 1209.12L1094.02 1211.72L1092.81 1214.34L1091.63 1216.98L1090.49 1219.64L1089.39 1222.32L1088.33 1225.02L1087.30 1227.74L1086.32 1230.48L1085.38 1233.23L1084.48 1236.00L1083.62 1238.79L1082.80 1241.60L1082.03 1244.43L1081.30 1247.27L1080.61 1250.13L1079.96 1253.00L1079.36 1255.89L1078.80 1258.80" fill="none" stroke="#000" stroke-width="3.9"/></g><clipPath id="cpb10_490"><circle cx="1377.5" cy="1087.5" r="17"/></clipPath><g clip-path="url(#cpb10_490)"><path d="M1078.80 1258.80L1081.42 1259.78L1084.05 1260.71L1086.69 1261.61L1089.33 1262.47L1091.97 1263.30L1094.62 1264.08L1097.27 1264.83L1099.92 1265.54L1102.57 1266.21L1105.23 1266.84L1107.89 1267.44L1110.56 1268.00L1113.22 1268.52L1115.89 1269.00L1118.56 1269.45L1121.23 1269.87L1123.90 1270.24L1126.57 1270.58L1129.24 1270.89L1131.91 1271.16L1134.58 1271.39L1137.25 1271.59L1139.92 1271.76L1142.59 1271.89L1145.26 1271.98L1147.92 1272.04L1150.59 1272.07L1153.25 1272.06L1155.91 1272.02L1158.57 1271.94L1161.22 1271.83L1163.87 1271.69L1166.52 1271.52L1169.17 1271.31L1171.81 1271.07L1174.44 1270.79L1177.08 1270.49L1179.70 1270.15L1182.33 1269.78L1184.94 1269.38L1187.56 1268.94L1190.16 1268.48L1192.76 1267.98L1195.36 1267.46L1197.95 1266.90L1200.53 1266.31L1203.10 1265.69L1205.67 1265.04L1208.23 1264.36L1210.78 1263.65L1213.33 1262.91L1215.86 1262.15L1218.39 1261.35L1220.91 1260.52L1223.42 1259.66L1225.92 1258.78L1228.41 1257.87L1230.89 1256.92L1233.36 1255.95L1235.82 1254.96L1238.27 1253.93L1240.71 1252.88L1243.14 1251.80L1245.56 1250.69L1247.96 1249.55L1250.35 1248.39L1252.73 1247.20L1255.10 1245.99L1257.46 1244.75L1259.80 1243.48L1262.13 1242.18L1264.45 1240.86L1266.75 1239.52L1269.04 1238.15L1271.31 1236.75L1273.57 1235.33L1275.82 1233.89L1278.04 1232.42L1280.26 1230.92L1282.46 1229.40L1284.64 1227.86L1286.81 1226.29L1288.96 1224.70L1291.09 1223.09L1293.21 1221.45L1295.31 1219.79L1297.39 1218.11L1299.46 1216.40L1301.51 1214.67L1303.53 1212.92L1305.55 1211.15L1307.54 1209.35L1309.51 1207.53L1311.46 1205.69L1313.40 1203.83L1315.31 1201.95L1317.21 1200.05L1319.08 1198.13L1320.94 1196.18L1322.77 1194.22L1324.58 1192.23L1326.37 1190.23L1328.14 1188.20L1329.89 1186.16L1331.62 1184.09L1333.32 1182.01L1335.00 1179.91L1336.66 1177.78L1338.29 1175.64L1339.90 1173.48L1341.49 1171.31L1343.05 1169.11L1344.59 1166.90L1346.11 1164.66L1347.60 1162.41L1349.06 1160.15L1350.51 1157.86L1351.92 1155.56L1353.31 1153.24L1354.67 1150.91L1356.01 1148.56L1357.32 1146.19L1358.60 1143.80L1359.86 1141.40L1361.09 1138.99L1362.29 1136.56L1363.47 1134.12L1364.62 1131.66L1365.74 1129.19L1366.83 1126.70L1367.89 1124.21L1368.93 1121.70L1369.93 1119.18L1370.91 1116.65L1371.86 1114.10L1372.78 1111.55L1373.67 1108.99L1374.53 1106.42L1375.36 1103.84L1376.16 1101.25L1376.93 1098.65L1377.67 1096.05L1378.37 1093.44L1379.05 1090.82L1379.70 1088.19L1380.32 1085.56L1380.90 1082.93L1381.45 1080.29L1381.97 1077.64L1382.46 1074.99L1382.92 1072.34L1383.35 1069.68L1383.74 1067.02L1384.10 1064.36L1384.43 1061.70L1384.72 1059.04L1384.98 1056.37L1385.21 1053.70L1385.40 1051.04L1385.56 1048.37L1385.68 1045.71L1385.78 1043.04L1385.83 1040.38L1385.85 1037.72L1385.84 1035.06L1385.79 1032.41L1385.71 1029.74L1385.59 1026.87L1385.44 1024.01L1385.25 1021.16L1385.02 1018.31L1384.76 1015.46L1384.46 1012.63L1384.12 1009.80L1383.75 1006.97L1383.34 1004.16L1382.90 1001.35L1382.41 998.56L1381.89 995.77L1381.33 992.99L1380.73 990.22L1380.10 987.47L1379.43 984.72L1378.71 981.99L1377.96 979.27L1377.17 976.56L1376.34 973.87L1375.48 971.20L1374.57 968.53L1373.62 965.89L1372.63 963.26L1371.60 960.64L1370.53 958.05L1369.43 955.47L1368.28 952.92L1367.09 950.38L1365.85 947.86L1364.58 945.36L1363.26 942.89L1361.91 940.43L1360.51 938.00L1359.07 935.59L1357.58 933.21L1356.06 930.85L1354.49 928.51L1352.87 926.20L1351.22 923.92L1349.52 921.66L1347.78 919.44L1345.99 917.24L1344.16 915.06L1342.28 912.92L1340.36 910.81L1338.40 908.73L1336.39 906.68L1334.34 904.66L1332.24 902.67L1330.09 900.72L1327.90 898.80" fill="none" stroke="#fff" stroke-width="16"/><path d="M1078.80 1258.80L1081.42 1259.78L1084.05 1260.71L1086.69 1261.61L1089.33 1262.47L1091.97 1263.30L1094.62 1264.08L1097.27 1264.83L1099.92 1265.54L1102.57 1266.21L1105.23 1266.84L1107.89 1267.44L1110.56 1268.00L1113.22 1268.52L1115.89 1269.00L1118.56 1269.45L1121.23 1269.87L1123.90 1270.24L1126.57 1270.58L1129.24 1270.89L1131.91 1271.16L1134.58 1271.39L1137.25 1271.59L1139.92 1271.76L1142.59 1271.89L1145.26 1271.98L1147.92 1272.04L1150.59 1272.07L1153.25 1272.06L1155.91 1272.02L1158.57 1271.94L1161.22 1271.83L1163.87 1271.69L1166.52 1271.52L1169.17 1271.31L1171.81 1271.07L1174.44 1270.79L1177.08 1270.49L1179.70 1270.15L1182.33 1269.78L1184.94 1269.38L1187.56 1268.94L1190.16 1268.48L1192.76 1267.98L1195.36 1267.46L1197.95 1266.90L1200.53 1266.31L1203.10 1265.69L1205.67 1265.04L1208.23 1264.36L1210.78 1263.65L1213.33 1262.91L1215.86 1262.15L1218.39 1261.35L1220.91 1260.52L1223.42 1259.66L1225.92 1258.78L1228.41 1257.87L1230.89 1256.92L1233.36 1255.95L1235.82 1254.96L1238.27 1253.93L1240.71 1252.88L1243.14 1251.80L1245.56 1250.69L1247.96 1249.55L1250.35 1248.39L1252.73 1247.20L1255.10 1245.99L1257.46 1244.75L1259.80 1243.48L1262.13 1242.18L1264.45 1240.86L1266.75 1239.52L1269.04 1238.15L1271.31 1236.75L1273.57 1235.33L1275.82 1233.89L1278.04 1232.42L1280.26 1230.92L1282.46 1229.40L1284.64 1227.86L1286.81 1226.29L1288.96 1224.70L1291.09 1223.09L1293.21 1221.45L1295.31 1219.79L1297.39 1218.11L1299.46 1216.40L1301.51 1214.67L1303.53 1212.92L1305.55 1211.15L1307.54 1209.35L1309.51 1207.53L1311.46 1205.69L1313.40 1203.83L1315.31 1201.95L1317.21 1200.05L1319.08 1198.13L1320.94 1196.18L1322.77 1194.22L1324.58 1192.23L1326.37 1190.23L1328.14 1188.20L1329.89 1186.16L1331.62 1184.09L1333.32 1182.01L1335.00 1179.91L1336.66 1177.78L1338.29 1175.64L1339.90 1173.48L1341.49 1171.31L1343.05 1169.11L1344.59 1166.90L1346.11 1164.66L1347.60 1162.41L1349.06 1160.15L1350.51 1157.86L1351.92 1155.56L1353.31 1153.24L1354.67 1150.91L1356.01 1148.56L1357.32 1146.19L1358.60 1143.80L1359.86 1141.40L1361.09 1138.99L1362.29 1136.56L1363.47 1134.12L1364.62 1131.66L1365.74 1129.19L1366.83 1126.70L1367.89 1124.21L1368.93 1121.70L1369.93 1119.18L1370.91 1116.65L1371.86 1114.10L1372.78 1111.55L1373.67 1108.99L1374.53 1106.42L1375.36 1103.84L1376.16 1101.25L1376.93 1098.65L1377.67 1096.05L1378.37 1093.44L1379.05 1090.82L1379.70 1088.19L1380.32 1085.56L1380.90 1082.93L1381.45 1080.29L1381.97 1077.64L1382.46 1074.99L1382.92 1072.34L1383.35 1069.68L1383.74 1067.02L1384.10 1064.36L1384.43 1061.70L1384.72 1059.04L1384.98 1056.37L1385.21 1053.70L1385.40 1051.04L1385.56 1048.37L1385.68 1045.71L1385.78 1043.04L1385.83 1040.38L1385.85 1037.72L1385.84 1035.06L1385.79 1032.41L1385.71 1029.74L1385.59 1026.87L1385.44 1024.01L1385.25 1021.16L1385.02 1018.31L1384.76 1015.46L1384.46 1012.63L1384.12 1009.80L1383.75 1006.97L1383.34 1004.16L1382.90 1001.35L1382.41 998.56L1381.89 995.77L1381.33 992.99L1380.73 990.22L1380.10 987.47L1379.43 984.72L1378.71 981.99L1377.96 979.27L1377.17 976.56L1376.34 973.87L1375.48 971.20L1374.57 968.53L1373.62 965.89L1372.63 963.26L1371.60 960.64L1370.53 958.05L1369.43 955.47L1368.28 952.92L1367.09 950.38L1365.85 947.86L1364.58 945.36L1363.26 942.89L1361.91 940.43L1360.51 938.00L1359.07 935.59L1357.58 933.21L1356.06 930.85L1354.49 928.51L1352.87 926.20L1351.22 923.92L1349.52 921.66L1347.78 919.44L1345.99 917.24L1344.16 915.06L1342.28 912.92L1340.36 910.81L1338.40 908.73L1336.39 906.68L1334.34 904.66L1332.24 902.67L1330.09 900.72L1327.90 898.80" fill="none" stroke="#000" stroke-width="3.9"/></g><clipPath id="cpc10_490"><circle cx="1318.5" cy="1198.0" r="17"/></clipPath><g clip-path="url(#cpc10_490)"><path d="M1327.90 898.80L1325.92 900.53L1323.95 902.30L1321.99 904.10L1320.04 905.93L1318.10 907.80L1316.18 909.70L1314.27 911.63L1312.37 913.60L1310.50 915.59L1308.64 917.62L1306.80 919.67L1304.98 921.76L1303.18 923.87L1301.40 926.01L1299.65 928.18L1297.93 930.37L1296.23 932.59L1294.55 934.84L1292.91 937.11L1291.30 939.41L1289.71 941.73L1288.16 944.08L1286.64 946.44L1285.16 948.83L1283.71 951.24L1282.30 953.68L1280.92 956.13L1279.59 958.60L1278.29 961.10L1277.04 963.61L1275.82 966.14L1274.66 968.69L1273.53 971.26L1272.45 973.84L1271.42 976.44L1270.44 979.05L1269.51 981.68L1268.63 984.32L1267.80 986.98L1267.02 989.65L1266.29 992.33L1265.63 995.03L1265.01 997.74L1264.44 1000.46L1263.93 1003.19L1263.47 1005.93L1263.05 1008.67L1262.68 1011.43L1262.36 1014.20L1262.08 1016.98L1261.84 1019.76L1261.64 1022.55L1261.49 1025.35L1261.37 1028.15L1261.29 1030.89L1261.25 1033.49L1261.24 1036.10L1261.27 1038.71L1261.33 1041.32L1261.42 1043.94L1261.54 1046.56L1261.69 1049.18L1261.86 1051.80L1262.07 1054.43L1262.29 1057.06L1262.54 1059.68L1262.82 1062.31L1263.11 1064.94L1263.43 1067.56L1263.76 1070.19L1264.11 1072.81L1264.47 1075.43L1264.85 1078.05L1265.24 1080.67L1265.65 1083.28L1266.07 1085.89L1266.51 1088.49L1266.96 1091.09L1267.43 1093.69L1267.92 1096.27L1268.43 1098.86L1268.96 1101.43L1269.51 1104.00L1270.09 1106.56L1270.68 1109.12L1271.31 1111.66L1271.96 1114.20L1272.63 1116.73L1273.34 1119.24L1274.07 1121.75L1274.83 1124.25L1275.63 1126.74L1276.46 1129.21L1277.32 1131.67L1278.21 1134.12L1279.14 1136.56L1280.10 1138.99L1281.10 1141.40L1282.13 1143.79L1283.19 1146.18L1284.29 1148.55L1285.42 1150.90L1286.58 1153.24L1287.77 1155.56L1288.99 1157.87L1290.24 1160.16L1291.53 1162.44L1292.84 1164.70L1294.19 1166.94L1295.56 1169.16L1296.97 1171.37L1298.40 1173.56L1299.86 1175.73L1301.35 1177.88L1302.87 1180.01L1304.42 1182.13L1305.99 1184.22L1307.59 1186.29L1309.22 1188.35L1310.88 1190.38L1312.56 1192.39L1314.26 1194.38L1315.99 1196.35L1317.75 1198.29L1319.53 1200.21L1321.34 1202.11L1323.17 1203.99L1325.02 1205.85L1326.90 1207.68L1328.80 1209.48L1330.72 1211.26L1332.66 1213.02L1334.63 1214.75L1336.62 1216.46L1338.63 1218.14L1340.67 1219.79L1342.72 1221.42L1344.79 1223.02L1346.89 1224.59L1349.00 1226.14L1351.13 1227.66L1353.28 1229.15L1355.46 1230.61L1357.64 1232.04L1359.85 1233.45L1362.08 1234.82L1364.32 1236.17L1366.58 1237.48L1368.86 1238.77L1371.15 1240.02L1373.46 1241.25L1375.79 1242.45L1378.13 1243.62L1380.48 1244.75L1382.85 1245.86L1385.23 1246.94L1387.63 1247.99L1390.04 1249.01L1392.46 1250.00L1394.90 1250.96L1397.34 1251.88L1399.80 1252.78L1402.27 1253.65L1404.75 1254.49L1407.24 1255.30L1409.75 1256.07L1412.26 1256.82L1414.78 1257.54L1417.31 1258.22L1419.84 1258.88L1422.39 1259.50L1424.94 1260.09L1427.50 1260.66L1430.07 1261.19L1432.65 1261.69L1435.23 1262.16L1437.82 1262.60L1440.41 1263.01L1443.01 1263.39L1445.61 1263.73L1448.21 1264.05L1450.82 1264.33L1453.44 1264.58L1456.05 1264.81L1458.67 1265.00L1461.30 1265.15L1463.92 1265.28L1466.55 1265.38L1469.17 1265.44L1471.80 1265.47L1474.43 1265.47L1477.06 1265.44L1479.68 1265.38L1482.31 1265.28L1484.93 1265.16L1487.56 1265.00L1490.18 1264.81L1492.80 1264.58L1495.42 1264.33L1498.03 1264.04L1500.64 1263.72L1503.25 1263.37L1505.85 1262.99L1508.45 1262.57L1511.04 1262.12L1513.63 1261.64L1516.21 1261.13L1518.79 1260.58L1521.36 1260.00L1523.92 1259.39L1526.47 1258.74L1529.02 1258.07L1531.56 1257.36L1534.09 1256.61L1536.61 1255.84L1539.12 1255.03L1541.63 1254.18L1544.12 1253.31L1546.60 1252.40" fill="none" stroke="#fff" stroke-width="16"/><path d="M1327.90 898.80L1325.92 900.53L1323.95 902.30L1321.99 904.10L1320.04 905.93L1318.10 907.80L1316.18 909.70L1314.27 911.63L1312.37 913.60L1310.50 915.59L1308.64 917.62L1306.80 919.67L1304.98 921.76L1303.18 923.87L1301.40 926.01L1299.65 928.18L1297.93 930.37L1296.23 932.59L1294.55 934.84L1292.91 937.11L1291.30 939.41L1289.71 941.73L1288.16 944.08L1286.64 946.44L1285.16 948.83L1283.71 951.24L1282.30 953.68L1280.92 956.13L1279.59 958.60L1278.29 961.10L1277.04 963.61L1275.82 966.14L1274.66 968.69L1273.53 971.26L1272.45 973.84L1271.42 976.44L1270.44 979.05L1269.51 981.68L1268.63 984.32L1267.80 986.98L1267.02 989.65L1266.29 992.33L1265.63 995.03L1265.01 997.74L1264.44 1000.46L1263.93 1003.19L1263.47 1005.93L1263.05 1008.67L1262.68 1011.43L1262.36 1014.20L1262.08 1016.98L1261.84 1019.76L1261.64 1022.55L1261.49 1025.35L1261.37 1028.15L1261.29 1030.89L1261.25 1033.49L1261.24 1036.10L1261.27 1038.71L1261.33 1041.32L1261.42 1043.94L1261.54 1046.56L1261.69 1049.18L1261.86 1051.80L1262.07 1054.43L1262.29 1057.06L1262.54 1059.68L1262.82 1062.31L1263.11 1064.94L1263.43 1067.56L1263.76 1070.19L1264.11 1072.81L1264.47 1075.43L1264.85 1078.05L1265.24 1080.67L1265.65 1083.28L1266.07 1085.89L1266.51 1088.49L1266.96 1091.09L1267.43 1093.69L1267.92 1096.27L1268.43 1098.86L1268.96 1101.43L1269.51 1104.00L1270.09 1106.56L1270.68 1109.12L1271.31 1111.66L1271.96 1114.20L1272.63 1116.73L1273.34 1119.24L1274.07 1121.75L1274.83 1124.25L1275.63 1126.74L1276.46 1129.21L1277.32 1131.67L1278.21 1134.12L1279.14 1136.56L1280.10 1138.99L1281.10 1141.40L1282.13 1143.79L1283.19 1146.18L1284.29 1148.55L1285.42 1150.90L1286.58 1153.24L1287.77 1155.56L1288.99 1157.87L1290.24 1160.16L1291.53 1162.44L1292.84 1164.70L1294.19 1166.94L1295.56 1169.16L1296.97 1171.37L1298.40 1173.56L1299.86 1175.73L1301.35 1177.88L1302.87 1180.01L1304.42 1182.13L1305.99 1184.22L1307.59 1186.29L1309.22 1188.35L1310.88 1190.38L1312.56 1192.39L1314.26 1194.38L1315.99 1196.35L1317.75 1198.29L1319.53 1200.21L1321.34 1202.11L1323.17 1203.99L1325.02 1205.85L1326.90 1207.68L1328.80 1209.48L1330.72 1211.26L1332.66 1213.02L1334.63 1214.75L1336.62 1216.46L1338.63 1218.14L1340.67 1219.79L1342.72 1221.42L1344.79 1223.02L1346.89 1224.59L1349.00 1226.14L1351.13 1227.66L1353.28 1229.15L1355.46 1230.61L1357.64 1232.04L1359.85 1233.45L1362.08 1234.82L1364.32 1236.17L1366.58 1237.48L1368.86 1238.77L1371.15 1240.02L1373.46 1241.25L1375.79 1242.45L1378.13 1243.62L1380.48 1244.75L1382.85 1245.86L1385.23 1246.94L1387.63 1247.99L1390.04 1249.01L1392.46 1250.00L1394.90 1250.96L1397.34 1251.88L1399.80 1252.78L1402.27 1253.65L1404.75 1254.49L1407.24 1255.30L1409.75 1256.07L1412.26 1256.82L1414.78 1257.54L1417.31 1258.22L1419.84 1258.88L1422.39 1259.50L1424.94 1260.09L1427.50 1260.66L1430.07 1261.19L1432.65 1261.69L1435.23 1262.16L1437.82 1262.60L1440.41 1263.01L1443.01 1263.39L1445.61 1263.73L1448.21 1264.05L1450.82 1264.33L1453.44 1264.58L1456.05 1264.81L1458.67 1265.00L1461.30 1265.15L1463.92 1265.28L1466.55 1265.38L1469.17 1265.44L1471.80 1265.47L1474.43 1265.47L1477.06 1265.44L1479.68 1265.38L1482.31 1265.28L1484.93 1265.16L1487.56 1265.00L1490.18 1264.81L1492.80 1264.58L1495.42 1264.33L1498.03 1264.04L1500.64 1263.72L1503.25 1263.37L1505.85 1262.99L1508.45 1262.57L1511.04 1262.12L1513.63 1261.64L1516.21 1261.13L1518.79 1260.58L1521.36 1260.00L1523.92 1259.39L1526.47 1258.74L1529.02 1258.07L1531.56 1257.36L1534.09 1256.61L1536.61 1255.84L1539.12 1255.03L1541.63 1254.18L1544.12 1253.31L1546.60 1252.40" fill="none" stroke="#000" stroke-width="3.9"/></g></svg>
<svg width="2520" height="1784"><rect x="120" y="138" width="2" height="52" fill="#8c8c8c" /><rect x="126" y="138" width="2" height="52" fill="#8c8c8c" /><rect x="257" y="141" width="2" height="2" fill="#7a7a7a" /><rect x="257" y="147" width="2" height="2" fill="#7a7a7a" /><rect x="257" y="153" width="2" height="2" fill="#7a7a7a" /><rect x="257" y="159" width="2" height="2" fill="#7a7a7a" /><rect x="257" y="165" width="2" height="2" fill="#7a7a7a" /><rect x="257" y="171" width="2" height="2" fill="#7a7a7a" /><rect x="257" y="177" width="2" height="2" fill="#7a7a7a" /><rect x="257" y="183" width="2" height="2" fill="#7a7a7a" /><rect x="391" y="141" width="2" height="2" fill="#7a7a7a" /><rect x="391" y="147" width="2" height="2" fill="#7a7a7a" /><rect x="391" y="153" width="2" height="2" fill="#7a7a7a" /><rect x="391" y="159" width="2" height="2" fill="#7a7a7a" /><rect x="391" y="165" width="2" height="2" fill="#7a7a7a" /><rect x="391" y="171" width="2" height="2" fill="#7a7a7a" /><rect x="391" y="177" width="2" height="2" fill="#7a7a7a" /><rect x="391" y="183" width="2" height="2" fill="#7a7a7a" /><rect x="581" y="141" width="2" height="2" fill="#7a7a7a" /><rect x="581" y="147" width="2" height="2" fill="#7a7a7a" /><rect x="581" y="153" width="2" height="2" fill="#7a7a7a" /><rect x="581" y="159" width="2" height="2" fill="#7a7a7a" /><rect x="581" y="165" width="2" height="2" fill="#7a7a7a" /><rect x="581" y="171" width="2" height="2" fill="#7a7a7a" /><rect x="581" y="177" width="2" height="2" fill="#7a7a7a" /><rect x="581" y="183" width="2" height="2" fill="#7a7a7a" /><rect x="715" y="141" width="2" height="2" fill="#7a7a7a" /><rect x="715" y="147" width="2" height="2" fill="#7a7a7a" /><rect x="715" y="153" width="2" height="2" fill="#7a7a7a" /><rect x="715" y="159" width="2" height="2" fill="#7a7a7a" /><rect x="715" y="165" width="2" height="2" fill="#7a7a7a" /><rect x="715" y="171" width="2" height="2" fill="#7a7a7a" /><rect x="715" y="177" width="2" height="2" fill="#7a7a7a" /><rect x="715" y="183" width="2" height="2" fill="#7a7a7a" /><rect x="992" y="141" width="2" height="2" fill="#7a7a7a" /><rect x="992" y="147" width="2" height="2" fill="#7a7a7a" /><rect x="992" y="153" width="2" height="2" fill="#7a7a7a" /><rect x="992" y="159" width="2" height="2" fill="#7a7a7a" /><rect x="992" y="165" width="2" height="2" fill="#7a7a7a" /><rect x="992" y="171" width="2" height="2" fill="#7a7a7a" /><rect x="992" y="177" width="2" height="2" fill="#7a7a7a" /><rect x="992" y="183" width="2" height="2" fill="#7a7a7a" /><rect x="1399" y="141" width="2" height="2" fill="#7a7a7a" /><rect x="1399" y="147" width="2" height="2" fill="#7a7a7a" /><rect x="1399" y="153" width="2" height="2" fill="#7a7a7a" /><rect x="1399" y="159" width="2" height="2" fill="#7a7a7a" /><rect x="1399" y="165" width="2" height="2" fill="#7a7a7a" /><rect x="1399" y="171" width="2" height="2" fill="#7a7a7a" /><rect x="1399" y="177" width="2" height="2" fill="#7a7a7a" /><rect x="1399" y="183" width="2" height="2" fill="#7a7a7a" /><rect x="1557" y="141" width="2" height="2" fill="#7a7a7a" /><rect x="1557" y="147" width="2" height="2" fill="#7a7a7a" /><rect x="1557" y="153" width="2" height="2" fill="#7a7a7a" /><rect x="1557" y="159" width="2" height="2" fill="#7a7a7a" /><rect x="1557" y="165" width="2" height="2" fill="#7a7a7a" /><rect x="1557" y="171" width="2" height="2" fill="#7a7a7a" /><rect x="1557" y="177" width="2" height="2" fill="#7a7a7a" /><rect x="1557" y="183" width="2" height="2" fill="#7a7a7a" /><rect x="1683" y="141" width="2" height="2" fill="#7a7a7a" /><rect x="1683" y="147" width="2" height="2" fill="#7a7a7a" /><rect x="1683" y="153" width="2" height="2" fill="#7a7a7a" /><rect x="1683" y="159" width="2" height="2" fill="#7a7a7a" /><rect x="1683" y="165" width="2" height="2" fill="#7a7a7a" /><rect x="1683" y="171" width="2" height="2" fill="#7a7a7a" /><rect x="1683" y="177" width="2" height="2" fill="#7a7a7a" /><rect x="1683" y="183" width="2" height="2" fill="#7a7a7a" /><defs><linearGradient id="gdoc" x1="0" y1="0" x2="1" y2="1"><stop offset="0" stop-color="#9a9ad8"/><stop offset="1" stop-color="#e4e4fa"/></linearGradient><pattern id="chk" width="4" height="4" patternUnits="userSpaceOnUse"><rect width="4" height="4" fill="#d8c8b8"/><rect width="2" height="2" fill="#f2e6da"/><rect x="2" y="2" width="2" height="2" fill="#f2e6da"/></pattern><pattern id="chkb" width="4" height="4" patternUnits="userSpaceOnUse"><rect width="4" height="4" fill="#c8c8e8"/><rect width="2" height="2" fill="#e8e8f8"/><rect x="2" y="2" width="2" height="2" fill="#e8e8f8"/></pattern><pattern id="chkt" width="4" height="4" patternUnits="userSpaceOnUse"><rect width="4" height="4" fill="#c8b098"/><rect width="2" height="2" fill="#e8dccc"/><rect x="2" y="2" width="2" height="2" fill="#e8dccc"/></pattern></defs><rect x="154" y="152" width="2" height="2" fill="#000"/><rect x="156" y="152" width="2" height="2" fill="#000"/><rect x="158" y="152" width="2" height="2" fill="#000"/><rect x="160" y="152" width="2" height="2" fill="#000"/><rect x="162" y="152" width="2" height="2" fill="#000"/><rect x="164" y="152" width="2" height="2" fill="#000"/><rect x="166" y="152" width="2" height="2" fill="#000"/><rect x="168" y="152" width="2" height="2" fill="#000"/><rect x="172" y="152" width="2" height="2" fill="#bdbdbd"/><rect x="154" y="154" width="2" height="2" fill="#000"/><rect x="156" y="154" width="2" height="2" fill="#fff"/><rect x="158" y="154" width="2" height="2" fill="#fff"/><rect x="160" y="154" width="2" height="2" fill="#fff"/><rect x="162" y="154" width="2" height="2" fill="#fff"/><rect x="164" y="154" width="2" height="2" fill="#fff"/><rect x="166" y="154" width="2" height="2" fill="#fff"/><rect x="168" y="154" width="2" height="2" fill="#000"/><rect x="172" y="154" width="2" height="2" fill="#bdbdbd"/><rect x="154" y="156" width="2" height="2" fill="#000"/><rect x="156" y="156" width="2" height="2" fill="#fff"/><rect x="158" y="156" width="2" height="2" fill="#a8a8dc"/><rect x="160" y="156" width="2" height="2" fill="#d4d4f4"/><rect x="162" y="156" width="2" height="2" fill="#a8a8dc"/><rect x="164" y="156" width="2" height="2" fill="#d4d4f4"/><rect x="166" y="156" width="2" height="2" fill="#000"/><rect x="168" y="156" width="2" height="2" fill="#fff"/><rect x="170" y="156" width="2" height="2" fill="#000"/><rect x="154" y="158" width="2" height="2" fill="#000"/><rect x="156" y="158" width="2" height="2" fill="#fff"/><rect x="158" y="158" width="2" height="2" fill="#d4d4f4"/><rect x="160" y="158" width="2" height="2" fill="#a8a8dc"/><rect x="162" y="158" width="2" height="2" fill="#d4d4f4"/><rect x="164" y="158" width="2" height="2" fill="#a8a8dc"/><rect x="166" y="158" width="2" height="2" fill="#d4d4f4"/><rect x="168" y="158" width="2" height="2" fill="#000"/><rect x="170" y="158" width="2" height="2" fill="#000"/><rect x="154" y="160" width="2" height="2" fill="#000"/><rect x="156" y="160" width="2" height="2" fill="#fff"/><rect x="158" y="160" width="2" height="2" fill="#a8a8dc"/><rect x="160" y="160" width="2" height="2" fill="#d4d4f4"/><rect x="162" y="160" width="2" height="2" fill="#a8a8dc"/><rect x="164" y="160" width="2" height="2" fill="#d4d4f4"/><rect x="166" y="160" width="2" height="2" fill="#a8a8dc"/><rect x="168" y="160" width="2" height="2" fill="#d4d4f4"/><rect x="170" y="160" width="2" height="2" fill="#000"/><rect x="172" y="160" width="2" height="2" fill="#000"/><rect x="154" y="162" width="2" height="2" fill="#000"/><rect x="156" y="162" width="2" height="2" fill="#fff"/><rect x="158" y="162" width="2" height="2" fill="#d4d4f4"/><rect x="160" y="162" width="2" height="2" fill="#a8a8dc"/><rect x="162" y="162" width="2" height="2" fill="#d4d4f4"/><rect x="164" y="162" width="2" height="2" fill="#a8a8dc"/><rect x="166" y="162" width="2" height="2" fill="#d4d4f4"/><rect x="168" y="162" width="2" height="2" fill="#a8a8dc"/><rect x="170" y="162" width="2" height="2" fill="#d4d4f4"/><rect x="172" y="162" width="2" height="2" fill="#000"/><rect x="154" y="164" width="2" height="2" fill="#000"/><rect x="156" y="164" width="2" height="2" fill="#fff"/><rect x="158" y="164" width="2" height="2" fill="#a8a8dc"/><rect x="160" y="164" width="2" height="2" fill="#d4d4f4"/><rect x="162" y="164" width="2" height="2" fill="#a8a8dc"/><rect x="164" y="164" width="2" height="2" fill="#d4d4f4"/><rect x="166" y="164" width="2" height="2" fill="#a8a8dc"/><rect x="168" y="164" width="2" height="2" fill="#d4d4f4"/><rect x="170" y="164" width="2" height="2" fill="#fff"/><rect x="154" y="166" width="2" height="2" fill="#000"/><rect x="156" y="166" width="2" height="2" fill="#fff"/><rect x="158" y="166" width="2" height="2" fill="#d4d4f4"/><rect x="160" y="166" width="2" height="2" fill="#a8a8dc"/><rect x="162" y="166" width="2" height="2" fill="#d4d4f4"/><rect x="164" y="166" width="2" height="2" fill="#a8a8dc"/><rect x="166" y="166" width="2" height="2" fill="#fff"/><rect x="168" y="166" width="2" height="2" fill="#fff"/><rect x="170" y="166" width="2" height="2" fill="#fff"/><rect x="172" y="166" width="2" height="2" fill="#000"/><rect x="174" y="166" width="2" height="2" fill="#fff"/><rect x="154" y="168" width="2" height="2" fill="#000"/><rect x="156" y="168" width="2" height="2" fill="#fff"/><rect x="158" y="168" width="2" height="2" fill="#a8a8dc"/><rect x="160" y="168" width="2" height="2" fill="#d4d4f4"/><rect x="162" y="168" width="2" height="2" fill="#a8a8dc"/><rect x="164" y="168" width="2" height="2" fill="#d4d4f4"/><rect x="166" y="168" width="2" height="2" fill="#fff"/><rect x="168" y="168" width="2" height="2" fill="#000"/><rect x="170" y="168" width="2" height="2" fill="#fff"/><rect x="172" y="168" width="2" height="2" fill="#000"/><rect x="174" y="168" width="2" height="2" fill="#fff"/><rect x="176" y="168" width="2" height="2" fill="#000"/><rect x="154" y="170" width="2" height="2" fill="#000"/><rect x="156" y="170" width="2" height="2" fill="#fff"/><rect x="158" y="170" width="2" height="2" fill="#d4d4f4"/><rect x="160" y="170" width="2" height="2" fill="#a8a8dc"/><rect x="162" y="170" width="2" height="2" fill="#d4d4f4"/><rect x="164" y="170" width="2" height="2" fill="#fff"/><rect x="166" y="170" width="2" height="2" fill="#fff"/><rect x="168" y="170" width="2" height="2" fill="#fff"/><rect x="170" y="170" width="2" height="2" fill="#000"/><rect x="172" y="170" width="2" height="2" fill="#fff"/><rect x="174" y="170" width="2" height="2" fill="#000"/><rect x="176" y="170" width="2" height="2" fill="#fff"/><rect x="154" y="172" width="2" height="2" fill="#000"/><rect x="156" y="172" width="2" height="2" fill="#fff"/><rect x="158" y="172" width="2" height="2" fill="#a8a8dc"/><rect x="160" y="172" width="2" height="2" fill="#d4d4f4"/><rect x="162" y="172" width="2" height="2" fill="#a8a8dc"/><rect x="164" y="172" width="2" height="2" fill="#fff"/><rect x="166" y="172" width="2" height="2" fill="#000"/><rect x="168" y="172" width="2" height="2" fill="#000"/><rect x="170" y="172" width="2" height="2" fill="#fff"/><rect x="172" y="172" width="2" height="2" fill="#000"/><rect x="174" y="172" width="2" height="2" fill="#fff"/><rect x="176" y="172" width="2" height="2" fill="#000"/><rect x="178" y="172" width="2" height="2" fill="#000"/><rect x="154" y="174" width="2" height="2" fill="#000"/><rect x="156" y="174" width="2" height="2" fill="#000"/><rect x="158" y="174" width="2" height="2" fill="#000"/><rect x="160" y="174" width="2" height="2" fill="#000"/><rect x="162" y="174" width="2" height="2" fill="#000"/><rect x="164" y="174" width="2" height="2" fill="#fff"/><rect x="166" y="174" width="2" height="2" fill="#fff"/><rect x="168" y="174" width="2" height="2" fill="#fff"/><rect x="170" y="174" width="2" height="2" fill="#000"/><rect x="172" y="174" width="2" height="2" fill="#fff"/><rect x="174" y="174" width="2" height="2" fill="#000"/><rect x="176" y="174" width="2" height="2" fill="#fff"/><rect x="164" y="176" width="2" height="2" fill="#fff"/><rect x="166" y="176" width="2" height="2" fill="#fff"/><rect x="168" y="176" width="2" height="2" fill="#000"/><rect x="170" y="176" width="2" height="2" fill="#fff"/><rect x="172" y="176" width="2" height="2" fill="#000"/><rect x="174" y="176" width="2" height="2" fill="#fff"/><rect x="176" y="176" width="2" height="2" fill="#000"/><rect x="172" y="178" width="2" height="2" fill="#000"/><rect x="222" y="156" width="2" height="2" fill="#5a1414"/><rect x="224" y="156" width="2" height="2" fill="#5a1414"/><rect x="226" y="156" width="2" height="2" fill="#5a1414"/><rect x="228" y="156" width="2" height="2" fill="#5a1414"/><rect x="230" y="156" width="2" height="2" fill="#5a1414"/><rect x="212" y="158" width="2" height="2" fill="#000"/><rect x="214" y="158" width="2" height="2" fill="#000"/><rect x="216" y="158" width="2" height="2" fill="#000"/><rect x="218" y="158" width="2" height="2" fill="#000"/><rect x="220" y="158" width="2" height="2" fill="#000"/><rect x="222" y="158" width="2" height="2" fill="#fff"/><rect x="224" y="158" width="2" height="2" fill="#fff"/><rect x="226" y="158" width="2" height="2" fill="#fff"/><rect x="228" y="158" width="2" height="2" fill="#fff"/><rect x="230" y="158" width="2" height="2" fill="#000"/><rect x="210" y="160" width="2" height="2" fill="#000"/><rect x="212" y="160" width="2" height="2" fill="#fff"/><rect x="214" y="160" width="2" height="2" fill="#fff"/><rect x="216" y="160" width="2" height="2" fill="#fff"/><rect x="218" y="160" width="2" height="2" fill="#fff"/><rect x="220" y="160" width="2" height="2" fill="#fff"/><rect x="222" y="160" width="2" height="2" fill="#fff"/><rect x="224" y="160" width="2" height="2" fill="#f0dcc4"/><rect x="226" y="160" width="2" height="2" fill="#a89478"/><rect x="228" y="160" width="2" height="2" fill="#f0dcc4"/><rect x="230" y="160" width="2" height="2" fill="#000"/><rect x="206" y="162" width="2" height="2" fill="#000"/><rect x="208" y="162" width="2" height="2" fill="#000"/><rect x="210" y="162" width="2" height="2" fill="#000"/><rect x="212" y="162" width="2" height="2" fill="#000"/><rect x="214" y="162" width="2" height="2" fill="#000"/><rect x="216" y="162" width="2" height="2" fill="#000"/><rect x="218" y="162" width="2" height="2" fill="#000"/><rect x="220" y="162" width="2" height="2" fill="#000"/><rect x="222" y="162" width="2" height="2" fill="#000"/><rect x="224" y="162" width="2" height="2" fill="#000"/><rect x="226" y="162" width="2" height="2" fill="#f0dcc4"/><rect x="228" y="162" width="2" height="2" fill="#a89478"/><rect x="230" y="162" width="2" height="2" fill="#000"/><rect x="206" y="164" width="2" height="2" fill="#000"/><rect x="208" y="164" width="2" height="2" fill="#fff"/><rect x="210" y="164" width="2" height="2" fill="#fff"/><rect x="212" y="164" width="2" height="2" fill="#fff"/><rect x="214" y="164" width="2" height="2" fill="#fff"/><rect x="216" y="164" width="2" height="2" fill="#fff"/><rect x="218" y="164" width="2" height="2" fill="#fff"/><rect x="220" y="164" width="2" height="2" fill="#fff"/><rect x="222" y="164" width="2" height="2" fill="#fff"/><rect x="224" y="164" width="2" height="2" fill="#fff"/><rect x="226" y="164" width="2" height="2" fill="#000"/><rect x="228" y="164" width="2" height="2" fill="#f0dcc4"/><rect x="230" y="164" width="2" height="2" fill="#000"/><rect x="208" y="166" width="2" height="2" fill="#000"/><rect x="210" y="166" width="2" height="2" fill="#fff"/><rect x="212" y="166" width="2" height="2" fill="#a89478"/><rect x="214" y="166" width="2" height="2" fill="#f0dcc4"/><rect x="216" y="166" width="2" height="2" fill="#a89478"/><rect x="218" y="166" width="2" height="2" fill="#f0dcc4"/><rect x="220" y="166" width="2" height="2" fill="#a89478"/><rect x="222" y="166" width="2" height="2" fill="#f0dcc4"/><rect x="224" y="166" width="2" height="2" fill="#a89478"/><rect x="226" y="166" width="2" height="2" fill="#f0dcc4"/><rect x="228" y="166" width="2" height="2" fill="#000"/><rect x="230" y="166" width="2" height="2" fill="#000"/><rect x="208" y="168" width="2" height="2" fill="#000"/><rect x="210" y="168" width="2" height="2" fill="#fff"/><rect x="212" y="168" width="2" height="2" fill="#f0dcc4"/><rect x="214" y="168" width="2" height="2" fill="#a89478"/><rect x="216" y="168" width="2" height="2" fill="#f0dcc4"/><rect x="218" y="168" width="2" height="2" fill="#a89478"/><rect x="220" y="168" width="2" height="2" fill="#f0dcc4"/><rect x="222" y="168" width="2" height="2" fill="#a89478"/><rect x="224" y="168" width="2" height="2" fill="#f0dcc4"/><rect x="226" y="168" width="2" height="2" fill="#a89478"/><rect x="228" y="168" width="2" height="2" fill="#000"/><rect x="230" y="168" width="2" height="2" fill="#000"/><rect x="210" y="170" width="2" height="2" fill="#000"/><rect x="212" y="170" width="2" height="2" fill="#fff"/><rect x="214" y="170" width="2" height="2" fill="#f0dcc4"/><rect x="216" y="170" width="2" height="2" fill="#a89478"/><rect x="218" y="170" width="2" height="2" fill="#f0dcc4"/><rect x="220" y="170" width="2" height="2" fill="#a89478"/><rect x="222" y="170" width="2" height="2" fill="#f0dcc4"/><rect x="224" y="170" width="2" height="2" fill="#a89478"/><rect x="226" y="170" width="2" height="2" fill="#f0dcc4"/><rect x="228" y="170" width="2" height="2" fill="#a89478"/><rect x="230" y="170" width="2" height="2" fill="#000"/><rect x="210" y="172" width="2" height="2" fill="#000"/><rect x="212" y="172" width="2" height="2" fill="#000"/><rect x="214" y="172" width="2" height="2" fill="#000"/><rect x="216" y="172" width="2" height="2" fill="#000"/><rect x="218" y="172" width="2" height="2" fill="#000"/><rect x="220" y="172" width="2" height="2" fill="#000"/><rect x="222" y="172" width="2" height="2" fill="#000"/><rect x="224" y="172" width="2" height="2" fill="#000"/><rect x="226" y="172" width="2" height="2" fill="#000"/><rect x="228" y="172" width="2" height="2" fill="#000"/><rect x="230" y="172" width="2" height="2" fill="#000"/><rect x="288" y="152" width="2" height="2" fill="#7a7a7a"/><rect x="290" y="152" width="2" height="2" fill="#7a7a7a"/><rect x="292" y="152" width="2" height="2" fill="#7a7a7a"/><rect x="294" y="152" width="2" height="2" fill="#7a7a7a"/><rect x="296" y="152" width="2" height="2" fill="#7a7a7a"/><rect x="298" y="152" width="2" height="2" fill="#7a7a7a"/><rect x="300" y="152" width="2" height="2" fill="#7a7a7a"/><rect x="302" y="152" width="2" height="2" fill="#7a7a7a"/><rect x="304" y="152" width="2" height="2" fill="#7a7a7a"/><rect x="306" y="152" width="2" height="2" fill="#7a7a7a"/><rect x="286" y="154" width="2" height="2" fill="#7a7a7a"/><rect x="288" y="154" width="2" height="2" fill="#ababab"/><rect x="290" y="154" width="2" height="2" fill="#8f8f8f"/><rect x="292" y="154" width="2" height="2" fill="#ababab"/><rect x="294" y="154" width="2" height="2" fill="#ababab"/><rect x="296" y="154" width="2" height="2" fill="#ababab"/><rect x="298" y="154" width="2" height="2" fill="#7a7a7a"/><rect x="300" y="154" width="2" height="2" fill="#7a7a7a"/><rect x="302" y="154" width="2" height="2" fill="#7a7a7a"/><rect x="304" y="154" width="2" height="2" fill="#ababab"/><rect x="306" y="154" width="2" height="2" fill="#ababab"/><rect x="308" y="154" width="2" height="2" fill="#7a7a7a"/><rect x="286" y="156" width="2" height="2" fill="#7a7a7a"/><rect x="288" y="156" width="2" height="2" fill="#ababab"/><rect x="290" y="156" width="2" height="2" fill="#8f8f8f"/><rect x="292" y="156" width="2" height="2" fill="#ababab"/><rect x="294" y="156" width="2" height="2" fill="#ababab"/><rect x="296" y="156" width="2" height="2" fill="#ababab"/><rect x="298" y="156" width="2" height="2" fill="#7a7a7a"/><rect x="300" y="156" width="2" height="2" fill="#ababab"/><rect x="302" y="156" width="2" height="2" fill="#7a7a7a"/><rect x="304" y="156" width="2" height="2" fill="#ababab"/><rect x="306" y="156" width="2" height="2" fill="#ababab"/><rect x="308" y="156" width="2" height="2" fill="#7a7a7a"/><rect x="310" y="156" width="2" height="2" fill="#ababab"/><rect x="286" y="158" width="2" height="2" fill="#7a7a7a"/><rect x="288" y="158" width="2" height="2" fill="#ababab"/><rect x="290" y="158" width="2" height="2" fill="#8f8f8f"/><rect x="292" y="158" width="2" height="2" fill="#ababab"/><rect x="294" y="158" width="2" height="2" fill="#ababab"/><rect x="296" y="158" width="2" height="2" fill="#ababab"/><rect x="298" y="158" width="2" height="2" fill="#7a7a7a"/><rect x="300" y="158" width="2" height="2" fill="#ababab"/><rect x="302" y="158" width="2" height="2" fill="#7a7a7a"/><rect x="304" y="158" width="2" height="2" fill="#ababab"/><rect x="306" y="158" width="2" height="2" fill="#ababab"/><rect x="308" y="158" width="2" height="2" fill="#7a7a7a"/><rect x="310" y="158" width="2" height="2" fill="#ababab"/><rect x="286" y="160" width="2" height="2" fill="#7a7a7a"/><rect x="288" y="160" width="2" height="2" fill="#ababab"/><rect x="290" y="160" width="2" height="2" fill="#8f8f8f"/><rect x="292" y="160" width="2" height="2" fill="#ababab"/><rect x="294" y="160" width="2" height="2" fill="#ababab"/><rect x="296" y="160" width="2" height="2" fill="#ababab"/><rect x="298" y="160" width="2" height="2" fill="#7a7a7a"/><rect x="300" y="160" width="2" height="2" fill="#7a7a7a"/><rect x="302" y="160" width="2" height="2" fill="#7a7a7a"/><rect x="304" y="160" width="2" height="2" fill="#ababab"/><rect x="306" y="160" width="2" height="2" fill="#ababab"/><rect x="308" y="160" width="2" height="2" fill="#7a7a7a"/><rect x="310" y="160" width="2" height="2" fill="#ababab"/><rect x="286" y="162" width="2" height="2" fill="#7a7a7a"/><rect x="288" y="162" width="2" height="2" fill="#ababab"/><rect x="290" y="162" width="2" height="2" fill="#ababab"/><rect x="292" y="162" width="2" height="2" fill="#ababab"/><rect x="294" y="162" width="2" height="2" fill="#ababab"/><rect x="296" y="162" width="2" height="2" fill="#ababab"/><rect x="298" y="162" width="2" height="2" fill="#ababab"/><rect x="300" y="162" width="2" height="2" fill="#ababab"/><rect x="302" y="162" width="2" height="2" fill="#ababab"/><rect x="304" y="162" width="2" height="2" fill="#ababab"/><rect x="306" y="162" width="2" height="2" fill="#ababab"/><rect x="308" y="162" width="2" height="2" fill="#7a7a7a"/><rect x="310" y="162" width="2" height="2" fill="#ababab"/><rect x="286" y="164" width="2" height="2" fill="#7a7a7a"/><rect x="288" y="164" width="2" height="2" fill="#ababab"/><rect x="290" y="164" width="2" height="2" fill="#8f8f8f"/><rect x="292" y="164" width="2" height="2" fill="#8f8f8f"/><rect x="294" y="164" width="2" height="2" fill="#8f8f8f"/><rect x="296" y="164" width="2" height="2" fill="#8f8f8f"/><rect x="298" y="164" width="2" height="2" fill="#8f8f8f"/><rect x="300" y="164" width="2" height="2" fill="#8f8f8f"/><rect x="302" y="164" width="2" height="2" fill="#8f8f8f"/><rect x="304" y="164" width="2" height="2" fill="#8f8f8f"/><rect x="306" y="164" width="2" height="2" fill="#ababab"/><rect x="308" y="164" width="2" height="2" fill="#7a7a7a"/><rect x="310" y="164" width="2" height="2" fill="#ababab"/><rect x="286" y="166" width="2" height="2" fill="#7a7a7a"/><rect x="288" y="166" width="2" height="2" fill="#ababab"/><rect x="290" y="166" width="2" height="2" fill="#8f8f8f"/><rect x="292" y="166" width="2" height="2" fill="#ababab"/><rect x="294" y="166" width="2" height="2" fill="#ababab"/><rect x="296" y="166" width="2" height="2" fill="#ababab"/><rect x="298" y="166" width="2" height="2" fill="#ababab"/><rect x="300" y="166" width="2" height="2" fill="#ababab"/><rect x="302" y="166" width="2" height="2" fill="#ababab"/><rect x="304" y="166" width="2" height="2" fill="#8f8f8f"/><rect x="306" y="166" width="2" height="2" fill="#ababab"/><rect x="308" y="166" width="2" height="2" fill="#7a7a7a"/><rect x="310" y="166" width="2" height="2" fill="#ababab"/><rect x="286" y="168" width="2" height="2" fill="#7a7a7a"/><rect x="288" y="168" width="2" height="2" fill="#ababab"/><rect x="290" y="168" width="2" height="2" fill="#8f8f8f"/><rect x="292" y="168" width="2" height="2" fill="#ababab"/><rect x="294" y="168" width="2" height="2" fill="#a0a0a0"/><rect x="296" y="168" width="2" height="2" fill="#a0a0a0"/><rect x="298" y="168" width="2" height="2" fill="#a0a0a0"/><rect x="300" y="168" width="2" height="2" fill="#a0a0a0"/><rect x="302" y="168" width="2" height="2" fill="#ababab"/><rect x="304" y="168" width="2" height="2" fill="#8f8f8f"/><rect x="306" y="168" width="2" height="2" fill="#ababab"/><rect x="308" y="168" width="2" height="2" fill="#7a7a7a"/><rect x="310" y="168" width="2" height="2" fill="#ababab"/><rect x="286" y="170" width="2" height="2" fill="#7a7a7a"/><rect x="288" y="170" width="2" height="2" fill="#ababab"/><rect x="290" y="170" width="2" height="2" fill="#8f8f8f"/><rect x="292" y="170" width="2" height="2" fill="#ababab"/><rect x="294" y="170" width="2" height="2" fill="#a0a0a0"/><rect x="296" y="170" width="2" height="2" fill="#a0a0a0"/><rect x="298" y="170" width="2" height="2" fill="#a0a0a0"/><rect x="300" y="170" width="2" height="2" fill="#a0a0a0"/><rect x="302" y="170" width="2" height="2" fill="#ababab"/><rect x="304" y="170" width="2" height="2" fill="#8f8f8f"/><rect x="306" y="170" width="2" height="2" fill="#ababab"/><rect x="308" y="170" width="2" height="2" fill="#7a7a7a"/><rect x="310" y="170" width="2" height="2" fill="#ababab"/><rect x="286" y="172" width="2" height="2" fill="#7a7a7a"/><rect x="288" y="172" width="2" height="2" fill="#ababab"/><rect x="290" y="172" width="2" height="2" fill="#8f8f8f"/><rect x="292" y="172" width="2" height="2" fill="#ababab"/><rect x="294" y="172" width="2" height="2" fill="#ababab"/><rect x="296" y="172" width="2" height="2" fill="#ababab"/><rect x="298" y="172" width="2" height="2" fill="#ababab"/><rect x="300" y="172" width="2" height="2" fill="#ababab"/><rect x="302" y="172" width="2" height="2" fill="#ababab"/><rect x="304" y="172" width="2" height="2" fill="#8f8f8f"/><rect x="306" y="172" width="2" height="2" fill="#ababab"/><rect x="308" y="172" width="2" height="2" fill="#7a7a7a"/><rect x="310" y="172" width="2" height="2" fill="#ababab"/><rect x="288" y="174" width="2" height="2" fill="#7a7a7a"/><rect x="290" y="174" width="2" height="2" fill="#7a7a7a"/><rect x="292" y="174" width="2" height="2" fill="#7a7a7a"/><rect x="294" y="174" width="2" height="2" fill="#7a7a7a"/><rect x="296" y="174" width="2" height="2" fill="#7a7a7a"/><rect x="298" y="174" width="2" height="2" fill="#7a7a7a"/><rect x="300" y="174" width="2" height="2" fill="#7a7a7a"/><rect x="302" y="174" width="2" height="2" fill="#7a7a7a"/><rect x="304" y="174" width="2" height="2" fill="#7a7a7a"/><rect x="306" y="174" width="2" height="2" fill="#7a7a7a"/><rect x="308" y="174" width="2" height="2" fill="#8f8f8f"/><rect x="290" y="176" width="2" height="2" fill="#ababab"/><rect x="292" y="176" width="2" height="2" fill="#ababab"/><rect x="294" y="176" width="2" height="2" fill="#ababab"/><rect x="296" y="176" width="2" height="2" fill="#ababab"/><rect x="298" y="176" width="2" height="2" fill="#ababab"/><rect x="300" y="176" width="2" height="2" fill="#ababab"/><rect x="302" y="176" width="2" height="2" fill="#ababab"/><rect x="304" y="176" width="2" height="2" fill="#ababab"/><rect x="306" y="176" width="2" height="2" fill="#ababab"/><rect x="342" y="150" width="2" height="2" fill="#000"/><rect x="344" y="150" width="2" height="2" fill="#000"/><rect x="346" y="150" width="2" height="2" fill="#000"/><rect x="348" y="150" width="2" height="2" fill="#000"/><rect x="350" y="150" width="2" height="2" fill="#000"/><rect x="352" y="150" width="2" height="2" fill="#000"/><rect x="354" y="150" width="2" height="2" fill="#000"/><rect x="356" y="150" width="2" height="2" fill="#000"/><rect x="358" y="150" width="2" height="2" fill="#000"/><rect x="340" y="152" width="2" height="2" fill="#000"/><rect x="342" y="152" width="2" height="2" fill="#fff"/><rect x="344" y="152" width="2" height="2" fill="#707070"/><rect x="346" y="152" width="2" height="2" fill="#c8c8c8"/><rect x="348" y="152" width="2" height="2" fill="#c8c8c8"/><rect x="350" y="152" width="2" height="2" fill="#000"/><rect x="352" y="152" width="2" height="2" fill="#000"/><rect x="354" y="152" width="2" height="2" fill="#000"/><rect x="356" y="152" width="2" height="2" fill="#fff"/><rect x="358" y="152" width="2" height="2" fill="#fff"/><rect x="360" y="152" width="2" height="2" fill="#000"/><rect x="340" y="154" width="2" height="2" fill="#000"/><rect x="342" y="154" width="2" height="2" fill="#fff"/><rect x="344" y="154" width="2" height="2" fill="#707070"/><rect x="346" y="154" width="2" height="2" fill="#c8c8c8"/><rect x="348" y="154" width="2" height="2" fill="#c8c8c8"/><rect x="350" y="154" width="2" height="2" fill="#000"/><rect x="352" y="154" width="2" height="2" fill="#fff"/><rect x="354" y="154" width="2" height="2" fill="#000"/><rect x="356" y="154" width="2" height="2" fill="#fff"/><rect x="358" y="154" width="2" height="2" fill="#c8c8c8"/><rect x="360" y="154" width="2" height="2" fill="#000"/><rect x="340" y="156" width="2" height="2" fill="#000"/><rect x="342" y="156" width="2" height="2" fill="#fff"/><rect x="344" y="156" width="2" height="2" fill="#707070"/><rect x="346" y="156" width="2" height="2" fill="#c8c8c8"/><rect x="348" y="156" width="2" height="2" fill="#c8c8c8"/><rect x="350" y="156" width="2" height="2" fill="#000"/><rect x="352" y="156" width="2" height="2" fill="#000"/><rect x="354" y="156" width="2" height="2" fill="#000"/><rect x="356" y="156" width="2" height="2" fill="#fff"/><rect x="358" y="156" width="2" height="2" fill="#c8c8c8"/><rect x="360" y="156" width="2" height="2" fill="#000"/><rect x="340" y="158" width="2" height="2" fill="#000"/><rect x="342" y="158" width="2" height="2" fill="#fff"/><rect x="344" y="158" width="2" height="2" fill="#fff"/><rect x="346" y="158" width="2" height="2" fill="#fff"/><rect x="348" y="158" width="2" height="2" fill="#fff"/><rect x="350" y="158" width="2" height="2" fill="#fff"/><rect x="352" y="158" width="2" height="2" fill="#fff"/><rect x="354" y="158" width="2" height="2" fill="#fff"/><rect x="356" y="158" width="2" height="2" fill="#fff"/><rect x="358" y="158" width="2" height="2" fill="#c8c8c8"/><rect x="360" y="158" width="2" height="2" fill="#000"/><rect x="340" y="160" width="2" height="2" fill="#000"/><rect x="342" y="160" width="2" height="2" fill="#fff"/><rect x="344" y="160" width="2" height="2" fill="#707070"/><rect x="346" y="160" width="2" height="2" fill="#707070"/><rect x="348" y="160" width="2" height="2" fill="#707070"/><rect x="350" y="160" width="2" height="2" fill="#707070"/><rect x="352" y="160" width="2" height="2" fill="#707070"/><rect x="354" y="160" width="2" height="2" fill="#707070"/><rect x="356" y="160" width="2" height="2" fill="#fff"/><rect x="358" y="160" width="2" height="2" fill="#fff"/><rect x="360" y="160" width="2" height="2" fill="#000"/><rect x="340" y="162" width="2" height="2" fill="#000"/><rect x="342" y="162" width="2" height="2" fill="#fff"/><rect x="344" y="162" width="2" height="2" fill="#707070"/><rect x="346" y="162" width="2" height="2" fill="#fff"/><rect x="348" y="162" width="2" height="2" fill="#000"/><rect x="350" y="162" width="2" height="2" fill="#000"/><rect x="352" y="162" width="2" height="2" fill="#000"/><rect x="354" y="162" width="2" height="2" fill="#000"/><rect x="356" y="162" width="2" height="2" fill="#000"/><rect x="358" y="162" width="2" height="2" fill="#000"/><rect x="360" y="162" width="2" height="2" fill="#000"/><rect x="362" y="162" width="2" height="2" fill="#000"/><rect x="340" y="164" width="2" height="2" fill="#000"/><rect x="342" y="164" width="2" height="2" fill="#fff"/><rect x="344" y="164" width="2" height="2" fill="#707070"/><rect x="346" y="164" width="2" height="2" fill="#fff"/><rect x="348" y="164" width="2" height="2" fill="#000"/><rect x="350" y="164" width="2" height="2" fill="#2c2c78"/><rect x="352" y="164" width="2" height="2" fill="#2c2c78"/><rect x="354" y="164" width="2" height="2" fill="#2c2c78"/><rect x="356" y="164" width="2" height="2" fill="#2c2c78"/><rect x="358" y="164" width="2" height="2" fill="#2c2c78"/><rect x="360" y="164" width="2" height="2" fill="#2c2c78"/><rect x="362" y="164" width="2" height="2" fill="#000"/><rect x="340" y="166" width="2" height="2" fill="#000"/><rect x="342" y="166" width="2" height="2" fill="#fff"/><rect x="344" y="166" width="2" height="2" fill="#707070"/><rect x="346" y="166" width="2" height="2" fill="#fff"/><rect x="348" y="166" width="2" height="2" fill="#000"/><rect x="350" y="166" width="2" height="2" fill="#fff"/><rect x="352" y="166" width="2" height="2" fill="#fff"/><rect x="354" y="166" width="2" height="2" fill="#fff"/><rect x="356" y="166" width="2" height="2" fill="#fff"/><rect x="358" y="166" width="2" height="2" fill="#fff"/><rect x="360" y="166" width="2" height="2" fill="#fff"/><rect x="362" y="166" width="2" height="2" fill="#000"/><rect x="340" y="168" width="2" height="2" fill="#000"/><rect x="342" y="168" width="2" height="2" fill="#fff"/><rect x="344" y="168" width="2" height="2" fill="#707070"/><rect x="346" y="168" width="2" height="2" fill="#fff"/><rect x="348" y="168" width="2" height="2" fill="#000"/><rect x="350" y="168" width="2" height="2" fill="#fff"/><rect x="352" y="168" width="2" height="2" fill="#000"/><rect x="354" y="168" width="2" height="2" fill="#c8c8c8"/><rect x="356" y="168" width="2" height="2" fill="#c8c8c8"/><rect x="358" y="168" width="2" height="2" fill="#c8c8c8"/><rect x="360" y="168" width="2" height="2" fill="#fff"/><rect x="362" y="168" width="2" height="2" fill="#000"/><rect x="342" y="170" width="2" height="2" fill="#000"/><rect x="344" y="170" width="2" height="2" fill="#000"/><rect x="346" y="170" width="2" height="2" fill="#000"/><rect x="348" y="170" width="2" height="2" fill="#000"/><rect x="350" y="170" width="2" height="2" fill="#fff"/><rect x="352" y="170" width="2" height="2" fill="#000"/><rect x="354" y="170" width="2" height="2" fill="#c8c8c8"/><rect x="356" y="170" width="2" height="2" fill="#c8c8c8"/><rect x="358" y="170" width="2" height="2" fill="#c8c8c8"/><rect x="360" y="170" width="2" height="2" fill="#fff"/><rect x="362" y="170" width="2" height="2" fill="#000"/><rect x="348" y="172" width="2" height="2" fill="#000"/><rect x="350" y="172" width="2" height="2" fill="#fff"/><rect x="352" y="172" width="2" height="2" fill="#fff"/><rect x="354" y="172" width="2" height="2" fill="#fff"/><rect x="356" y="172" width="2" height="2" fill="#fff"/><rect x="358" y="172" width="2" height="2" fill="#fff"/><rect x="360" y="172" width="2" height="2" fill="#fff"/><rect x="362" y="172" width="2" height="2" fill="#000"/><rect x="348" y="174" width="2" height="2" fill="#000"/><rect x="350" y="174" width="2" height="2" fill="#000"/><rect x="352" y="174" width="2" height="2" fill="#000"/><rect x="354" y="174" width="2" height="2" fill="#000"/><rect x="356" y="174" width="2" height="2" fill="#000"/><rect x="358" y="174" width="2" height="2" fill="#000"/><rect x="360" y="174" width="2" height="2" fill="#000"/><rect x="362" y="174" width="2" height="2" fill="#000"/><rect x="422" y="150" width="2" height="2" fill="#000"/><rect x="424" y="150" width="2" height="2" fill="#000"/><rect x="436" y="150" width="2" height="2" fill="#000"/><rect x="438" y="150" width="2" height="2" fill="#000"/><rect x="422" y="152" width="2" height="2" fill="#000"/><rect x="424" y="152" width="2" height="2" fill="#fff"/><rect x="426" y="152" width="2" height="2" fill="#000"/><rect x="434" y="152" width="2" height="2" fill="#000"/><rect x="436" y="152" width="2" height="2" fill="#fff"/><rect x="438" y="152" width="2" height="2" fill="#000"/><rect x="422" y="154" width="2" height="2" fill="#000"/><rect x="424" y="154" width="2" height="2" fill="#fff"/><rect x="426" y="154" width="2" height="2" fill="#a8a8a8"/><rect x="434" y="154" width="2" height="2" fill="#000"/><rect x="436" y="154" width="2" height="2" fill="#fff"/><rect x="438" y="154" width="2" height="2" fill="#000"/><rect x="424" y="156" width="2" height="2" fill="#000"/><rect x="426" y="156" width="2" height="2" fill="#fff"/><rect x="428" y="156" width="2" height="2" fill="#000"/><rect x="432" y="156" width="2" height="2" fill="#000"/><rect x="434" y="156" width="2" height="2" fill="#fff"/><rect x="436" y="156" width="2" height="2" fill="#a8a8a8"/><rect x="438" y="156" width="2" height="2" fill="#a8a8a8"/><rect x="424" y="158" width="2" height="2" fill="#000"/><rect x="426" y="158" width="2" height="2" fill="#fff"/><rect x="428" y="158" width="2" height="2" fill="#a8a8a8"/><rect x="430" y="158" width="2" height="2" fill="#a8a8a8"/><rect x="432" y="158" width="2" height="2" fill="#000"/><rect x="434" y="158" width="2" height="2" fill="#fff"/><rect x="436" y="158" width="2" height="2" fill="#000"/><rect x="426" y="160" width="2" height="2" fill="#000"/><rect x="428" y="160" width="2" height="2" fill="#fff"/><rect x="430" y="160" width="2" height="2" fill="#000"/><rect x="432" y="160" width="2" height="2" fill="#fff"/><rect x="434" y="160" width="2" height="2" fill="#a8a8a8"/><rect x="436" y="160" width="2" height="2" fill="#a8a8a8"/><rect x="426" y="162" width="2" height="2" fill="#000"/><rect x="428" y="162" width="2" height="2" fill="#000"/><rect x="434" y="162" width="2" height="2" fill="#000"/><rect x="426" y="164" width="2" height="2" fill="#000"/><rect x="432" y="164" width="2" height="2" fill="#000"/><rect x="434" y="164" width="2" height="2" fill="#000"/><rect x="422" y="166" width="2" height="2" fill="#000"/><rect x="424" y="166" width="2" height="2" fill="#000"/><rect x="426" y="166" width="2" height="2" fill="#000"/><rect x="428" y="166" width="2" height="2" fill="#000"/><rect x="430" y="166" width="2" height="2" fill="#000"/><rect x="432" y="166" width="2" height="2" fill="#000"/><rect x="434" y="166" width="2" height="2" fill="#1c1c8c"/><rect x="436" y="166" width="2" height="2" fill="#000"/><rect x="438" y="166" width="2" height="2" fill="#000"/><rect x="420" y="168" width="2" height="2" fill="#000"/><rect x="422" y="168" width="2" height="2" fill="#9090f0"/><rect x="424" y="168" width="2" height="2" fill="#1c1c8c"/><rect x="426" y="168" width="2" height="2" fill="#9090f0"/><rect x="428" y="168" width="2" height="2" fill="#000"/><rect x="430" y="168" width="2" height="2" fill="#fff"/><rect x="432" y="168" width="2" height="2" fill="#000"/><rect x="434" y="168" width="2" height="2" fill="#9090f0"/><rect x="436" y="168" width="2" height="2" fill="#1c1c8c"/><rect x="438" y="168" width="2" height="2" fill="#9090f0"/><rect x="440" y="168" width="2" height="2" fill="#000"/><rect x="420" y="170" width="2" height="2" fill="#000"/><rect x="422" y="170" width="2" height="2" fill="#1c1c8c"/><rect x="424" y="170" width="2" height="2" fill="#fff"/><rect x="426" y="170" width="2" height="2" fill="#1c1c8c"/><rect x="428" y="170" width="2" height="2" fill="#000"/><rect x="430" y="170" width="2" height="2" fill="#fff"/><rect x="432" y="170" width="2" height="2" fill="#000"/><rect x="434" y="170" width="2" height="2" fill="#1c1c8c"/><rect x="436" y="170" width="2" height="2" fill="#fff"/><rect x="438" y="170" width="2" height="2" fill="#1c1c8c"/><rect x="440" y="170" width="2" height="2" fill="#000"/><rect x="420" y="172" width="2" height="2" fill="#000"/><rect x="422" y="172" width="2" height="2" fill="#9090f0"/><rect x="424" y="172" width="2" height="2" fill="#1c1c8c"/><rect x="426" y="172" width="2" height="2" fill="#9090f0"/><rect x="428" y="172" width="2" height="2" fill="#000"/><rect x="432" y="172" width="2" height="2" fill="#000"/><rect x="434" y="172" width="2" height="2" fill="#9090f0"/><rect x="436" y="172" width="2" height="2" fill="#1c1c8c"/><rect x="438" y="172" width="2" height="2" fill="#9090f0"/><rect x="440" y="172" width="2" height="2" fill="#000"/><rect x="422" y="174" width="2" height="2" fill="#000"/><rect x="424" y="174" width="2" height="2" fill="#000"/><rect x="426" y="174" width="2" height="2" fill="#000"/><rect x="434" y="174" width="2" height="2" fill="#000"/><rect x="436" y="174" width="2" height="2" fill="#000"/><rect x="438" y="174" width="2" height="2" fill="#000"/><rect x="476" y="152" width="2" height="2" fill="#000"/><rect x="478" y="152" width="2" height="2" fill="#000"/><rect x="480" y="152" width="2" height="2" fill="#000"/><rect x="482" y="152" width="2" height="2" fill="#000"/><rect x="484" y="152" width="2" height="2" fill="#000"/><rect x="486" y="152" width="2" height="2" fill="#000"/><rect x="476" y="154" width="2" height="2" fill="#000"/><rect x="478" y="154" width="2" height="2" fill="#fff"/><rect x="480" y="154" width="2" height="2" fill="#fff"/><rect x="482" y="154" width="2" height="2" fill="#fff"/><rect x="484" y="154" width="2" height="2" fill="#fff"/><rect x="486" y="154" width="2" height="2" fill="#000"/><rect x="476" y="156" width="2" height="2" fill="#000"/><rect x="478" y="156" width="2" height="2" fill="#fff"/><rect x="480" y="156" width="2" height="2" fill="#a0a0c8"/><rect x="482" y="156" width="2" height="2" fill="#000"/><rect x="484" y="156" width="2" height="2" fill="#000"/><rect x="486" y="156" width="2" height="2" fill="#000"/><rect x="488" y="156" width="2" height="2" fill="#000"/><rect x="490" y="156" width="2" height="2" fill="#000"/><rect x="492" y="156" width="2" height="2" fill="#000"/><rect x="476" y="158" width="2" height="2" fill="#000"/><rect x="478" y="158" width="2" height="2" fill="#fff"/><rect x="480" y="158" width="2" height="2" fill="#dcdcf8"/><rect x="482" y="158" width="2" height="2" fill="#000"/><rect x="484" y="158" width="2" height="2" fill="#fff"/><rect x="486" y="158" width="2" height="2" fill="#fff"/><rect x="488" y="158" width="2" height="2" fill="#fff"/><rect x="490" y="158" width="2" height="2" fill="#fff"/><rect x="492" y="158" width="2" height="2" fill="#000"/><rect x="476" y="160" width="2" height="2" fill="#000"/><rect x="478" y="160" width="2" height="2" fill="#fff"/><rect x="480" y="160" width="2" height="2" fill="#a0a0c8"/><rect x="482" y="160" width="2" height="2" fill="#000"/><rect x="484" y="160" width="2" height="2" fill="#fff"/><rect x="486" y="160" width="2" height="2" fill="#dcdcf8"/><rect x="488" y="160" width="2" height="2" fill="#a0a0c8"/><rect x="490" y="160" width="2" height="2" fill="#000"/><rect x="492" y="160" width="2" height="2" fill="#fff"/><rect x="494" y="160" width="2" height="2" fill="#000"/><rect x="476" y="162" width="2" height="2" fill="#000"/><rect x="478" y="162" width="2" height="2" fill="#fff"/><rect x="480" y="162" width="2" height="2" fill="#dcdcf8"/><rect x="482" y="162" width="2" height="2" fill="#000"/><rect x="484" y="162" width="2" height="2" fill="#fff"/><rect x="486" y="162" width="2" height="2" fill="#a0a0c8"/><rect x="488" y="162" width="2" height="2" fill="#dcdcf8"/><rect x="490" y="162" width="2" height="2" fill="#a0a0c8"/><rect x="492" y="162" width="2" height="2" fill="#000"/><rect x="494" y="162" width="2" height="2" fill="#000"/><rect x="476" y="164" width="2" height="2" fill="#000"/><rect x="478" y="164" width="2" height="2" fill="#fff"/><rect x="480" y="164" width="2" height="2" fill="#a0a0c8"/><rect x="482" y="164" width="2" height="2" fill="#000"/><rect x="484" y="164" width="2" height="2" fill="#fff"/><rect x="486" y="164" width="2" height="2" fill="#dcdcf8"/><rect x="488" y="164" width="2" height="2" fill="#a0a0c8"/><rect x="490" y="164" width="2" height="2" fill="#dcdcf8"/><rect x="492" y="164" width="2" height="2" fill="#a0a0c8"/><rect x="494" y="164" width="2" height="2" fill="#000"/><rect x="496" y="164" width="2" height="2" fill="#000"/><rect x="476" y="166" width="2" height="2" fill="#000"/><rect x="478" y="166" width="2" height="2" fill="#fff"/><rect x="480" y="166" width="2" height="2" fill="#dcdcf8"/><rect x="482" y="166" width="2" height="2" fill="#000"/><rect x="484" y="166" width="2" height="2" fill="#fff"/><rect x="486" y="166" width="2" height="2" fill="#a0a0c8"/><rect x="488" y="166" width="2" height="2" fill="#dcdcf8"/><rect x="490" y="166" width="2" height="2" fill="#a0a0c8"/><rect x="492" y="166" width="2" height="2" fill="#dcdcf8"/><rect x="494" y="166" width="2" height="2" fill="#a0a0c8"/><rect x="496" y="166" width="2" height="2" fill="#000"/><rect x="476" y="168" width="2" height="2" fill="#000"/><rect x="478" y="168" width="2" height="2" fill="#fff"/><rect x="480" y="168" width="2" height="2" fill="#a0a0c8"/><rect x="482" y="168" width="2" height="2" fill="#000"/><rect x="484" y="168" width="2" height="2" fill="#fff"/><rect x="486" y="168" width="2" height="2" fill="#dcdcf8"/><rect x="488" y="168" width="2" height="2" fill="#a0a0c8"/><rect x="490" y="168" width="2" height="2" fill="#dcdcf8"/><rect x="492" y="168" width="2" height="2" fill="#a0a0c8"/><rect x="494" y="168" width="2" height="2" fill="#dcdcf8"/><rect x="496" y="168" width="2" height="2" fill="#000"/><rect x="476" y="170" width="2" height="2" fill="#000"/><rect x="478" y="170" width="2" height="2" fill="#000"/><rect x="480" y="170" width="2" height="2" fill="#000"/><rect x="482" y="170" width="2" height="2" fill="#000"/><rect x="484" y="170" width="2" height="2" fill="#fff"/><rect x="486" y="170" width="2" height="2" fill="#a0a0c8"/><rect x="488" y="170" width="2" height="2" fill="#dcdcf8"/><rect x="490" y="170" width="2" height="2" fill="#a0a0c8"/><rect x="492" y="170" width="2" height="2" fill="#dcdcf8"/><rect x="494" y="170" width="2" height="2" fill="#a0a0c8"/><rect x="496" y="170" width="2" height="2" fill="#000"/><rect x="482" y="172" width="2" height="2" fill="#000"/><rect x="484" y="172" width="2" height="2" fill="#fff"/><rect x="486" y="172" width="2" height="2" fill="#dcdcf8"/><rect x="488" y="172" width="2" height="2" fill="#a0a0c8"/><rect x="490" y="172" width="2" height="2" fill="#dcdcf8"/><rect x="492" y="172" width="2" height="2" fill="#a0a0c8"/><rect x="494" y="172" width="2" height="2" fill="#dcdcf8"/><rect x="496" y="172" width="2" height="2" fill="#000"/><rect x="482" y="174" width="2" height="2" fill="#000"/><rect x="484" y="174" width="2" height="2" fill="#000"/><rect x="486" y="174" width="2" height="2" fill="#000"/><rect x="488" y="174" width="2" height="2" fill="#000"/><rect x="490" y="174" width="2" height="2" fill="#000"/><rect x="492" y="174" width="2" height="2" fill="#000"/><rect x="494" y="174" width="2" height="2" fill="#000"/><rect x="496" y="174" width="2" height="2" fill="#000"/><rect x="540" y="150" width="2" height="2" fill="#666"/><rect x="542" y="150" width="2" height="2" fill="#666"/><rect x="544" y="150" width="2" height="2" fill="#666"/><rect x="538" y="152" width="2" height="2" fill="#666"/><rect x="540" y="152" width="2" height="2" fill="#fff"/><rect x="542" y="152" width="2" height="2" fill="#fff"/><rect x="544" y="152" width="2" height="2" fill="#fff"/><rect x="546" y="152" width="2" height="2" fill="#666"/><rect x="536" y="154" width="2" height="2" fill="#000"/><rect x="538" y="154" width="2" height="2" fill="#666"/><rect x="540" y="154" width="2" height="2" fill="#fff"/><rect x="542" y="154" width="2" height="2" fill="#000"/><rect x="544" y="154" width="2" height="2" fill="#fff"/><rect x="546" y="154" width="2" height="2" fill="#666"/><rect x="548" y="154" width="2" height="2" fill="#000"/><rect x="534" y="156" width="2" height="2" fill="#000"/><rect x="536" y="156" width="2" height="2" fill="#fff"/><rect x="538" y="156" width="2" height="2" fill="#666"/><rect x="540" y="156" width="2" height="2" fill="#fff"/><rect x="542" y="156" width="2" height="2" fill="#fff"/><rect x="544" y="156" width="2" height="2" fill="#fff"/><rect x="546" y="156" width="2" height="2" fill="#666"/><rect x="548" y="156" width="2" height="2" fill="#fff"/><rect x="550" y="156" width="2" height="2" fill="#5a1a1a"/><rect x="534" y="158" width="2" height="2" fill="#000"/><rect x="536" y="158" width="2" height="2" fill="#fff"/><rect x="538" y="158" width="2" height="2" fill="#5a1a1a"/><rect x="540" y="158" width="2" height="2" fill="#5a1a1a"/><rect x="542" y="158" width="2" height="2" fill="#5a1a1a"/><rect x="544" y="158" width="2" height="2" fill="#5a1a1a"/><rect x="546" y="158" width="2" height="2" fill="#5a1a1a"/><rect x="548" y="158" width="2" height="2" fill="#e4d4c0"/><rect x="550" y="158" width="2" height="2" fill="#5a1a1a"/><rect x="534" y="160" width="2" height="2" fill="#000"/><rect x="536" y="160" width="2" height="2" fill="#fff"/><rect x="538" y="160" width="2" height="2" fill="#e4d4c0"/><rect x="540" y="160" width="2" height="2" fill="#a08c78"/><rect x="542" y="160" width="2" height="2" fill="#e4d4c0"/><rect x="544" y="160" width="2" height="2" fill="#a08c78"/><rect x="546" y="160" width="2" height="2" fill="#e4d4c0"/><rect x="548" y="160" width="2" height="2" fill="#a08c78"/><rect x="550" y="160" width="2" height="2" fill="#5a1a1a"/><rect x="534" y="162" width="2" height="2" fill="#000"/><rect x="536" y="162" width="2" height="2" fill="#fff"/><rect x="538" y="162" width="2" height="2" fill="#a08c78"/><rect x="540" y="162" width="2" height="2" fill="#e4d4c0"/><rect x="542" y="162" width="2" height="2" fill="#a08c78"/><rect x="544" y="162" width="2" height="2" fill="#e4d4c0"/><rect x="546" y="162" width="2" height="2" fill="#a08c78"/><rect x="548" y="162" width="2" height="2" fill="#e4d4c0"/><rect x="550" y="162" width="2" height="2" fill="#5a1a1a"/><rect x="534" y="164" width="2" height="2" fill="#000"/><rect x="536" y="164" width="2" height="2" fill="#fff"/><rect x="538" y="164" width="2" height="2" fill="#e4d4c0"/><rect x="540" y="164" width="2" height="2" fill="#a08c78"/><rect x="542" y="164" width="2" height="2" fill="#e4d4c0"/><rect x="544" y="164" width="2" height="2" fill="#a08c78"/><rect x="546" y="164" width="2" height="2" fill="#e4d4c0"/><rect x="548" y="164" width="2" height="2" fill="#a08c78"/><rect x="550" y="164" width="2" height="2" fill="#5a1a1a"/><rect x="534" y="166" width="2" height="2" fill="#000"/><rect x="536" y="166" width="2" height="2" fill="#fff"/><rect x="538" y="166" width="2" height="2" fill="#a08c78"/><rect x="540" y="166" width="2" height="2" fill="#e4d4c0"/><rect x="542" y="166" width="2" height="2" fill="#a08c78"/><rect x="544" y="166" width="2" height="2" fill="#e4d4c0"/><rect x="546" y="166" width="2" height="2" fill="#a08c78"/><rect x="548" y="166" width="2" height="2" fill="#e4d4c0"/><rect x="550" y="166" width="2" height="2" fill="#5a1a1a"/><rect x="534" y="168" width="2" height="2" fill="#000"/><rect x="536" y="168" width="2" height="2" fill="#fff"/><rect x="538" y="168" width="2" height="2" fill="#e4d4c0"/><rect x="540" y="168" width="2" height="2" fill="#a08c78"/><rect x="542" y="168" width="2" height="2" fill="#e4d4c0"/><rect x="544" y="168" width="2" height="2" fill="#a08c78"/><rect x="546" y="168" width="2" height="2" fill="#e4d4c0"/><rect x="548" y="168" width="2" height="2" fill="#a08c78"/><rect x="550" y="168" width="2" height="2" fill="#5a1a1a"/><rect x="534" y="170" width="2" height="2" fill="#000"/><rect x="536" y="170" width="2" height="2" fill="#fff"/><rect x="538" y="170" width="2" height="2" fill="#a08c78"/><rect x="540" y="170" width="2" height="2" fill="#e4d4c0"/><rect x="542" y="170" width="2" height="2" fill="#a08c78"/><rect x="544" y="170" width="2" height="2" fill="#e4d4c0"/><rect x="546" y="170" width="2" height="2" fill="#a08c78"/><rect x="548" y="170" width="2" height="2" fill="#e4d4c0"/><rect x="550" y="170" width="2" height="2" fill="#5a1a1a"/><rect x="534" y="172" width="2" height="2" fill="#000"/><rect x="536" y="172" width="2" height="2" fill="#fff"/><rect x="538" y="172" width="2" height="2" fill="#e4d4c0"/><rect x="540" y="172" width="2" height="2" fill="#a08c78"/><rect x="542" y="172" width="2" height="2" fill="#e4d4c0"/><rect x="544" y="172" width="2" height="2" fill="#a08c78"/><rect x="546" y="172" width="2" height="2" fill="#e4d4c0"/><rect x="548" y="172" width="2" height="2" fill="#a08c78"/><rect x="550" y="172" width="2" height="2" fill="#5a1a1a"/><rect x="536" y="174" width="2" height="2" fill="#5a1a1a"/><rect x="538" y="174" width="2" height="2" fill="#5a1a1a"/><rect x="540" y="174" width="2" height="2" fill="#5a1a1a"/><rect x="542" y="174" width="2" height="2" fill="#5a1a1a"/><rect x="544" y="174" width="2" height="2" fill="#5a1a1a"/><rect x="546" y="174" width="2" height="2" fill="#5a1a1a"/><rect x="548" y="174" width="2" height="2" fill="#5a1a1a"/><rect x="614" y="150" width="2" height="2" fill="#000"/><rect x="616" y="150" width="2" height="2" fill="#000"/><rect x="618" y="150" width="2" height="2" fill="#000"/><rect x="620" y="150" width="2" height="2" fill="#000"/><rect x="622" y="150" width="2" height="2" fill="#000"/><rect x="612" y="152" width="2" height="2" fill="#000"/><rect x="614" y="152" width="2" height="2" fill="#a8a8dc"/><rect x="616" y="152" width="2" height="2" fill="#a8a8dc"/><rect x="618" y="152" width="2" height="2" fill="#a8a8dc"/><rect x="620" y="152" width="2" height="2" fill="#a8a8dc"/><rect x="622" y="152" width="2" height="2" fill="#a8a8dc"/><rect x="624" y="152" width="2" height="2" fill="#000"/><rect x="626" y="152" width="2" height="2" fill="#000"/><rect x="610" y="154" width="2" height="2" fill="#000"/><rect x="612" y="154" width="2" height="2" fill="#dcdcf8"/><rect x="614" y="154" width="2" height="2" fill="#a8a8dc"/><rect x="616" y="154" width="2" height="2" fill="#a8a8dc"/><rect x="618" y="154" width="2" height="2" fill="#a8a8dc"/><rect x="620" y="154" width="2" height="2" fill="#a8a8dc"/><rect x="622" y="154" width="2" height="2" fill="#a8a8dc"/><rect x="624" y="154" width="2" height="2" fill="#a8a8dc"/><rect x="626" y="154" width="2" height="2" fill="#a8a8dc"/><rect x="628" y="154" width="2" height="2" fill="#000"/><rect x="612" y="156" width="2" height="2" fill="#000"/><rect x="614" y="156" width="2" height="2" fill="#a8a8dc"/><rect x="616" y="156" width="2" height="2" fill="#000"/><rect x="618" y="156" width="2" height="2" fill="#000"/><rect x="620" y="156" width="2" height="2" fill="#000"/><rect x="622" y="156" width="2" height="2" fill="#a8a8dc"/><rect x="624" y="156" width="2" height="2" fill="#a8a8dc"/><rect x="626" y="156" width="2" height="2" fill="#a8a8dc"/><rect x="628" y="156" width="2" height="2" fill="#000"/><rect x="614" y="158" width="2" height="2" fill="#000"/><rect x="622" y="158" width="2" height="2" fill="#000"/><rect x="624" y="158" width="2" height="2" fill="#a8a8dc"/><rect x="626" y="158" width="2" height="2" fill="#a8a8dc"/><rect x="628" y="158" width="2" height="2" fill="#a8a8dc"/><rect x="630" y="158" width="2" height="2" fill="#000"/><rect x="624" y="160" width="2" height="2" fill="#000"/><rect x="626" y="160" width="2" height="2" fill="#a8a8dc"/><rect x="628" y="160" width="2" height="2" fill="#a8a8dc"/><rect x="630" y="160" width="2" height="2" fill="#000"/><rect x="614" y="162" width="2" height="2" fill="#000"/><rect x="624" y="162" width="2" height="2" fill="#000"/><rect x="626" y="162" width="2" height="2" fill="#a8a8dc"/><rect x="628" y="162" width="2" height="2" fill="#a8a8dc"/><rect x="630" y="162" width="2" height="2" fill="#000"/><rect x="612" y="164" width="2" height="2" fill="#000"/><rect x="614" y="164" width="2" height="2" fill="#000"/><rect x="622" y="164" width="2" height="2" fill="#000"/><rect x="624" y="164" width="2" height="2" fill="#a8a8dc"/><rect x="626" y="164" width="2" height="2" fill="#a8a8dc"/><rect x="628" y="164" width="2" height="2" fill="#a8a8dc"/><rect x="630" y="164" width="2" height="2" fill="#000"/><rect x="610" y="166" width="2" height="2" fill="#000"/><rect x="612" y="166" width="2" height="2" fill="#dcdcf8"/><rect x="614" y="166" width="2" height="2" fill="#a8a8dc"/><rect x="616" y="166" width="2" height="2" fill="#000"/><rect x="618" y="166" width="2" height="2" fill="#000"/><rect x="620" y="166" width="2" height="2" fill="#000"/><rect x="622" y="166" width="2" height="2" fill="#a8a8dc"/><rect x="624" y="166" width="2" height="2" fill="#a8a8dc"/><rect x="626" y="166" width="2" height="2" fill="#a8a8dc"/><rect x="628" y="166" width="2" height="2" fill="#000"/><rect x="608" y="168" width="2" height="2" fill="#000"/><rect x="610" y="168" width="2" height="2" fill="#dcdcf8"/><rect x="612" y="168" width="2" height="2" fill="#a8a8dc"/><rect x="614" y="168" width="2" height="2" fill="#a8a8dc"/><rect x="616" y="168" width="2" height="2" fill="#a8a8dc"/><rect x="618" y="168" width="2" height="2" fill="#a8a8dc"/><rect x="620" y="168" width="2" height="2" fill="#a8a8dc"/><rect x="622" y="168" width="2" height="2" fill="#a8a8dc"/><rect x="624" y="168" width="2" height="2" fill="#a8a8dc"/><rect x="626" y="168" width="2" height="2" fill="#a8a8dc"/><rect x="628" y="168" width="2" height="2" fill="#000"/><rect x="608" y="170" width="2" height="2" fill="#000"/><rect x="610" y="170" width="2" height="2" fill="#dcdcf8"/><rect x="612" y="170" width="2" height="2" fill="#a8a8dc"/><rect x="614" y="170" width="2" height="2" fill="#a8a8dc"/><rect x="616" y="170" width="2" height="2" fill="#a8a8dc"/><rect x="618" y="170" width="2" height="2" fill="#a8a8dc"/><rect x="620" y="170" width="2" height="2" fill="#a8a8dc"/><rect x="622" y="170" width="2" height="2" fill="#a8a8dc"/><rect x="624" y="170" width="2" height="2" fill="#000"/><rect x="626" y="170" width="2" height="2" fill="#000"/><rect x="610" y="172" width="2" height="2" fill="#000"/><rect x="612" y="172" width="2" height="2" fill="#a8a8dc"/><rect x="614" y="172" width="2" height="2" fill="#a8a8dc"/><rect x="616" y="172" width="2" height="2" fill="#000"/><rect x="618" y="172" width="2" height="2" fill="#000"/><rect x="620" y="172" width="2" height="2" fill="#000"/><rect x="622" y="172" width="2" height="2" fill="#000"/><rect x="612" y="174" width="2" height="2" fill="#000"/><rect x="614" y="174" width="2" height="2" fill="#000"/><rect x="614" y="176" width="2" height="2" fill="#000"/><rect x="682" y="176" width="2" height="2" fill="#8c8c8c"/><rect x="680" y="176" width="2" height="2" fill="#8c8c8c"/><rect x="678" y="176" width="2" height="2" fill="#8c8c8c"/><rect x="676" y="176" width="2" height="2" fill="#8c8c8c"/><rect x="674" y="176" width="2" height="2" fill="#8c8c8c"/><rect x="684" y="174" width="2" height="2" fill="#8c8c8c"/><rect x="682" y="174" width="2" height="2" fill="#a0a0a0"/><rect x="680" y="174" width="2" height="2" fill="#a0a0a0"/><rect x="678" y="174" width="2" height="2" fill="#a0a0a0"/><rect x="676" y="174" width="2" height="2" fill="#a0a0a0"/><rect x="674" y="174" width="2" height="2" fill="#a0a0a0"/><rect x="672" y="174" width="2" height="2" fill="#8c8c8c"/><rect x="670" y="174" width="2" height="2" fill="#8c8c8c"/><rect x="686" y="172" width="2" height="2" fill="#8c8c8c"/><rect x="684" y="172" width="2" height="2" fill="#b0b0b0"/><rect x="682" y="172" width="2" height="2" fill="#a0a0a0"/><rect x="680" y="172" width="2" height="2" fill="#a0a0a0"/><rect x="678" y="172" width="2" height="2" fill="#a0a0a0"/><rect x="676" y="172" width="2" height="2" fill="#a0a0a0"/><rect x="674" y="172" width="2" height="2" fill="#a0a0a0"/><rect x="672" y="172" width="2" height="2" fill="#a0a0a0"/><rect x="670" y="172" width="2" height="2" fill="#a0a0a0"/><rect x="668" y="172" width="2" height="2" fill="#8c8c8c"/><rect x="684" y="170" width="2" height="2" fill="#8c8c8c"/><rect x="682" y="170" width="2" height="2" fill="#a0a0a0"/><rect x="680" y="170" width="2" height="2" fill="#8c8c8c"/><rect x="678" y="170" width="2" height="2" fill="#8c8c8c"/><rect x="676" y="170" width="2" height="2" fill="#8c8c8c"/><rect x="674" y="170" width="2" height="2" fill="#a0a0a0"/><rect x="672" y="170" width="2" height="2" fill="#a0a0a0"/><rect x="670" y="170" width="2" height="2" fill="#a0a0a0"/><rect x="668" y="170" width="2" height="2" fill="#8c8c8c"/><rect x="682" y="168" width="2" height="2" fill="#8c8c8c"/><rect x="674" y="168" width="2" height="2" fill="#8c8c8c"/><rect x="672" y="168" width="2" height="2" fill="#a0a0a0"/><rect x="670" y="168" width="2" height="2" fill="#a0a0a0"/><rect x="668" y="168" width="2" height="2" fill="#a0a0a0"/><rect x="666" y="168" width="2" height="2" fill="#8c8c8c"/><rect x="672" y="166" width="2" height="2" fill="#8c8c8c"/><rect x="670" y="166" width="2" height="2" fill="#a0a0a0"/><rect x="668" y="166" width="2" height="2" fill="#a0a0a0"/><rect x="666" y="166" width="2" height="2" fill="#8c8c8c"/><rect x="682" y="164" width="2" height="2" fill="#8c8c8c"/><rect x="672" y="164" width="2" height="2" fill="#8c8c8c"/><rect x="670" y="164" width="2" height="2" fill="#a0a0a0"/><rect x="668" y="164" width="2" height="2" fill="#a0a0a0"/><rect x="666" y="164" width="2" height="2" fill="#8c8c8c"/><rect x="684" y="162" width="2" height="2" fill="#8c8c8c"/><rect x="682" y="162" width="2" height="2" fill="#8c8c8c"/><rect x="674" y="162" width="2" height="2" fill="#8c8c8c"/><rect x="672" y="162" width="2" height="2" fill="#a0a0a0"/><rect x="670" y="162" width="2" height="2" fill="#a0a0a0"/><rect x="668" y="162" width="2" height="2" fill="#a0a0a0"/><rect x="666" y="162" width="2" height="2" fill="#8c8c8c"/><rect x="686" y="160" width="2" height="2" fill="#8c8c8c"/><rect x="684" y="160" width="2" height="2" fill="#b0b0b0"/><rect x="682" y="160" width="2" height="2" fill="#a0a0a0"/><rect x="680" y="160" width="2" height="2" fill="#8c8c8c"/><rect x="678" y="160" width="2" height="2" fill="#8c8c8c"/><rect x="676" y="160" width="2" height="2" fill="#8c8c8c"/><rect x="674" y="160" width="2" height="2" fill="#a0a0a0"/><rect x="672" y="160" width="2" height="2" fill="#a0a0a0"/><rect x="670" y="160" width="2" height="2" fill="#a0a0a0"/><rect x="668" y="160" width="2" height="2" fill="#8c8c8c"/><rect x="688" y="158" width="2" height="2" fill="#8c8c8c"/><rect x="686" y="158" width="2" height="2" fill="#b0b0b0"/><rect x="684" y="158" width="2" height="2" fill="#a0a0a0"/><rect x="682" y="158" width="2" height="2" fill="#a0a0a0"/><rect x="680" y="158" width="2" height="2" fill="#a0a0a0"/><rect x="678" y="158" width="2" height="2" fill="#a0a0a0"/><rect x="676" y="158" width="2" height="2" fill="#a0a0a0"/><rect x="674" y="158" width="2" height="2" fill="#a0a0a0"/><rect x="672" y="158" width="2" height="2" fill="#a0a0a0"/><rect x="670" y="158" width="2" height="2" fill="#a0a0a0"/><rect x="668" y="158" width="2" height="2" fill="#8c8c8c"/><rect x="688" y="156" width="2" height="2" fill="#8c8c8c"/><rect x="686" y="156" width="2" height="2" fill="#b0b0b0"/><rect x="684" y="156" width="2" height="2" fill="#a0a0a0"/><rect x="682" y="156" width="2" height="2" fill="#a0a0a0"/><rect x="680" y="156" width="2" height="2" fill="#a0a0a0"/><rect x="678" y="156" width="2" height="2" fill="#a0a0a0"/><rect x="676" y="156" width="2" height="2" fill="#a0a0a0"/><rect x="674" y="156" width="2" height="2" fill="#a0a0a0"/><rect x="672" y="156" width="2" height="2" fill="#8c8c8c"/><rect x="670" y="156" width="2" height="2" fill="#8c8c8c"/><rect x="686" y="154" width="2" height="2" fill="#8c8c8c"/><rect x="684" y="154" width="2" height="2" fill="#a0a0a0"/><rect x="682" y="154" width="2" height="2" fill="#a0a0a0"/><rect x="680" y="154" width="2" height="2" fill="#8c8c8c"/><rect x="678" y="154" width="2" height="2" fill="#8c8c8c"/><rect x="676" y="154" width="2" height="2" fill="#8c8c8c"/><rect x="674" y="154" width="2" height="2" fill="#8c8c8c"/><rect x="684" y="152" width="2" height="2" fill="#8c8c8c"/><rect x="682" y="152" width="2" height="2" fill="#8c8c8c"/><rect x="682" y="150" width="2" height="2" fill="#8c8c8c"/><path d="M763 167 L776 180" stroke="#000" stroke-width="6" stroke-linecap="square"/><path d="M764 168 L776 180" stroke="#c89878" stroke-width="2.5"/><rect x="774" y="178" width="4" height="4" fill="#6a3010" /><circle cx="753" cy="157" r="11.5" fill="url(#chkb)" stroke="#000" stroke-width="2.2"/><path d="M764 157 A11.5 11.5 0 0 1 753 168" fill="none" stroke="#1c1c6a" stroke-width="2.2"/><rect x="746" y="156" width="14" height="3" fill="#000" /><path d="M827 167 L840 180" stroke="#000" stroke-width="6" stroke-linecap="square"/><path d="M828 168 L840 180" stroke="#c89878" stroke-width="2.5"/><rect x="838" y="178" width="4" height="4" fill="#6a3010" /><circle cx="817" cy="157" r="11.5" fill="url(#chkb)" stroke="#000" stroke-width="2.2"/><path d="M828 157 A11.5 11.5 0 0 1 817 168" fill="none" stroke="#1c1c6a" stroke-width="2.2"/><rect x="810" y="156" width="14" height="3" fill="#000" /><rect x="815.5" y="150" width="3" height="14" fill="#000" /><path d="M891 167 L904 180" stroke="#000" stroke-width="6" stroke-linecap="square"/><path d="M892 168 L904 180" stroke="#c89878" stroke-width="2.5"/><rect x="902" y="178" width="4" height="4" fill="#6a3010" /><circle cx="881" cy="157" r="11.5" fill="url(#chkb)" stroke="#000" stroke-width="2.2"/><path d="M892 157 A11.5 11.5 0 0 1 881 168" fill="none" stroke="#1c1c6a" stroke-width="2.2"/><text x="881" y="162" font-family="Liberation Sans" font-weight="bold" font-size="13" text-anchor="middle">1:1</text><path d="M955 167 L968 180" stroke="#000" stroke-width="6" stroke-linecap="square"/><path d="M956 168 L968 180" stroke="#c89878" stroke-width="2.5"/><rect x="966" y="178" width="4" height="4" fill="#6a3010" /><circle cx="945" cy="157" r="11.5" fill="url(#chkb)" stroke="#000" stroke-width="2.2"/><path d="M956 157 A11.5 11.5 0 0 1 945 168" fill="none" stroke="#1c1c6a" stroke-width="2.2"/><rect x="939" y="151" width="12" height="12" fill="#b8b8d0" stroke="#000" stroke-width="2"/><rect x="1026" y="172" width="24" height="4" fill="#444" /><rect x="1027" y="159" width="4" height="10" fill="none" stroke="#444" stroke-width="2"/><rect x="1035" y="153" width="6" height="16" fill="none" stroke="#444" stroke-width="2"/><rect x="1046" y="156" width="2" height="13" fill="#3a3aa0" /><path d="M1044 166 h6 l-3 4z" fill="#3a3aa0"/><rect x="1028" y="163" width="2" height="2" fill="#ccc" /><rect x="1037" y="160" width="2" height="2" fill="#ccc" /><rect x="1090" y="162" width="24" height="4" fill="#444" /><rect x="1095" y="159" width="6" height="10" fill="#eee" stroke="#444" stroke-width="2"/><rect x="1103" y="155" width="6" height="18" fill="#eee" stroke="#444" stroke-width="2"/><rect x="1154" y="152" width="24" height="4" fill="#444" /><rect x="1155" y="159" width="4" height="10" fill="none" stroke="#444" stroke-width="2"/><rect x="1163" y="159" width="6" height="16" fill="none" stroke="#444" stroke-width="2"/><rect x="1174" y="159" width="2" height="13" fill="#3a3aa0" /><path d="M1172 163 h6 l-3 -4z" fill="#3a3aa0"/><rect x="1218" y="152" width="4" height="24" fill="#444" /><rect x="1225" y="153" width="10" height="4" fill="none" stroke="#444" stroke-width="2"/><rect x="1225" y="161" width="16" height="6" fill="none" stroke="#444" stroke-width="2"/><rect x="1225" y="172" width="13" height="2" fill="#3a3aa0" /><path d="M1228 170 v6 l-4 -3z" fill="#3a3aa0"/><rect x="1292" y="152" width="4" height="24" fill="#444" /><rect x="1289" y="157" width="10" height="6" fill="#eee" stroke="#444" stroke-width="2"/><rect x="1285" y="165" width="18" height="6" fill="#eee" stroke="#444" stroke-width="2"/><rect x="1366" y="152" width="4" height="24" fill="#444" /><rect x="1353" y="153" width="10" height="4" fill="none" stroke="#444" stroke-width="2"/><rect x="1347" y="161" width="16" height="6" fill="none" stroke="#444" stroke-width="2"/><rect x="1350" y="172" width="13" height="2" fill="#3a3aa0" /><path d="M1360 170 v6 l4 -3z" fill="#3a3aa0"/><rect x="136" y="236" width="2" height="2" fill="#000"/><rect x="138" y="236" width="2" height="2" fill="#000"/><rect x="140" y="236" width="2" height="2" fill="#000"/><rect x="142" y="236" width="2" height="2" fill="#000"/><rect x="144" y="236" width="2" height="2" fill="#000"/><rect x="146" y="236" width="2" height="2" fill="#000"/><rect x="148" y="236" width="2" height="2" fill="#000"/><rect x="150" y="236" width="2" height="2" fill="#000"/><rect x="136" y="238" width="2" height="2" fill="#000"/><rect x="138" y="238" width="2" height="2" fill="#0000ff"/><rect x="140" y="238" width="2" height="2" fill="#0000ff"/><rect x="142" y="238" width="2" height="2" fill="#0000ff"/><rect x="144" y="238" width="2" height="2" fill="#0000ff"/><rect x="146" y="238" width="2" height="2" fill="#0000ff"/><rect x="148" y="238" width="2" height="2" fill="#0000ff"/><rect x="150" y="238" width="2" height="2" fill="#000"/><rect x="136" y="240" width="2" height="2" fill="#000"/><rect x="138" y="240" width="2" height="2" fill="#0000ff"/><rect x="140" y="240" width="2" height="2" fill="#0000ff"/><rect x="142" y="240" width="2" height="2" fill="#000"/><rect x="144" y="240" width="2" height="2" fill="#0000ff"/><rect x="146" y="240" width="2" height="2" fill="#000"/><rect x="148" y="240" width="2" height="2" fill="#0000ff"/><rect x="150" y="240" width="2" height="2" fill="#000"/><rect x="136" y="242" width="2" height="2" fill="#000"/><rect x="138" y="242" width="2" height="2" fill="#0000ff"/><rect x="140" y="242" width="2" height="2" fill="#0000ff"/><rect x="142" y="242" width="2" height="2" fill="#000"/><rect x="144" y="242" width="2" height="2" fill="#0000ff"/><rect x="146" y="242" width="2" height="2" fill="#000"/><rect x="148" y="242" width="2" height="2" fill="#0000ff"/><rect x="150" y="242" width="2" height="2" fill="#000"/><rect x="152" y="242" width="2" height="2" fill="#000"/><rect x="154" y="242" width="2" height="2" fill="#000"/><rect x="156" y="242" width="2" height="2" fill="#000"/><rect x="158" y="242" width="2" height="2" fill="#000"/><rect x="160" y="242" width="2" height="2" fill="#000"/><rect x="162" y="242" width="2" height="2" fill="#000"/><rect x="164" y="242" width="2" height="2" fill="#000"/><rect x="166" y="242" width="2" height="2" fill="#000"/><rect x="168" y="242" width="2" height="2" fill="#000"/><rect x="136" y="244" width="2" height="2" fill="#000"/><rect x="138" y="244" width="2" height="2" fill="#0000ff"/><rect x="140" y="244" width="2" height="2" fill="#000"/><rect x="142" y="244" width="2" height="2" fill="#0000ff"/><rect x="144" y="244" width="2" height="2" fill="#000"/><rect x="146" y="244" width="2" height="2" fill="#0000ff"/><rect x="148" y="244" width="2" height="2" fill="#0000ff"/><rect x="150" y="244" width="2" height="2" fill="#000"/><rect x="168" y="244" width="2" height="2" fill="#000"/><rect x="136" y="246" width="2" height="2" fill="#000"/><rect x="138" y="246" width="2" height="2" fill="#0000ff"/><rect x="140" y="246" width="2" height="2" fill="#000"/><rect x="142" y="246" width="2" height="2" fill="#0000ff"/><rect x="144" y="246" width="2" height="2" fill="#000"/><rect x="146" y="246" width="2" height="2" fill="#0000ff"/><rect x="148" y="246" width="2" height="2" fill="#0000ff"/><rect x="150" y="246" width="2" height="2" fill="#000"/><rect x="168" y="246" width="2" height="2" fill="#000"/><rect x="136" y="248" width="2" height="2" fill="#000"/><rect x="138" y="248" width="2" height="2" fill="#0000ff"/><rect x="140" y="248" width="2" height="2" fill="#0000ff"/><rect x="142" y="248" width="2" height="2" fill="#0000ff"/><rect x="144" y="248" width="2" height="2" fill="#0000ff"/><rect x="146" y="248" width="2" height="2" fill="#0000ff"/><rect x="148" y="248" width="2" height="2" fill="#0000ff"/><rect x="150" y="248" width="2" height="2" fill="#000"/><rect x="168" y="248" width="2" height="2" fill="#000"/><rect x="136" y="250" width="2" height="2" fill="#000"/><rect x="138" y="250" width="2" height="2" fill="#000"/><rect x="140" y="250" width="2" height="2" fill="#000"/><rect x="142" y="250" width="2" height="2" fill="#000"/><rect x="144" y="250" width="2" height="2" fill="#000"/><rect x="146" y="250" width="2" height="2" fill="#000"/><rect x="148" y="250" width="2" height="2" fill="#000"/><rect x="150" y="250" width="2" height="2" fill="#000"/><rect x="168" y="250" width="2" height="2" fill="#000"/><rect x="140" y="252" width="2" height="2" fill="#000"/><rect x="168" y="252" width="2" height="2" fill="#000"/><rect x="138" y="254" width="2" height="2" fill="#000"/><rect x="168" y="254" width="2" height="2" fill="#000"/><rect x="136" y="256" width="2" height="2" fill="#000"/><rect x="164" y="256" width="2" height="2" fill="#000"/><rect x="166" y="256" width="2" height="2" fill="#000"/><rect x="168" y="256" width="2" height="2" fill="#000"/><rect x="170" y="256" width="2" height="2" fill="#000"/><rect x="172" y="256" width="2" height="2" fill="#000"/><rect x="136" y="258" width="2" height="2" fill="#000"/><rect x="166" y="258" width="2" height="2" fill="#000"/><rect x="168" y="258" width="2" height="2" fill="#000"/><rect x="170" y="258" width="2" height="2" fill="#000"/><rect x="138" y="260" width="2" height="2" fill="#000"/><rect x="140" y="260" width="2" height="2" fill="#000"/><rect x="142" y="260" width="2" height="2" fill="#000"/><rect x="144" y="260" width="2" height="2" fill="#000"/><rect x="168" y="260" width="2" height="2" fill="#000"/><rect x="146" y="262" width="2" height="2" fill="#000"/><rect x="166" y="262" width="2" height="2" fill="#000"/><rect x="168" y="262" width="2" height="2" fill="#000"/><rect x="170" y="262" width="2" height="2" fill="#000"/><rect x="146" y="264" width="2" height="2" fill="#000"/><rect x="164" y="264" width="2" height="2" fill="#000"/><rect x="166" y="264" width="2" height="2" fill="#00ff00"/><rect x="168" y="264" width="2" height="2" fill="#00ff00"/><rect x="170" y="264" width="2" height="2" fill="#00ff00"/><rect x="172" y="264" width="2" height="2" fill="#000"/><rect x="144" y="266" width="2" height="2" fill="#000"/><rect x="162" y="266" width="2" height="2" fill="#000"/><rect x="164" y="266" width="2" height="2" fill="#00ff00"/><rect x="166" y="266" width="2" height="2" fill="#00ff00"/><rect x="168" y="266" width="2" height="2" fill="#00ff00"/><rect x="170" y="266" width="2" height="2" fill="#00ff00"/><rect x="172" y="266" width="2" height="2" fill="#00ff00"/><rect x="174" y="266" width="2" height="2" fill="#000"/><rect x="142" y="268" width="2" height="2" fill="#000"/><rect x="160" y="268" width="2" height="2" fill="#000"/><rect x="162" y="268" width="2" height="2" fill="#000"/><rect x="164" y="268" width="2" height="2" fill="#00ff00"/><rect x="166" y="268" width="2" height="2" fill="#00ff00"/><rect x="168" y="268" width="2" height="2" fill="#00ff00"/><rect x="170" y="268" width="2" height="2" fill="#00ff00"/><rect x="172" y="268" width="2" height="2" fill="#00ff00"/><rect x="174" y="268" width="2" height="2" fill="#000"/><rect x="142" y="270" width="2" height="2" fill="#000"/><rect x="156" y="270" width="2" height="2" fill="#000"/><rect x="158" y="270" width="2" height="2" fill="#000"/><rect x="162" y="270" width="2" height="2" fill="#000"/><rect x="164" y="270" width="2" height="2" fill="#00ff00"/><rect x="166" y="270" width="2" height="2" fill="#00ff00"/><rect x="168" y="270" width="2" height="2" fill="#00ff00"/><rect x="170" y="270" width="2" height="2" fill="#00ff00"/><rect x="172" y="270" width="2" height="2" fill="#00ff00"/><rect x="174" y="270" width="2" height="2" fill="#000"/><rect x="144" y="272" width="2" height="2" fill="#000"/><rect x="154" y="272" width="2" height="2" fill="#000"/><rect x="156" y="272" width="2" height="2" fill="#000"/><rect x="164" y="272" width="2" height="2" fill="#000"/><rect x="166" y="272" width="2" height="2" fill="#00ff00"/><rect x="168" y="272" width="2" height="2" fill="#00ff00"/><rect x="170" y="272" width="2" height="2" fill="#00ff00"/><rect x="172" y="272" width="2" height="2" fill="#000"/><rect x="146" y="274" width="2" height="2" fill="#000"/><rect x="148" y="274" width="2" height="2" fill="#000"/><rect x="150" y="274" width="2" height="2" fill="#000"/><rect x="152" y="274" width="2" height="2" fill="#000"/><rect x="166" y="274" width="2" height="2" fill="#000"/><rect x="168" y="274" width="2" height="2" fill="#000"/><rect x="170" y="274" width="2" height="2" fill="#000"/><rect x="123.5" y="295.5" width="64.5" height="60.5" rx="13" fill="#e6e6e6" stroke="#8a9cb2" stroke-width="3"/><defs><filter id="blur4" x="-50%" y="-50%" width="200%" height="200%"><feGaussianBlur stdDeviation="4.2"/></filter></defs><g filter="url(#blur4)" opacity="0.75"><rect x="134" y="317" width="18" height="22" fill="#1a50e8"/><rect x="161" y="304" width="19" height="22" fill="#2a5ae8"/><path d="M142 318 L168 304 L176 326 L150 342Z" fill="#4070e0" opacity="0.7"/></g><rect x="137" y="320" width="12" height="14" fill="#0000f0" stroke="#000" stroke-width="1.6"/><rect x="165" y="308" width="12" height="14" fill="#9898f8" stroke="#000" stroke-width="1.6" stroke-dasharray="2 2"/><path d="M147 315 L160 309 M152 321 L160 317 M154 330 L167 325" stroke="#333" stroke-width="1.8"/><path d="M145 332 L145 348 L149 344 L153 352 L156 350 L152 343 L158 343 Z" fill="#000" stroke="#fff" stroke-width="1.2"/><rect x="414" y="216" width="30" height="30" rx="8" fill="#a4c6fc"/><rect x="415" y="225" width="28" height="12" rx="3" fill="#fcec8c"/><circle cx="418" cy="233" r="3" fill="#94bcf0" stroke="#333" stroke-width="0.6"/><circle cx="429" cy="229" r="3" fill="#94bcf0" stroke="#333" stroke-width="0.6"/><circle cx="438" cy="233" r="3" fill="#94bcf0" stroke="#333" stroke-width="0.6"/><path d="M420 222 L429 242 L437 220" fill="none" stroke="#1c4a8c" stroke-width="3"/><circle cx="420" cy="222" r="3" fill="#1c4a8c"/><circle cx="437" cy="220" r="3" fill="#1c4a8c"/><circle cx="429" cy="242" r="3" fill="#1c4a8c"/><rect x="1120" y="216" width="30" height="30" rx="8" fill="#a4c6fc"/><rect x="1121" y="225" width="28" height="12" rx="3" fill="#fcec8c"/><circle cx="1124" cy="233" r="3" fill="#94bcf0" stroke="#333" stroke-width="0.6"/><circle cx="1135" cy="229" r="3" fill="#94bcf0" stroke="#333" stroke-width="0.6"/><circle cx="1144" cy="233" r="3" fill="#94bcf0" stroke="#333" stroke-width="0.6"/><path d="M1126 222 L1135 242 L1143 220" fill="none" stroke="#1c4a8c" stroke-width="3"/><circle cx="1126" cy="222" r="3" fill="#1c4a8c"/><circle cx="1143" cy="220" r="3" fill="#1c4a8c"/><circle cx="1135" cy="242" r="3" fill="#1c4a8c"/></svg>
<div style="position:absolute;left:1734px;top:246px;width:649px;height:1041px;border-radius:10px;background:#e6e6e6;border:1px solid #dadada;box-sizing:border-box;"></div>
<div style="position:absolute;left:1740px;top:221px;width:637px;height:43.5px;border-radius:10px;background:#e3e3e3;border:1px solid #d3d3d3;box-sizing:border-box;"></div>
<div style="position:absolute;left:1924px;top:223.5px;width:140px;height:39.5px;border-radius:9px;background:#fff;box-shadow:0 0.5px 1px rgba(0,0,0,0.25);"></div>
<div style="position:absolute;left:2326px;top:232px;width:1px;height:24px;background:#c9c9c9;"></div>
<div style="position:absolute;left:1772.50px;top:227.11px;font-size:27.5px;line-height:31.62px;color:#000;font-weight:normal;white-space:nowrap;letter-spacing:-0.816px;">Pathways</div>
<div style="position:absolute;left:1958.00px;top:227.11px;font-size:27.5px;line-height:31.62px;color:#000;font-weight:normal;white-space:nowrap;letter-spacing:-0.641px;">GKnot</div>
<div style="position:absolute;left:2104.80px;top:227.11px;font-size:27.5px;line-height:31.62px;color:#000;font-weight:normal;white-space:nowrap;letter-spacing:-0.338px;">Pathway Nexus</div>
<svg width="2520" height="1784"><polygon points="2348,232.5 2366,242.2 2348,252" fill="#000"/></svg>
<div style="position:absolute;left:1740px;top:280px;width:640px;height:228px;background:#c3d5ea;"></div>
<div style="position:absolute;left:1788px;top:284px;width:338px;height:56px;background:#b9cfe7;"></div>
<div style="position:absolute;left:1744px;top:340px;width:632px;height:164px;background:#fff;"></div>
<svg width="2520" height="1784"><defs><linearGradient id="tg" x1="0" y1="0" x2="0" y2="1"><stop offset="0" stop-color="#9cc0f5"/><stop offset="1" stop-color="#2a62d8"/></linearGradient></defs><polygon points="1755.5,305.5 1778,305.5 1766.7,317.5" fill="url(#tg)"/></svg>
<div style="position:absolute;left:1794.40px;top:296.84px;font-size:27.8px;line-height:31.97px;color:#000;font-weight:normal;white-space:nowrap;letter-spacing:-0.163px;">Bézier Control</div>
<div style="position:absolute;left:1768.00px;top:364.84px;font-size:27.8px;line-height:31.97px;color:#000;font-weight:normal;white-space:nowrap;letter-spacing:0.202px;">Thickness:</div>
<div style="position:absolute;left:2076px;top:390px;width:248px;height:6px;border-radius:3px;background:#c8c8c8;"></div>
<div style="position:absolute;left:2144px;top:378px;width:29px;height:29px;border-radius:50%;background:#fff;box-shadow:0 0.5px 2px rgba(0,0,0,0.4);"></div>
<div style="position:absolute;left:1778px;top:434px;width:252px;height:40px;background:#fff;border-radius:9px;box-shadow:0 0.6px 1.8px rgba(0,0,0,0.38),0 0 0 0.5px rgba(0,0,0,0.10);"></div>
<div style="position:absolute;left:1789.50px;top:437.11px;font-size:27.5px;line-height:31.62px;color:#000;font-weight:normal;white-space:nowrap;letter-spacing:-0.220px;">Remove Crossings</div>
<div style="position:absolute;left:2057px;top:434px;width:285px;height:40px;background:#fff;border-radius:9px;box-shadow:0 0.6px 1.8px rgba(0,0,0,0.38),0 0 0 0.5px rgba(0,0,0,0.10);"></div>
<div style="position:absolute;left:2110.50px;top:437.11px;font-size:27.5px;line-height:31.62px;color:#000;font-weight:normal;white-space:nowrap;letter-spacing:0.640px;">Straight-Lines</div>
<div style="position:absolute;left:2280.40px;top:301.45px;font-size:20.5px;line-height:23.57px;color:#7a7a7a;font-weight:normal;white-space:nowrap;letter-spacing:1.053px;">1/1</div>
<svg width="2520" height="1784"><defs><linearGradient id="ga" x1="0" y1="0" x2="1" y2="1"><stop offset="0" stop-color="#e8ecf8"/><stop offset="1" stop-color="#3a4c8c"/></linearGradient></defs><path d="M2149 304 L2160 314 H2154 V319.6 H2143.6 V314 H2138 Z" fill="url(#ga)"/><path d="M2182 310 H2187.5 V302 H2198 V310 H2204 L2193 318 Z" fill="url(#ga)"/><path d="M2227.5 313.5 L2247 296.5 V304 H2262 V323.8 H2247 V331.4 Z" fill="#969696"/><path d="M2362 313.5 L2342.5 296.5 V304 H2326 V323.8 H2342.5 V331.4 Z" fill="#969696"/></svg>
<div style="position:absolute;left:1740px;top:550px;width:637px;height:1px;background:#cfcfcf;"></div>
<div style="position:absolute;left:1740px;top:958px;width:637px;height:1px;background:#cfcfcf;"></div>
<div style="position:absolute;left:1740px;top:1196px;width:637px;height:1px;background:#cfcfcf;"></div>
<div style="position:absolute;left:1740.00px;top:574.11px;font-size:27.5px;line-height:31.62px;color:#000;font-weight:normal;white-space:nowrap;letter-spacing:0.934px;">Data-Handling</div>
<div style="position:absolute;left:1754px;top:612px;width:611px;height:40px;background:#fff;border-radius:9px;box-shadow:0 0.6px 1.8px rgba(0,0,0,0.38),0 0 0 0.5px rgba(0,0,0,0.10);"></div>
<div style="position:absolute;left:1977.15px;top:615.11px;font-size:27.5px;line-height:31.62px;color:#000;font-weight:normal;white-space:nowrap;letter-spacing:-0.309px;">Create Empty</div>
<div style="position:absolute;left:1754px;top:670px;width:611px;height:40px;background:#fff;border-radius:9px;box-shadow:0 0.6px 1.8px rgba(0,0,0,0.38),0 0 0 0.5px rgba(0,0,0,0.10);"></div>
<div style="position:absolute;left:1977.15px;top:673.11px;font-size:27.5px;line-height:31.62px;color:#000;font-weight:normal;white-space:nowrap;letter-spacing:0.241px;">Import Graph</div>
<div style="position:absolute;left:1754px;top:728px;width:611px;height:40px;background:#fff;border-radius:9px;box-shadow:0 0.6px 1.8px rgba(0,0,0,0.38),0 0 0 0.5px rgba(0,0,0,0.10);"></div>
<div style="position:absolute;left:1930.30px;top:731.11px;font-size:27.5px;line-height:31.62px;color:#000;font-weight:normal;white-space:nowrap;letter-spacing:0.244px;">Export for Rendering</div>
<div style="position:absolute;left:1754px;top:786px;width:611px;height:40px;background:#fff;border-radius:9px;box-shadow:0 0.6px 1.8px rgba(0,0,0,0.38),0 0 0 0.5px rgba(0,0,0,0.10);"></div>
<div style="position:absolute;left:1888.05px;top:789.11px;font-size:27.5px;line-height:31.62px;color:#000;font-weight:normal;white-space:nowrap;letter-spacing:0.023px;">Download Example Graphs!</div>
<div style="position:absolute;left:1750px;top:840px;width:618px;height:40px;background:#fff;border-radius:9px;box-shadow:0 0.6px 1.8px rgba(0,0,0,0.38),0 0 0 0.5px rgba(0,0,0,0.10);"></div>
<div style="position:absolute;left:1775.00px;top:845.11px;font-size:27.5px;line-height:31.62px;color:#000;font-weight:normal;white-space:nowrap;letter-spacing:-0.267px;">Example 1</div>
<svg width="2520" height="1784"><defs><linearGradient id="gst" x1="0" y1="0" x2="0" y2="1"><stop offset="0" stop-color="#248cff"/><stop offset="1" stop-color="#006bff"/></linearGradient></defs><rect x="2332" y="844" width="32" height="32" rx="7.5" fill="url(#gst)"/><path d="M2342.3 856.3 L2348 850.6 L2353.8 856.3 M2342.3 863.7 L2348 869.4 L2353.8 863.7" fill="none" stroke="#fff" stroke-width="3" stroke-linecap="round" stroke-linejoin="round"/></svg>
<div style="position:absolute;left:1754px;top:898px;width:611px;height:40px;background:#fff;border-radius:9px;box-shadow:0 0.6px 1.8px rgba(0,0,0,0.38),0 0 0 0.5px rgba(0,0,0,0.10);"></div>
<div style="position:absolute;left:1970.20px;top:901.11px;font-size:27.5px;line-height:31.62px;color:#000;font-weight:normal;white-space:nowrap;letter-spacing:-0.301px;">Open Example</div>
<div style="position:absolute;left:1740.00px;top:980.71px;font-size:27.5px;line-height:31.62px;color:#000;font-weight:normal;white-space:nowrap;letter-spacing:-0.093px;">Pattern Generation</div>
<div style="position:absolute;left:1754px;top:1020px;width:611px;height:40px;background:#fff;border-radius:9px;box-shadow:0 0.6px 1.8px rgba(0,0,0,0.38),0 0 0 0.5px rgba(0,0,0,0.10);"></div>
<div style="position:absolute;left:1930.00px;top:1023.11px;font-size:27.5px;line-height:31.62px;color:#000;font-weight:normal;white-space:nowrap;letter-spacing:-0.051px;">Enter Combine Mode</div>
<div style="position:absolute;left:1754px;top:1078px;width:611px;height:40px;background:#fff;border-radius:9px;box-shadow:0 0.6px 1.8px rgba(0,0,0,0.38),0 0 0 0.5px rgba(0,0,0,0.10);"></div>
<div style="position:absolute;left:1907.35px;top:1081.11px;font-size:27.5px;line-height:31.62px;color:#000;font-weight:normal;white-space:nowrap;letter-spacing:0.148px;">Edge Disentanglement 1</div>
<div style="position:absolute;left:1754px;top:1136px;width:611px;height:40px;background:#fff;border-radius:9px;box-shadow:0 0.6px 1.8px rgba(0,0,0,0.38),0 0 0 0.5px rgba(0,0,0,0.10);"></div>
<div style="position:absolute;left:1907.35px;top:1139.11px;font-size:27.5px;line-height:31.62px;color:#000;font-weight:normal;white-space:nowrap;letter-spacing:0.148px;">Edge Disentanglement 2</div>
<div style="position:absolute;left:1754px;top:1226px;width:611px;height:40px;background:#fff;border-radius:9px;box-shadow:0 0.6px 1.8px rgba(0,0,0,0.38),0 0 0 0.5px rgba(0,0,0,0.10);"></div>
<div style="position:absolute;left:2016.95px;top:1229.11px;font-size:27.5px;line-height:31.62px;color:#000;font-weight:normal;white-space:nowrap;letter-spacing:-1.020px;">Render</div>
<svg width="2520" height="1784"><ellipse cx="2062.2" cy="1034.9" rx="150.3" ry="59.4" fill="none" stroke="#e8412a" stroke-width="5"/></svg>
<div style="position:absolute;left:1718px;top:1300px;width:682px;height:17px;background:#fafafa;"></div>
<div style="position:absolute;left:2053px;top:1303px;width:12px;height:12px;border-radius:50%;background:#e0e0e0;"></div>
<div style="position:absolute;left:1718px;top:1318px;width:178px;height:240px;background:#fff;"></div>
<div style="position:absolute;left:1896px;top:1318px;width:504px;height:240px;background:#808080;"></div>
<div style="position:absolute;left:1718px;top:1318px;width:132px;height:239px;border:1.4px solid #0000ff;box-sizing:border-box;"></div>
<div style="position:absolute;left:1778.8px;top:1342.7px;width:12px;height:12px;border:2px solid #b0b0b0;box-sizing:border-box;"></div>
<div style="position:absolute;left:1766.9px;top:1378.8px;width:12px;height:12px;border:2px solid #b0b0b0;box-sizing:border-box;"></div>
<div style="position:absolute;left:1789.0px;top:1378.8px;width:12px;height:12px;border:2px solid #b0b0b0;box-sizing:border-box;"></div>
<div style="position:absolute;left:1776.6px;top:1400.8px;width:12px;height:12px;border:2px solid #b0b0b0;box-sizing:border-box;"></div>
<div style="position:absolute;left:1728.8px;top:1413.0px;width:12px;height:12px;border:2px solid #b0b0b0;box-sizing:border-box;"></div>
<div style="position:absolute;left:1823.0px;top:1413.0px;width:12px;height:12px;border:2px solid #b0b0b0;box-sizing:border-box;"></div>
<div style="position:absolute;left:1780.8px;top:1441.0px;width:12px;height:12px;border:2px solid #b0b0b0;box-sizing:border-box;"></div>
<div style="position:absolute;left:1768.5px;top:1478.8px;width:12px;height:12px;border:2px solid #b0b0b0;box-sizing:border-box;"></div>
<div style="position:absolute;left:1790.8px;top:1478.8px;width:12px;height:12px;border:2px solid #b0b0b0;box-sizing:border-box;"></div>
<div style="position:absolute;left:1778.8px;top:1500.8px;width:12px;height:12px;border:2px solid #b0b0b0;box-sizing:border-box;"></div>
<div style="position:absolute;left:1730.8px;top:1513.0px;width:12px;height:12px;border:2px solid #b0b0b0;box-sizing:border-box;"></div>
<div style="position:absolute;left:1825.0px;top:1513.0px;width:12px;height:12px;border:2px solid #b0b0b0;box-sizing:border-box;"></div>
<div style="position:absolute;left:112px;top:1564px;width:2296px;height:72px;background:#eeeeee;"></div>
<div style="position:absolute;left:114px;top:1568px;width:2043px;height:63px;border:1.5px solid #a8a8a8;box-shadow:inset 1px 1px 0 #fff;box-sizing:border-box;"></div>
<div style="position:absolute;left:2164px;top:1568px;width:63px;height:63px;border:2px solid #b4b4b4;box-sizing:border-box;"></div>
<div style="position:absolute;left:2234px;top:1568px;width:63px;height:63px;border:2px solid #b4b4b4;box-sizing:border-box;"></div>
<div style="position:absolute;left:2170.40px;top:1575.38px;font-size:25px;line-height:28.75px;color:#000;font-weight:normal;white-space:nowrap;letter-spacing:0.087px;">12</div>
<div style="position:absolute;left:2169.30px;top:1605.15px;font-size:20.5px;line-height:23.57px;color:#000;font-weight:normal;white-space:nowrap;letter-spacing:-0.141px;">nodes</div>
<div style="position:absolute;left:2239.50px;top:1575.38px;font-size:25px;line-height:28.75px;color:#000;font-weight:normal;white-space:nowrap;letter-spacing:1.488px;">24</div>
<div style="position:absolute;left:2238.80px;top:1605.15px;font-size:20.5px;line-height:23.57px;color:#000;font-weight:normal;white-space:nowrap;letter-spacing:-0.016px;">edges</div>
<div style="position:absolute;left:2308.80px;top:1579.50px;font-size:20px;line-height:23.00px;color:#888;font-weight:normal;white-space:nowrap;letter-spacing:0.100px;">65 MB</div>
<div style="position:absolute;left:2308.80px;top:1605.60px;font-size:20px;line-height:23.00px;color:#888;font-weight:normal;white-space:nowrap;letter-spacing:0.000px;">2 ES</div>
</div></body></html>
